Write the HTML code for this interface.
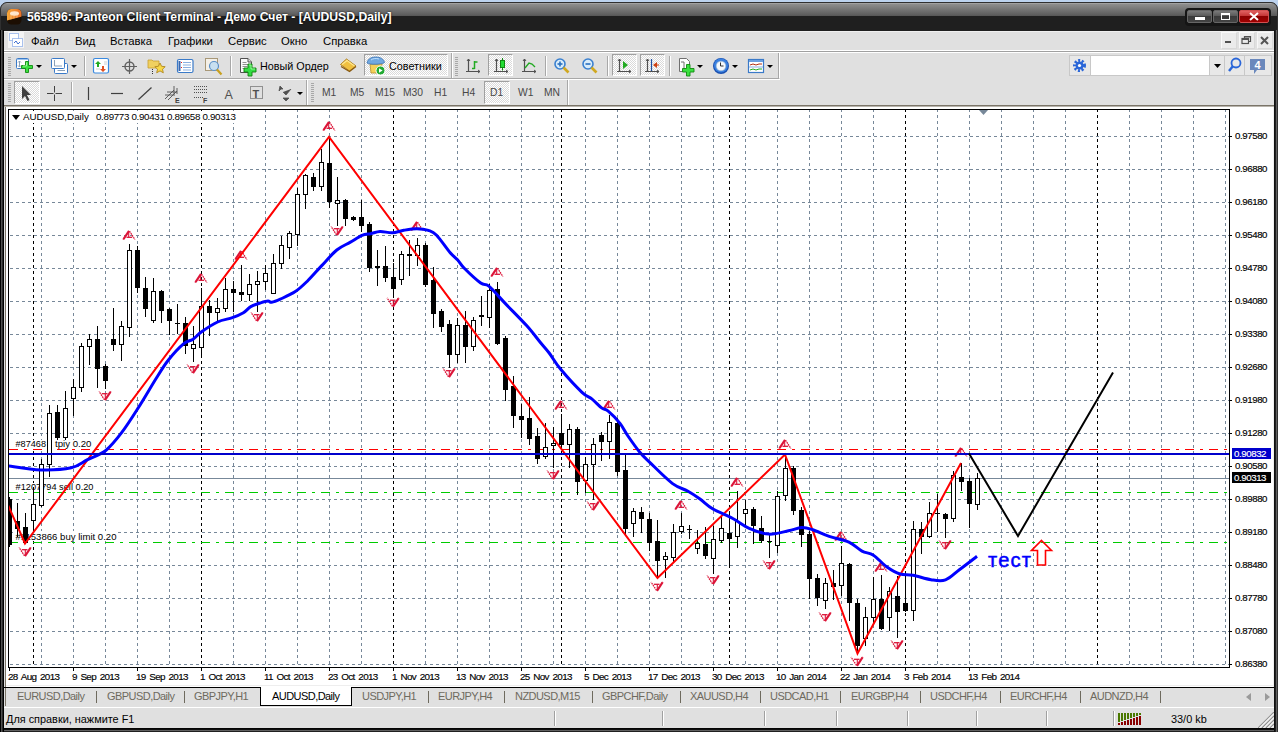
<!DOCTYPE html>
<html><head><meta charset="utf-8"><style>
*{margin:0;padding:0;box-sizing:border-box}
html,body{width:1278px;height:732px;overflow:hidden;background:#BCD2EE;font-family:"Liberation Sans",sans-serif}
.abs{position:absolute}
.pl,.dl{-webkit-text-stroke:0.15px currentColor}
#win{position:absolute;left:0;top:2px;width:1278px;height:730px;background:#1F1F1F;border-radius:7px 7px 0 0;border:1px solid #303030}
#tgrad{position:absolute;left:1px;top:3px;width:1276px;height:13px;border-radius:6px 6px 0 0;background:linear-gradient(#B4B4B4 0px,#8E8E8E 1px,#5C5C5C 12px,#555 13px)}
#title{position:absolute;left:27px;top:10px;color:#fff;font-weight:bold;font-size:12.2px;white-space:nowrap;text-shadow:0 0 2px #000}
#menubar{position:absolute;left:4px;top:31px;width:1270px;height:19px;background:#E0E0E0;border-top:1px solid #F0F0F0}
.mi{position:absolute;top:3px;font-size:11.3px;color:#000;white-space:nowrap}
#tbarea{position:absolute;left:4px;top:53px;width:1270px;height:52px;background:#E0E0E0}
.pl{position:absolute;left:1235px;font-size:9.7px;letter-spacing:-0.42px;color:#000;white-space:nowrap;line-height:14px}
.pb{color:#fff;width:39px;left:1232px;padding-left:2px;height:11px;line-height:11px}
.dl{position:absolute;top:670px;font-size:9.9px;letter-spacing:-0.65px;word-spacing:1.5px;color:#000;white-space:nowrap;line-height:14px}
.ol{position:absolute;left:15px;font-size:9.6px;color:#000;white-space:nowrap;line-height:11px}
.tab{position:absolute;top:689px;font-size:11px;letter-spacing:-0.55px;color:#6E6A5E;white-space:nowrap;line-height:14px}
.tsep{position:absolute;top:691px;width:1px;height:12px;background:#6E6A5E}
.ssep{position:absolute;top:711px;width:2px;height:15px;border-left:1px solid #A0A0A0;border-right:1px solid #fff}
</style></head><body>
<div id="win"></div>
<div id="tgrad"></div>
<!-- app icon -->
<svg class="abs" style="left:6px;top:8px" width="17" height="17"><defs><clipPath id="ic"><path d="M0 12.8L17 8.2V0H0Z"/></clipPath><linearGradient id="og" x1="0" y1="0" x2="1" y2="0"><stop offset="0" stop-color="#F8A838"/><stop offset="1" stop-color="#E8702A"/></linearGradient></defs><rect x="1" y="1" width="14.5" height="15.5" rx="4.5" fill="#1C0E02"/><g clip-path="url(#ic)"><rect x="1" y="1" width="14.5" height="15.5" rx="4.5" fill="url(#og)"/><ellipse cx="8.5" cy="5.5" rx="4.5" ry="2.2" fill="#FFF0E0" opacity="0.9"/><path d="M5 6v6M8 6v5.5M11 6v5" stroke="#FFD8B0" stroke-width="0.8" opacity="0.6"/></g></svg>
<div id="title">565896: Panteon Client Terminal - Демо Счет - [AUDUSD,Daily]</div>
<!-- window buttons -->
<div class="abs" style="left:1185px;top:8px;width:86px;height:18px;border-radius:4px;background:#151515"></div>
<div class="abs" style="left:1187px;top:10px;width:25px;height:13px;border-radius:2px;background:linear-gradient(#7A7A7A,#555 50%,#3A3A3A 50%,#444);border:1px solid #666"></div>
<div class="abs" style="left:1195px;top:17px;width:10px;height:3px;background:#fff"></div>
<div class="abs" style="left:1213px;top:10px;width:25px;height:13px;border-radius:2px;background:linear-gradient(#7A7A7A,#555 50%,#3A3A3A 50%,#444);border:1px solid #666"></div>
<div class="abs" style="left:1221px;top:13px;width:9px;height:7px;border:1px solid #fff;border-top-width:2px"></div>
<div class="abs" style="left:1239px;top:10px;width:30px;height:13px;border-radius:2px;background:linear-gradient(#E06060,#C03030 50%,#8A0000 50%,#A00000);border:1px solid #D05050"></div>
<svg class="abs" style="left:1249px;top:12px" width="10" height="9"><path d="M1 1L9 8M9 1L1 8" stroke="#fff" stroke-width="2"/></svg>

<div id="menubar"></div>
<div class="abs" style="left:4px;top:50px;width:1270px;height:1px;background:#fff"></div>
<div class="abs" style="left:4px;top:51px;width:1270px;height:1px;background:#A0A0A0"></div>
<div class="abs" style="left:4px;top:52px;width:1270px;height:1px;background:#fff"></div>
<!-- MDI icon -->
<div class="abs" style="left:8px;top:32px;width:16px;height:16px;background:#F4F4F4"></div>
<svg class="abs" style="left:9px;top:33px" width="14" height="14"><rect x="0.5" y="0.5" width="9" height="7" fill="#fff" stroke="#5A8AE0" stroke-dasharray="1 1"/><rect x="3.5" y="5.5" width="10" height="8" fill="#fff" stroke="#5A8AE0" stroke-dasharray="1 1"/><path d="M5 10l2-2 2 3 2-2" stroke="#4070D0" fill="none"/></svg>
<div class="mi" style="left:31px;top:35px">Файл</div>
<div class="mi" style="left:75px;top:35px">Вид</div>
<div class="mi" style="left:110px;top:35px">Вставка</div>
<div class="mi" style="left:168px;top:35px">Графики</div>
<div class="mi" style="left:228px;top:35px">Сервис</div>
<div class="mi" style="left:281px;top:35px">Окно</div>
<div class="mi" style="left:323px;top:35px">Справка</div>
<!-- MDI buttons -->
<div class="abs" style="left:1221px;top:32px;width:16px;height:17px;background:#EBEBEB;border:1px solid #F8F8F8;border-right-color:#D8D8D8;border-bottom-color:#D8D8D8"></div>
<div class="abs" style="left:1225px;top:41px;width:6px;height:2px;background:#505050"></div>
<div class="abs" style="left:1239px;top:32px;width:16px;height:17px;background:#EBEBEB;border:1px solid #F8F8F8;border-right-color:#D8D8D8;border-bottom-color:#D8D8D8"></div>
<svg class="abs" style="left:1241px;top:35px" width="11" height="10"><path d="M3.5 3V1.5H9.5V6.5H8" stroke="#505050" fill="none" stroke-width="1.2"/><rect x="1" y="3.5" width="6.5" height="5" stroke="#505050" fill="none" stroke-width="1.2"/><path d="M1 4.5h6.5M3.5 2h6" stroke="#505050"/></svg>
<div class="abs" style="left:1257px;top:32px;width:16px;height:17px;background:#EBEBEB;border:1px solid #F8F8F8;border-right-color:#D8D8D8;border-bottom-color:#D8D8D8"></div>
<svg class="abs" style="left:1260px;top:36px" width="9" height="9"><path d="M1 1L8 8M8 1L1 8" stroke="#555" stroke-width="2"/></svg>

<div id="tbarea"></div>
<div class="abs" style="left:4px;top:53px;width:1270px;height:25px;background:#E0E0E0"></div>
<div class="abs" style="left:4px;top:78px;width:775px;height:1px;background:#A8A8A8"></div>
<div class="abs" style="left:4px;top:79px;width:776px;height:1px;background:#fff"></div>
<div class="abs" style="left:364px;top:54px;width:84px;height:22px;background:repeating-conic-gradient(#FFFFFF 0 25%,#DADADA 0 50%) 0 0/2px 2px;border-left:1px solid #A0A0A0;border-top:1px solid #A0A0A0;border-right:1px solid #fff;border-bottom:1px solid #fff"></div>
<div class="abs" style="left:488px;top:54px;width:25px;height:22px;background:repeating-conic-gradient(#FFFFFF 0 25%,#DADADA 0 50%) 0 0/2px 2px;border-left:1px solid #A0A0A0;border-top:1px solid #A0A0A0;border-right:1px solid #fff;border-bottom:1px solid #fff"></div>
<div class="abs" style="left:612px;top:54px;width:25px;height:22px;background:repeating-conic-gradient(#FFFFFF 0 25%,#DADADA 0 50%) 0 0/2px 2px;border-left:1px solid #A0A0A0;border-top:1px solid #A0A0A0;border-right:1px solid #fff;border-bottom:1px solid #fff"></div>
<div class="abs" style="left:640px;top:54px;width:25px;height:22px;background:repeating-conic-gradient(#FFFFFF 0 25%,#DADADA 0 50%) 0 0/2px 2px;border-left:1px solid #A0A0A0;border-top:1px solid #A0A0A0;border-right:1px solid #fff;border-bottom:1px solid #fff"></div>
<div class="abs" style="left:14px;top:81px;width:26px;height:23px;background:repeating-conic-gradient(#FFFFFF 0 25%,#DADADA 0 50%) 0 0/2px 2px;border-left:1px solid #A0A0A0;border-top:1px solid #A0A0A0;border-right:1px solid #fff;border-bottom:1px solid #fff"></div>
<div class="abs" style="left:484px;top:81px;width:26px;height:23px;background:repeating-conic-gradient(#FFFFFF 0 25%,#DADADA 0 50%) 0 0/2px 2px;border-left:1px solid #A0A0A0;border-top:1px solid #A0A0A0;border-right:1px solid #fff;border-bottom:1px solid #fff"></div>
<div class="abs" style="left:1069px;top:55px;width:203px;height:21px;background:#E8E8E8;border:1px solid #C8C8C8"></div>
<div class="abs" style="left:1090px;top:56px;width:120px;height:19px;background:#fff;border-left:1px solid #C8C8C8;border-right:1px solid #C8C8C8"></div>
<div class="abs" style="left:1224px;top:56px;width:1px;height:19px;background:#C8C8C8"></div>
<div class="abs" style="left:1244px;top:56px;width:1px;height:19px;background:#C8C8C8"></div>
<svg class="abs" style="left:0;top:0" width="1278" height="110">
<path d="M778.5 53V78M451.5 53V78M306.5 80V105M567.5 80V105" stroke="#A8A8A8"/>
<path d="M779.5 53V78M452.5 53V78M307.5 80V105M568.5 80V105" stroke="#fff"/>
<path d="M8 57.5h3M8 59.5h3M8 61.5h3M8 63.5h3M8 65.5h3M8 67.5h3M8 69.5h3M8 71.5h3M8 73.5h3M8 75.5h3" stroke="#A8A8A8" stroke-width="1"/>
<path d="M455 57.5h3M455 59.5h3M455 61.5h3M455 63.5h3M455 65.5h3M455 67.5h3M455 69.5h3M455 71.5h3M455 73.5h3M455 75.5h3" stroke="#A8A8A8" stroke-width="1"/>
<path d="M8 83.5h3M8 85.5h3M8 87.5h3M8 89.5h3M8 91.5h3M8 93.5h3M8 95.5h3M8 97.5h3M8 99.5h3M8 101.5h3" stroke="#A8A8A8" stroke-width="1"/>
<path d="M311 83.5h3M311 85.5h3M311 87.5h3M311 89.5h3M311 91.5h3M311 93.5h3M311 95.5h3M311 97.5h3M311 99.5h3M311 101.5h3" stroke="#A8A8A8" stroke-width="1"/>
<path d="M84.5 56V76" stroke="#A8A8A8"/><path d="M85.5 56V76" stroke="#fff"/>
<path d="M230.5 56V76" stroke="#A8A8A8"/><path d="M231.5 56V76" stroke="#fff"/>
<path d="M545.5 56V76" stroke="#A8A8A8"/><path d="M546.5 56V76" stroke="#fff"/>
<path d="M607.5 56V76" stroke="#A8A8A8"/><path d="M608.5 56V76" stroke="#fff"/>
<path d="M669.5 56V76" stroke="#A8A8A8"/><path d="M670.5 56V76" stroke="#fff"/>
<path d="M71.5 82V103" stroke="#A8A8A8"/><path d="M72.5 82V103" stroke="#fff"/>
<rect x="16.5" y="58.5" width="12" height="10" rx="1" fill="#fff" stroke="#3A7AC8"/><path d="M17 59.5h11" stroke="#9CC4F0"/><path d="M19.5 61V67M18 62.5l1.5-1.5 1.5 1.5M18 65.5l1.5 1.5 1.5-1.5" stroke="#8AA0B8" fill="none"/><path d="M25.5 61.5h3v4h4v3h-4v4h-3v-4h-4v-3h4z" fill="#3AE040" stroke="#108A10" stroke-width="0.9"/><path d="M26.5 62.5v3.5h-3.5" stroke="#B0FFB0" stroke-width="0.8" fill="none"/>
<path d="M36 65h6l-3 3z" fill="#000"/>
<rect x="54.5" y="63.5" width="13" height="10" rx="1" fill="#fff" stroke="#3A7AC8"/><rect x="51.5" y="58.5" width="13" height="10" rx="1" fill="#fff" stroke="#3A7AC8"/><path d="M54.5 60V66H62M57.5 70.5H65" stroke="#8AA0B8" fill="none"/>
<path d="M71 65h6l-3 3z" fill="#000"/>
<rect x="93.5" y="58.5" width="15" height="14.5" rx="1.5" fill="#fff" stroke="#3A8AE0" stroke-width="1.2"/><path d="M98 61l-3 3h2v3h2v-3h2z" fill="#22AA22"/><path d="M103 72l3-3h-2v-3h-2v3h-2z" fill="#E05020"/><path d="M96 69h4M104 62h3M104 64h3" stroke="#D0D0D0"/>
<circle cx="129.5" cy="66.5" r="4.5" fill="none" stroke="#606060" stroke-width="1.4"/><path d="M129.5 59V74M122 66.5H137" stroke="#606060" stroke-width="1.2"/>
<path d="M148 60h4l1 1h6v7h-11z" fill="#F0D060" stroke="#C8A030" stroke-width="0.8"/><path d="M160 63l1.6 3.3 3.6.4-2.7 2.5.8 3.6-3.3-1.9-3.3 1.9.8-3.6-2.7-2.5 3.6-.4z" fill="#F8D848" stroke="#B08820" stroke-width="0.9"/><path d="M152.5 69v5" stroke="#333" stroke-dasharray="1 1"/>
<rect x="177.5" y="59.5" width="15.5" height="13" rx="1.5" fill="#fff" stroke="#3A7AC8" stroke-width="1.2"/><path d="M179.5 61v10" stroke="#3A6AB0" stroke-width="2"/><path d="M183 62.5h8M183 65h8M183 67.5h8M183 70h8" stroke="#8AB0E0"/><path d="M181 62.5h1M181 67.5h1" stroke="#E02020"/>
<rect x="205.5" y="58.5" width="12" height="12" fill="#F4F0E8" stroke="#A89878"/><circle cx="214" cy="66" r="4.5" fill="#C8E0F0" stroke="#5A90C8" stroke-width="1.2"/><path d="M217 69.5l4.5 5" stroke="#C8A020" stroke-width="2.2"/>
<path d="M240.5 58.5h7.5l3.5 3.5v10.5h-11z" fill="#FAFAFA" stroke="#505050"/><path d="M248 58.5v3.5h3.5" fill="#E0E0E0" stroke="#505050"/><path d="M242.5 62.5h4M242.5 64.5h6M242.5 66.5h5M242.5 68.5h3" stroke="#909090"/><path d="M248 64h4v4h4v4h-4v4h-4v-4h-4v-4h4z" fill="#33DD44" stroke="#10800E" stroke-width="0.9"/><path d="M249 65h2v4h4" stroke="#A8FFA8" stroke-width="0.8" fill="none"/>
<path d="M340.5 64.5L346.5 59l9.5 7-6.5 5z" fill="#F0C040" stroke="#A87818" stroke-width="0.9"/><path d="M342 64.5L347 60.5l7.5 5.5" fill="none" stroke="#FFE890" stroke-width="1.2"/><path d="M341 66.5l8.5 5 6.5-5" fill="none" stroke="#8A5A10" stroke-width="1.2"/>
<path d="M370 64h12l-1 9h-10z" fill="#F4D058" stroke="#B89030" stroke-width="0.8"/><path d="M367 63c1-5 5-6 9-6s8 2 8.5 5.5c-2 2-15 2.5-17.5 0.5z" fill="#70A8E0" stroke="#3A70B0" stroke-width="0.8"/><path d="M371 60c2-1.5 5-2 8-1" stroke="#C0E0FF" stroke-width="1" fill="none"/><circle cx="380.5" cy="70.5" r="4.5" fill="#22AA33" stroke="#fff" stroke-width="1"/><path d="M379 68.2v4.6l3.6-2.3z" fill="#fff"/>
<path d="M468.5 59V72M466 71.5H480" stroke="#505050" stroke-width="1.2"/><path d="M467 61l1.5-2 1.5 2M478 70l2 1.5-2 1.5" stroke="#505050" fill="none"/><path d="M474.5 61V69M472 68.5h2.5M474.5 62h3" stroke="#22AA22" stroke-width="1.5"/>
<path d="M496.5 59V72M494 71.5H508" stroke="#505050" stroke-width="1.2"/><path d="M495 61l1.5-2 1.5 2M506 70l2 1.5-2 1.5" stroke="#505050" fill="none"/><rect x="500.5" y="60.5" width="4" height="7" fill="#22DD33" stroke="#118811"/><path d="M502.5 58v2.5M502.5 67.5v3" stroke="#118811"/>
<path d="M524.5 59V72M522 71.5H536" stroke="#505050" stroke-width="1.2"/><path d="M523 61l1.5-2 1.5 2M534 70l2 1.5-2 1.5" stroke="#505050" fill="none"/><path d="M525 68l4-5 3 1 3 3" stroke="#22AA22" stroke-width="1.4" fill="none"/>
<circle cx="560" cy="64" r="5" fill="#D8ECFA" stroke="#3A80D0" stroke-width="1.6"/><path d="M563.5 67.5l5 5" stroke="#D0A820" stroke-width="2.6"/><path d="M557.5 64h5" stroke="#2A70C0" stroke-width="1.6"/><path d="M560 61.5v5" stroke="#2A70C0" stroke-width="1.6"/>
<circle cx="588" cy="64" r="5" fill="#D8ECFA" stroke="#3A80D0" stroke-width="1.6"/><path d="M591.5 67.5l5 5" stroke="#D0A820" stroke-width="2.6"/><path d="M585.5 64h5" stroke="#2A70C0" stroke-width="1.6"/>
<path d="M619.5 59V72M617 71.5H631" stroke="#505050" stroke-width="1.2"/><path d="M618 61l1.5-2 1.5 2M629 70l2 1.5-2 1.5" stroke="#505050" fill="none"/><path d="M623 61v8l5-4z" fill="#22AA22"/>
<path d="M647.5 59V72M645 71.5H659" stroke="#505050" stroke-width="1.2"/><path d="M646 61l1.5-2 1.5 2M657 70l2 1.5-2 1.5" stroke="#505050" fill="none"/><path d="M651.5 59V71" stroke="#2050A0" stroke-width="1.2"/><path d="M653 65l4-3v6z" fill="#D04010"/><path d="M655 65h4" stroke="#D04010"/>
<path d="M679.5 58.5h7l3 3v10h-10z" fill="#fff" stroke="#707070"/><path d="M681 62h3v8" stroke="#707070" fill="none"/><path d="M686.5 64.5h3.5v4h4v3.5h-4v4h-3.5v-4h-4v-3.5h4z" fill="#3AE040" stroke="#108A10" stroke-width="0.9"/>
<path d="M697 65h6l-3 3z" fill="#000"/>
<circle cx="721" cy="66" r="8" fill="#1A50B0"/><circle cx="721" cy="65.5" r="7" fill="#3A80E0"/><circle cx="721" cy="66" r="4.8" fill="#F4F8FC" stroke="#A0B8D0" stroke-width="0.6"/><path d="M720.5 62.5v3.5h3" stroke="#333" stroke-width="1" fill="none"/>
<path d="M732 65h6l-3 3z" fill="#000"/>
<rect x="748.5" y="59.5" width="15" height="13" fill="#fff" stroke="#3A7AC8" stroke-width="1.2"/><path d="M749 61h14" stroke="#6AA0E0" stroke-width="2"/><path d="M750 65l3-1 3 1 3-1 3 0" stroke="#B03010" fill="none"/><path d="M750 70l3-1 3 1 3-1 3 0" stroke="#22AA22" fill="none"/><path d="M749 67h14" stroke="#8AB0E0"/>
<path d="M767 65h6l-3 3z" fill="#000"/>
<path d="M22 86V99l3-3 2.5 5 2-1-2.5-5h4z" fill="#404040"/>
<path d="M54.5 86V92.5M54.5 94.5V101M47 93.5H53.5M55.5 93.5H62" stroke="#404040" stroke-width="1"/>
<path d="M88.5 87V100" stroke="#404040" stroke-width="1.2"/>
<path d="M111 93.5H123" stroke="#404040" stroke-width="1.2"/>
<path d="M138.5 99.5L151.5 87.5" stroke="#404040" stroke-width="1.2"/>
<path d="M165 99L174 90M168 100L177 91M165 95h10M167 92h10M174 86v8M177 88v6" stroke="#505050" stroke-width="0.9"/><text x="175" y="103" font-size="7" font-family="Liberation Sans" font-weight="bold" fill="#404040">E</text>
<path d="M194 86.5h13M194 89.5h13M194 92.5h13M194 97.5h9" stroke="#505050" stroke-dasharray="1 1"/><text x="203" y="103" font-size="7" font-family="Liberation Sans" font-weight="bold" fill="#404040">F</text>
<text x="224.5" y="98.5" font-size="12.5" font-family="Liberation Sans" fill="#505050">A</text>
<rect x="250.5" y="86.5" width="12" height="12" fill="none" stroke="#404040" stroke-dasharray="1 1"/><text x="252.5" y="97.5" font-size="11" font-family="Liberation Sans" font-weight="bold" fill="#505050">T</text>
<path d="M280 86l3 3h-2l-2 2zM283 92l3 3 5-6M286 101l3-3h-6z" fill="#505050" stroke="#505050" stroke-width="0.8"/>
<path d="M297 92h6l-3 3z" fill="#000"/>
</svg>
<div class="abs" style="left:260px;top:59px;font-size:10.8px;line-height:14px;white-space:nowrap">Новый Ордер</div>
<div class="abs" style="left:389px;top:59px;font-size:10.8px;line-height:14px;white-space:nowrap">Советники</div>
<div class="abs" style="left:322px;top:86px;font-size:10.3px;line-height:14px;color:#484848;white-space:nowrap">M1</div>
<div class="abs" style="left:350px;top:86px;font-size:10.3px;line-height:14px;color:#484848;white-space:nowrap">M5</div>
<div class="abs" style="left:375px;top:86px;font-size:10.3px;line-height:14px;color:#484848;white-space:nowrap">M15</div>
<div class="abs" style="left:403px;top:86px;font-size:10.3px;line-height:14px;color:#484848;white-space:nowrap">M30</div>
<div class="abs" style="left:434px;top:86px;font-size:10.3px;line-height:14px;color:#484848;white-space:nowrap">H1</div>
<div class="abs" style="left:462px;top:86px;font-size:10.3px;line-height:14px;color:#484848;white-space:nowrap">H4</div>
<div class="abs" style="left:490px;top:86px;font-size:10.3px;line-height:14px;color:#484848;white-space:nowrap">D1</div>
<div class="abs" style="left:518px;top:86px;font-size:10.3px;line-height:14px;color:#484848;white-space:nowrap">W1</div>
<div class="abs" style="left:544px;top:86px;font-size:10.3px;line-height:14px;color:#484848;white-space:nowrap">MN</div>
<svg class="abs" style="left:1069px;top:55px" width="203" height="21"><g transform="translate(10.5 10.5)"><circle r="5" fill="none" stroke="#2A66D8" stroke-width="3" stroke-dasharray="2 1.6"/><circle r="4" fill="#2A66D8"/><circle r="1.6" fill="#fff"/></g><path d="M145 9h7l-3.5 4z" fill="#000"/><circle cx="167" cy="8" r="4.5" fill="none" stroke="#2A66D8" stroke-width="1.8"/><path d="M164 11l-4 5" stroke="#2A66D8" stroke-width="2.4"/><path d="M181 4h15v11h-8l-3 4v-4h-4z" fill="#6A88BC"/><text x="185.5" y="13.5" font-size="11" font-weight="bold" font-family="Liberation Sans" fill="#fff">4</text></svg>

<!-- chart white area -->
<div class="abs" style="left:4px;top:105px;width:1270px;height:1px;background:#7A7468"></div>
<div class="abs" style="left:4px;top:106px;width:1270px;height:1px;background:#B8B4AC"></div>
<div class="abs" style="left:4px;top:107px;width:1270px;height:580px;background:#fff"></div>

<svg width="1278" height="732" style="position:absolute;left:0;top:0">
<defs><clipPath id="cp"><rect x="9" y="110" width="1220" height="557"/></clipPath></defs>
<g clip-path="url(#cp)" shape-rendering="crispEdges">
<path d="M10 136.5h3 M16 136.5h3 M22 136.5h3 M28 136.5h3 M34 136.5h3 M40 136.5h3 M46 136.5h3 M52 136.5h3 M58 136.5h3 M64 136.5h3 M70 136.5h3 M76 136.5h3 M82 136.5h3 M88 136.5h3 M94 136.5h3 M100 136.5h3 M106 136.5h3 M112 136.5h3 M118 136.5h3 M124 136.5h3 M130 136.5h3 M136 136.5h3 M142 136.5h3 M148 136.5h3 M154 136.5h3 M160 136.5h3 M166 136.5h3 M172 136.5h3 M178 136.5h3 M184 136.5h3 M190 136.5h3 M196 136.5h3 M202 136.5h3 M208 136.5h3 M214 136.5h3 M220 136.5h3 M226 136.5h3 M232 136.5h3 M238 136.5h3 M244 136.5h3 M250 136.5h3 M256 136.5h3 M262 136.5h3 M268 136.5h3 M274 136.5h3 M280 136.5h3 M286 136.5h3 M292 136.5h3 M298 136.5h3 M304 136.5h3 M310 136.5h3 M316 136.5h3 M322 136.5h3 M328 136.5h3 M334 136.5h3 M340 136.5h3 M346 136.5h3 M352 136.5h3 M358 136.5h3 M364 136.5h3 M370 136.5h3 M376 136.5h3 M382 136.5h3 M388 136.5h3 M394 136.5h3 M400 136.5h3 M406 136.5h3 M412 136.5h3 M418 136.5h3 M424 136.5h3 M430 136.5h3 M436 136.5h3 M442 136.5h3 M448 136.5h3 M454 136.5h3 M460 136.5h3 M466 136.5h3 M472 136.5h3 M478 136.5h3 M484 136.5h3 M490 136.5h3 M496 136.5h3 M502 136.5h3 M508 136.5h3 M514 136.5h3 M520 136.5h3 M526 136.5h3 M532 136.5h3 M538 136.5h3 M544 136.5h3 M550 136.5h3 M556 136.5h3 M562 136.5h3 M568 136.5h3 M574 136.5h3 M580 136.5h3 M586 136.5h3 M592 136.5h3 M598 136.5h3 M604 136.5h3 M610 136.5h3 M616 136.5h3 M622 136.5h3 M628 136.5h3 M634 136.5h3 M640 136.5h3 M646 136.5h3 M652 136.5h3 M658 136.5h3 M664 136.5h3 M670 136.5h3 M676 136.5h3 M682 136.5h3 M688 136.5h3 M694 136.5h3 M700 136.5h3 M706 136.5h3 M712 136.5h3 M718 136.5h3 M724 136.5h3 M730 136.5h3 M736 136.5h3 M742 136.5h3 M748 136.5h3 M754 136.5h3 M760 136.5h3 M766 136.5h3 M772 136.5h3 M778 136.5h3 M784 136.5h3 M790 136.5h3 M796 136.5h3 M802 136.5h3 M808 136.5h3 M814 136.5h3 M820 136.5h3 M826 136.5h3 M832 136.5h3 M838 136.5h3 M844 136.5h3 M850 136.5h3 M856 136.5h3 M862 136.5h3 M868 136.5h3 M874 136.5h3 M880 136.5h3 M886 136.5h3 M892 136.5h3 M898 136.5h3 M904 136.5h3 M910 136.5h3 M916 136.5h3 M922 136.5h3 M928 136.5h3 M934 136.5h3 M940 136.5h3 M946 136.5h3 M952 136.5h3 M958 136.5h3 M964 136.5h3 M970 136.5h3 M976 136.5h3 M982 136.5h3 M988 136.5h3 M994 136.5h3 M1000 136.5h3 M1006 136.5h3 M1012 136.5h3 M1018 136.5h3 M1024 136.5h3 M1030 136.5h3 M1036 136.5h3 M1042 136.5h3 M1048 136.5h3 M1054 136.5h3 M1060 136.5h3 M1066 136.5h3 M1072 136.5h3 M1078 136.5h3 M1084 136.5h3 M1090 136.5h3 M1096 136.5h3 M1102 136.5h3 M1108 136.5h3 M1114 136.5h3 M1120 136.5h3 M1126 136.5h3 M1132 136.5h3 M1138 136.5h3 M1144 136.5h3 M1150 136.5h3 M1156 136.5h3 M1162 136.5h3 M1168 136.5h3 M1174 136.5h3 M1180 136.5h3 M1186 136.5h3 M1192 136.5h3 M1198 136.5h3 M1204 136.5h3 M1210 136.5h3 M1216 136.5h3 M1222 136.5h3 M1228 136.5h3 M10 169.5h3 M16 169.5h3 M22 169.5h3 M28 169.5h3 M34 169.5h3 M40 169.5h3 M46 169.5h3 M52 169.5h3 M58 169.5h3 M64 169.5h3 M70 169.5h3 M76 169.5h3 M82 169.5h3 M88 169.5h3 M94 169.5h3 M100 169.5h3 M106 169.5h3 M112 169.5h3 M118 169.5h3 M124 169.5h3 M130 169.5h3 M136 169.5h3 M142 169.5h3 M148 169.5h3 M154 169.5h3 M160 169.5h3 M166 169.5h3 M172 169.5h3 M178 169.5h3 M184 169.5h3 M190 169.5h3 M196 169.5h3 M202 169.5h3 M208 169.5h3 M214 169.5h3 M220 169.5h3 M226 169.5h3 M232 169.5h3 M238 169.5h3 M244 169.5h3 M250 169.5h3 M256 169.5h3 M262 169.5h3 M268 169.5h3 M274 169.5h3 M280 169.5h3 M286 169.5h3 M292 169.5h3 M298 169.5h3 M304 169.5h3 M310 169.5h3 M316 169.5h3 M322 169.5h3 M328 169.5h3 M334 169.5h3 M340 169.5h3 M346 169.5h3 M352 169.5h3 M358 169.5h3 M364 169.5h3 M370 169.5h3 M376 169.5h3 M382 169.5h3 M388 169.5h3 M394 169.5h3 M400 169.5h3 M406 169.5h3 M412 169.5h3 M418 169.5h3 M424 169.5h3 M430 169.5h3 M436 169.5h3 M442 169.5h3 M448 169.5h3 M454 169.5h3 M460 169.5h3 M466 169.5h3 M472 169.5h3 M478 169.5h3 M484 169.5h3 M490 169.5h3 M496 169.5h3 M502 169.5h3 M508 169.5h3 M514 169.5h3 M520 169.5h3 M526 169.5h3 M532 169.5h3 M538 169.5h3 M544 169.5h3 M550 169.5h3 M556 169.5h3 M562 169.5h3 M568 169.5h3 M574 169.5h3 M580 169.5h3 M586 169.5h3 M592 169.5h3 M598 169.5h3 M604 169.5h3 M610 169.5h3 M616 169.5h3 M622 169.5h3 M628 169.5h3 M634 169.5h3 M640 169.5h3 M646 169.5h3 M652 169.5h3 M658 169.5h3 M664 169.5h3 M670 169.5h3 M676 169.5h3 M682 169.5h3 M688 169.5h3 M694 169.5h3 M700 169.5h3 M706 169.5h3 M712 169.5h3 M718 169.5h3 M724 169.5h3 M730 169.5h3 M736 169.5h3 M742 169.5h3 M748 169.5h3 M754 169.5h3 M760 169.5h3 M766 169.5h3 M772 169.5h3 M778 169.5h3 M784 169.5h3 M790 169.5h3 M796 169.5h3 M802 169.5h3 M808 169.5h3 M814 169.5h3 M820 169.5h3 M826 169.5h3 M832 169.5h3 M838 169.5h3 M844 169.5h3 M850 169.5h3 M856 169.5h3 M862 169.5h3 M868 169.5h3 M874 169.5h3 M880 169.5h3 M886 169.5h3 M892 169.5h3 M898 169.5h3 M904 169.5h3 M910 169.5h3 M916 169.5h3 M922 169.5h3 M928 169.5h3 M934 169.5h3 M940 169.5h3 M946 169.5h3 M952 169.5h3 M958 169.5h3 M964 169.5h3 M970 169.5h3 M976 169.5h3 M982 169.5h3 M988 169.5h3 M994 169.5h3 M1000 169.5h3 M1006 169.5h3 M1012 169.5h3 M1018 169.5h3 M1024 169.5h3 M1030 169.5h3 M1036 169.5h3 M1042 169.5h3 M1048 169.5h3 M1054 169.5h3 M1060 169.5h3 M1066 169.5h3 M1072 169.5h3 M1078 169.5h3 M1084 169.5h3 M1090 169.5h3 M1096 169.5h3 M1102 169.5h3 M1108 169.5h3 M1114 169.5h3 M1120 169.5h3 M1126 169.5h3 M1132 169.5h3 M1138 169.5h3 M1144 169.5h3 M1150 169.5h3 M1156 169.5h3 M1162 169.5h3 M1168 169.5h3 M1174 169.5h3 M1180 169.5h3 M1186 169.5h3 M1192 169.5h3 M1198 169.5h3 M1204 169.5h3 M1210 169.5h3 M1216 169.5h3 M1222 169.5h3 M1228 169.5h3 M10 202.5h3 M16 202.5h3 M22 202.5h3 M28 202.5h3 M34 202.5h3 M40 202.5h3 M46 202.5h3 M52 202.5h3 M58 202.5h3 M64 202.5h3 M70 202.5h3 M76 202.5h3 M82 202.5h3 M88 202.5h3 M94 202.5h3 M100 202.5h3 M106 202.5h3 M112 202.5h3 M118 202.5h3 M124 202.5h3 M130 202.5h3 M136 202.5h3 M142 202.5h3 M148 202.5h3 M154 202.5h3 M160 202.5h3 M166 202.5h3 M172 202.5h3 M178 202.5h3 M184 202.5h3 M190 202.5h3 M196 202.5h3 M202 202.5h3 M208 202.5h3 M214 202.5h3 M220 202.5h3 M226 202.5h3 M232 202.5h3 M238 202.5h3 M244 202.5h3 M250 202.5h3 M256 202.5h3 M262 202.5h3 M268 202.5h3 M274 202.5h3 M280 202.5h3 M286 202.5h3 M292 202.5h3 M298 202.5h3 M304 202.5h3 M310 202.5h3 M316 202.5h3 M322 202.5h3 M328 202.5h3 M334 202.5h3 M340 202.5h3 M346 202.5h3 M352 202.5h3 M358 202.5h3 M364 202.5h3 M370 202.5h3 M376 202.5h3 M382 202.5h3 M388 202.5h3 M394 202.5h3 M400 202.5h3 M406 202.5h3 M412 202.5h3 M418 202.5h3 M424 202.5h3 M430 202.5h3 M436 202.5h3 M442 202.5h3 M448 202.5h3 M454 202.5h3 M460 202.5h3 M466 202.5h3 M472 202.5h3 M478 202.5h3 M484 202.5h3 M490 202.5h3 M496 202.5h3 M502 202.5h3 M508 202.5h3 M514 202.5h3 M520 202.5h3 M526 202.5h3 M532 202.5h3 M538 202.5h3 M544 202.5h3 M550 202.5h3 M556 202.5h3 M562 202.5h3 M568 202.5h3 M574 202.5h3 M580 202.5h3 M586 202.5h3 M592 202.5h3 M598 202.5h3 M604 202.5h3 M610 202.5h3 M616 202.5h3 M622 202.5h3 M628 202.5h3 M634 202.5h3 M640 202.5h3 M646 202.5h3 M652 202.5h3 M658 202.5h3 M664 202.5h3 M670 202.5h3 M676 202.5h3 M682 202.5h3 M688 202.5h3 M694 202.5h3 M700 202.5h3 M706 202.5h3 M712 202.5h3 M718 202.5h3 M724 202.5h3 M730 202.5h3 M736 202.5h3 M742 202.5h3 M748 202.5h3 M754 202.5h3 M760 202.5h3 M766 202.5h3 M772 202.5h3 M778 202.5h3 M784 202.5h3 M790 202.5h3 M796 202.5h3 M802 202.5h3 M808 202.5h3 M814 202.5h3 M820 202.5h3 M826 202.5h3 M832 202.5h3 M838 202.5h3 M844 202.5h3 M850 202.5h3 M856 202.5h3 M862 202.5h3 M868 202.5h3 M874 202.5h3 M880 202.5h3 M886 202.5h3 M892 202.5h3 M898 202.5h3 M904 202.5h3 M910 202.5h3 M916 202.5h3 M922 202.5h3 M928 202.5h3 M934 202.5h3 M940 202.5h3 M946 202.5h3 M952 202.5h3 M958 202.5h3 M964 202.5h3 M970 202.5h3 M976 202.5h3 M982 202.5h3 M988 202.5h3 M994 202.5h3 M1000 202.5h3 M1006 202.5h3 M1012 202.5h3 M1018 202.5h3 M1024 202.5h3 M1030 202.5h3 M1036 202.5h3 M1042 202.5h3 M1048 202.5h3 M1054 202.5h3 M1060 202.5h3 M1066 202.5h3 M1072 202.5h3 M1078 202.5h3 M1084 202.5h3 M1090 202.5h3 M1096 202.5h3 M1102 202.5h3 M1108 202.5h3 M1114 202.5h3 M1120 202.5h3 M1126 202.5h3 M1132 202.5h3 M1138 202.5h3 M1144 202.5h3 M1150 202.5h3 M1156 202.5h3 M1162 202.5h3 M1168 202.5h3 M1174 202.5h3 M1180 202.5h3 M1186 202.5h3 M1192 202.5h3 M1198 202.5h3 M1204 202.5h3 M1210 202.5h3 M1216 202.5h3 M1222 202.5h3 M1228 202.5h3 M10 235.5h3 M16 235.5h3 M22 235.5h3 M28 235.5h3 M34 235.5h3 M40 235.5h3 M46 235.5h3 M52 235.5h3 M58 235.5h3 M64 235.5h3 M70 235.5h3 M76 235.5h3 M82 235.5h3 M88 235.5h3 M94 235.5h3 M100 235.5h3 M106 235.5h3 M112 235.5h3 M118 235.5h3 M124 235.5h3 M130 235.5h3 M136 235.5h3 M142 235.5h3 M148 235.5h3 M154 235.5h3 M160 235.5h3 M166 235.5h3 M172 235.5h3 M178 235.5h3 M184 235.5h3 M190 235.5h3 M196 235.5h3 M202 235.5h3 M208 235.5h3 M214 235.5h3 M220 235.5h3 M226 235.5h3 M232 235.5h3 M238 235.5h3 M244 235.5h3 M250 235.5h3 M256 235.5h3 M262 235.5h3 M268 235.5h3 M274 235.5h3 M280 235.5h3 M286 235.5h3 M292 235.5h3 M298 235.5h3 M304 235.5h3 M310 235.5h3 M316 235.5h3 M322 235.5h3 M328 235.5h3 M334 235.5h3 M340 235.5h3 M346 235.5h3 M352 235.5h3 M358 235.5h3 M364 235.5h3 M370 235.5h3 M376 235.5h3 M382 235.5h3 M388 235.5h3 M394 235.5h3 M400 235.5h3 M406 235.5h3 M412 235.5h3 M418 235.5h3 M424 235.5h3 M430 235.5h3 M436 235.5h3 M442 235.5h3 M448 235.5h3 M454 235.5h3 M460 235.5h3 M466 235.5h3 M472 235.5h3 M478 235.5h3 M484 235.5h3 M490 235.5h3 M496 235.5h3 M502 235.5h3 M508 235.5h3 M514 235.5h3 M520 235.5h3 M526 235.5h3 M532 235.5h3 M538 235.5h3 M544 235.5h3 M550 235.5h3 M556 235.5h3 M562 235.5h3 M568 235.5h3 M574 235.5h3 M580 235.5h3 M586 235.5h3 M592 235.5h3 M598 235.5h3 M604 235.5h3 M610 235.5h3 M616 235.5h3 M622 235.5h3 M628 235.5h3 M634 235.5h3 M640 235.5h3 M646 235.5h3 M652 235.5h3 M658 235.5h3 M664 235.5h3 M670 235.5h3 M676 235.5h3 M682 235.5h3 M688 235.5h3 M694 235.5h3 M700 235.5h3 M706 235.5h3 M712 235.5h3 M718 235.5h3 M724 235.5h3 M730 235.5h3 M736 235.5h3 M742 235.5h3 M748 235.5h3 M754 235.5h3 M760 235.5h3 M766 235.5h3 M772 235.5h3 M778 235.5h3 M784 235.5h3 M790 235.5h3 M796 235.5h3 M802 235.5h3 M808 235.5h3 M814 235.5h3 M820 235.5h3 M826 235.5h3 M832 235.5h3 M838 235.5h3 M844 235.5h3 M850 235.5h3 M856 235.5h3 M862 235.5h3 M868 235.5h3 M874 235.5h3 M880 235.5h3 M886 235.5h3 M892 235.5h3 M898 235.5h3 M904 235.5h3 M910 235.5h3 M916 235.5h3 M922 235.5h3 M928 235.5h3 M934 235.5h3 M940 235.5h3 M946 235.5h3 M952 235.5h3 M958 235.5h3 M964 235.5h3 M970 235.5h3 M976 235.5h3 M982 235.5h3 M988 235.5h3 M994 235.5h3 M1000 235.5h3 M1006 235.5h3 M1012 235.5h3 M1018 235.5h3 M1024 235.5h3 M1030 235.5h3 M1036 235.5h3 M1042 235.5h3 M1048 235.5h3 M1054 235.5h3 M1060 235.5h3 M1066 235.5h3 M1072 235.5h3 M1078 235.5h3 M1084 235.5h3 M1090 235.5h3 M1096 235.5h3 M1102 235.5h3 M1108 235.5h3 M1114 235.5h3 M1120 235.5h3 M1126 235.5h3 M1132 235.5h3 M1138 235.5h3 M1144 235.5h3 M1150 235.5h3 M1156 235.5h3 M1162 235.5h3 M1168 235.5h3 M1174 235.5h3 M1180 235.5h3 M1186 235.5h3 M1192 235.5h3 M1198 235.5h3 M1204 235.5h3 M1210 235.5h3 M1216 235.5h3 M1222 235.5h3 M1228 235.5h3 M10 268.5h3 M16 268.5h3 M22 268.5h3 M28 268.5h3 M34 268.5h3 M40 268.5h3 M46 268.5h3 M52 268.5h3 M58 268.5h3 M64 268.5h3 M70 268.5h3 M76 268.5h3 M82 268.5h3 M88 268.5h3 M94 268.5h3 M100 268.5h3 M106 268.5h3 M112 268.5h3 M118 268.5h3 M124 268.5h3 M130 268.5h3 M136 268.5h3 M142 268.5h3 M148 268.5h3 M154 268.5h3 M160 268.5h3 M166 268.5h3 M172 268.5h3 M178 268.5h3 M184 268.5h3 M190 268.5h3 M196 268.5h3 M202 268.5h3 M208 268.5h3 M214 268.5h3 M220 268.5h3 M226 268.5h3 M232 268.5h3 M238 268.5h3 M244 268.5h3 M250 268.5h3 M256 268.5h3 M262 268.5h3 M268 268.5h3 M274 268.5h3 M280 268.5h3 M286 268.5h3 M292 268.5h3 M298 268.5h3 M304 268.5h3 M310 268.5h3 M316 268.5h3 M322 268.5h3 M328 268.5h3 M334 268.5h3 M340 268.5h3 M346 268.5h3 M352 268.5h3 M358 268.5h3 M364 268.5h3 M370 268.5h3 M376 268.5h3 M382 268.5h3 M388 268.5h3 M394 268.5h3 M400 268.5h3 M406 268.5h3 M412 268.5h3 M418 268.5h3 M424 268.5h3 M430 268.5h3 M436 268.5h3 M442 268.5h3 M448 268.5h3 M454 268.5h3 M460 268.5h3 M466 268.5h3 M472 268.5h3 M478 268.5h3 M484 268.5h3 M490 268.5h3 M496 268.5h3 M502 268.5h3 M508 268.5h3 M514 268.5h3 M520 268.5h3 M526 268.5h3 M532 268.5h3 M538 268.5h3 M544 268.5h3 M550 268.5h3 M556 268.5h3 M562 268.5h3 M568 268.5h3 M574 268.5h3 M580 268.5h3 M586 268.5h3 M592 268.5h3 M598 268.5h3 M604 268.5h3 M610 268.5h3 M616 268.5h3 M622 268.5h3 M628 268.5h3 M634 268.5h3 M640 268.5h3 M646 268.5h3 M652 268.5h3 M658 268.5h3 M664 268.5h3 M670 268.5h3 M676 268.5h3 M682 268.5h3 M688 268.5h3 M694 268.5h3 M700 268.5h3 M706 268.5h3 M712 268.5h3 M718 268.5h3 M724 268.5h3 M730 268.5h3 M736 268.5h3 M742 268.5h3 M748 268.5h3 M754 268.5h3 M760 268.5h3 M766 268.5h3 M772 268.5h3 M778 268.5h3 M784 268.5h3 M790 268.5h3 M796 268.5h3 M802 268.5h3 M808 268.5h3 M814 268.5h3 M820 268.5h3 M826 268.5h3 M832 268.5h3 M838 268.5h3 M844 268.5h3 M850 268.5h3 M856 268.5h3 M862 268.5h3 M868 268.5h3 M874 268.5h3 M880 268.5h3 M886 268.5h3 M892 268.5h3 M898 268.5h3 M904 268.5h3 M910 268.5h3 M916 268.5h3 M922 268.5h3 M928 268.5h3 M934 268.5h3 M940 268.5h3 M946 268.5h3 M952 268.5h3 M958 268.5h3 M964 268.5h3 M970 268.5h3 M976 268.5h3 M982 268.5h3 M988 268.5h3 M994 268.5h3 M1000 268.5h3 M1006 268.5h3 M1012 268.5h3 M1018 268.5h3 M1024 268.5h3 M1030 268.5h3 M1036 268.5h3 M1042 268.5h3 M1048 268.5h3 M1054 268.5h3 M1060 268.5h3 M1066 268.5h3 M1072 268.5h3 M1078 268.5h3 M1084 268.5h3 M1090 268.5h3 M1096 268.5h3 M1102 268.5h3 M1108 268.5h3 M1114 268.5h3 M1120 268.5h3 M1126 268.5h3 M1132 268.5h3 M1138 268.5h3 M1144 268.5h3 M1150 268.5h3 M1156 268.5h3 M1162 268.5h3 M1168 268.5h3 M1174 268.5h3 M1180 268.5h3 M1186 268.5h3 M1192 268.5h3 M1198 268.5h3 M1204 268.5h3 M1210 268.5h3 M1216 268.5h3 M1222 268.5h3 M1228 268.5h3 M10 301.5h3 M16 301.5h3 M22 301.5h3 M28 301.5h3 M34 301.5h3 M40 301.5h3 M46 301.5h3 M52 301.5h3 M58 301.5h3 M64 301.5h3 M70 301.5h3 M76 301.5h3 M82 301.5h3 M88 301.5h3 M94 301.5h3 M100 301.5h3 M106 301.5h3 M112 301.5h3 M118 301.5h3 M124 301.5h3 M130 301.5h3 M136 301.5h3 M142 301.5h3 M148 301.5h3 M154 301.5h3 M160 301.5h3 M166 301.5h3 M172 301.5h3 M178 301.5h3 M184 301.5h3 M190 301.5h3 M196 301.5h3 M202 301.5h3 M208 301.5h3 M214 301.5h3 M220 301.5h3 M226 301.5h3 M232 301.5h3 M238 301.5h3 M244 301.5h3 M250 301.5h3 M256 301.5h3 M262 301.5h3 M268 301.5h3 M274 301.5h3 M280 301.5h3 M286 301.5h3 M292 301.5h3 M298 301.5h3 M304 301.5h3 M310 301.5h3 M316 301.5h3 M322 301.5h3 M328 301.5h3 M334 301.5h3 M340 301.5h3 M346 301.5h3 M352 301.5h3 M358 301.5h3 M364 301.5h3 M370 301.5h3 M376 301.5h3 M382 301.5h3 M388 301.5h3 M394 301.5h3 M400 301.5h3 M406 301.5h3 M412 301.5h3 M418 301.5h3 M424 301.5h3 M430 301.5h3 M436 301.5h3 M442 301.5h3 M448 301.5h3 M454 301.5h3 M460 301.5h3 M466 301.5h3 M472 301.5h3 M478 301.5h3 M484 301.5h3 M490 301.5h3 M496 301.5h3 M502 301.5h3 M508 301.5h3 M514 301.5h3 M520 301.5h3 M526 301.5h3 M532 301.5h3 M538 301.5h3 M544 301.5h3 M550 301.5h3 M556 301.5h3 M562 301.5h3 M568 301.5h3 M574 301.5h3 M580 301.5h3 M586 301.5h3 M592 301.5h3 M598 301.5h3 M604 301.5h3 M610 301.5h3 M616 301.5h3 M622 301.5h3 M628 301.5h3 M634 301.5h3 M640 301.5h3 M646 301.5h3 M652 301.5h3 M658 301.5h3 M664 301.5h3 M670 301.5h3 M676 301.5h3 M682 301.5h3 M688 301.5h3 M694 301.5h3 M700 301.5h3 M706 301.5h3 M712 301.5h3 M718 301.5h3 M724 301.5h3 M730 301.5h3 M736 301.5h3 M742 301.5h3 M748 301.5h3 M754 301.5h3 M760 301.5h3 M766 301.5h3 M772 301.5h3 M778 301.5h3 M784 301.5h3 M790 301.5h3 M796 301.5h3 M802 301.5h3 M808 301.5h3 M814 301.5h3 M820 301.5h3 M826 301.5h3 M832 301.5h3 M838 301.5h3 M844 301.5h3 M850 301.5h3 M856 301.5h3 M862 301.5h3 M868 301.5h3 M874 301.5h3 M880 301.5h3 M886 301.5h3 M892 301.5h3 M898 301.5h3 M904 301.5h3 M910 301.5h3 M916 301.5h3 M922 301.5h3 M928 301.5h3 M934 301.5h3 M940 301.5h3 M946 301.5h3 M952 301.5h3 M958 301.5h3 M964 301.5h3 M970 301.5h3 M976 301.5h3 M982 301.5h3 M988 301.5h3 M994 301.5h3 M1000 301.5h3 M1006 301.5h3 M1012 301.5h3 M1018 301.5h3 M1024 301.5h3 M1030 301.5h3 M1036 301.5h3 M1042 301.5h3 M1048 301.5h3 M1054 301.5h3 M1060 301.5h3 M1066 301.5h3 M1072 301.5h3 M1078 301.5h3 M1084 301.5h3 M1090 301.5h3 M1096 301.5h3 M1102 301.5h3 M1108 301.5h3 M1114 301.5h3 M1120 301.5h3 M1126 301.5h3 M1132 301.5h3 M1138 301.5h3 M1144 301.5h3 M1150 301.5h3 M1156 301.5h3 M1162 301.5h3 M1168 301.5h3 M1174 301.5h3 M1180 301.5h3 M1186 301.5h3 M1192 301.5h3 M1198 301.5h3 M1204 301.5h3 M1210 301.5h3 M1216 301.5h3 M1222 301.5h3 M1228 301.5h3 M10 334.5h3 M16 334.5h3 M22 334.5h3 M28 334.5h3 M34 334.5h3 M40 334.5h3 M46 334.5h3 M52 334.5h3 M58 334.5h3 M64 334.5h3 M70 334.5h3 M76 334.5h3 M82 334.5h3 M88 334.5h3 M94 334.5h3 M100 334.5h3 M106 334.5h3 M112 334.5h3 M118 334.5h3 M124 334.5h3 M130 334.5h3 M136 334.5h3 M142 334.5h3 M148 334.5h3 M154 334.5h3 M160 334.5h3 M166 334.5h3 M172 334.5h3 M178 334.5h3 M184 334.5h3 M190 334.5h3 M196 334.5h3 M202 334.5h3 M208 334.5h3 M214 334.5h3 M220 334.5h3 M226 334.5h3 M232 334.5h3 M238 334.5h3 M244 334.5h3 M250 334.5h3 M256 334.5h3 M262 334.5h3 M268 334.5h3 M274 334.5h3 M280 334.5h3 M286 334.5h3 M292 334.5h3 M298 334.5h3 M304 334.5h3 M310 334.5h3 M316 334.5h3 M322 334.5h3 M328 334.5h3 M334 334.5h3 M340 334.5h3 M346 334.5h3 M352 334.5h3 M358 334.5h3 M364 334.5h3 M370 334.5h3 M376 334.5h3 M382 334.5h3 M388 334.5h3 M394 334.5h3 M400 334.5h3 M406 334.5h3 M412 334.5h3 M418 334.5h3 M424 334.5h3 M430 334.5h3 M436 334.5h3 M442 334.5h3 M448 334.5h3 M454 334.5h3 M460 334.5h3 M466 334.5h3 M472 334.5h3 M478 334.5h3 M484 334.5h3 M490 334.5h3 M496 334.5h3 M502 334.5h3 M508 334.5h3 M514 334.5h3 M520 334.5h3 M526 334.5h3 M532 334.5h3 M538 334.5h3 M544 334.5h3 M550 334.5h3 M556 334.5h3 M562 334.5h3 M568 334.5h3 M574 334.5h3 M580 334.5h3 M586 334.5h3 M592 334.5h3 M598 334.5h3 M604 334.5h3 M610 334.5h3 M616 334.5h3 M622 334.5h3 M628 334.5h3 M634 334.5h3 M640 334.5h3 M646 334.5h3 M652 334.5h3 M658 334.5h3 M664 334.5h3 M670 334.5h3 M676 334.5h3 M682 334.5h3 M688 334.5h3 M694 334.5h3 M700 334.5h3 M706 334.5h3 M712 334.5h3 M718 334.5h3 M724 334.5h3 M730 334.5h3 M736 334.5h3 M742 334.5h3 M748 334.5h3 M754 334.5h3 M760 334.5h3 M766 334.5h3 M772 334.5h3 M778 334.5h3 M784 334.5h3 M790 334.5h3 M796 334.5h3 M802 334.5h3 M808 334.5h3 M814 334.5h3 M820 334.5h3 M826 334.5h3 M832 334.5h3 M838 334.5h3 M844 334.5h3 M850 334.5h3 M856 334.5h3 M862 334.5h3 M868 334.5h3 M874 334.5h3 M880 334.5h3 M886 334.5h3 M892 334.5h3 M898 334.5h3 M904 334.5h3 M910 334.5h3 M916 334.5h3 M922 334.5h3 M928 334.5h3 M934 334.5h3 M940 334.5h3 M946 334.5h3 M952 334.5h3 M958 334.5h3 M964 334.5h3 M970 334.5h3 M976 334.5h3 M982 334.5h3 M988 334.5h3 M994 334.5h3 M1000 334.5h3 M1006 334.5h3 M1012 334.5h3 M1018 334.5h3 M1024 334.5h3 M1030 334.5h3 M1036 334.5h3 M1042 334.5h3 M1048 334.5h3 M1054 334.5h3 M1060 334.5h3 M1066 334.5h3 M1072 334.5h3 M1078 334.5h3 M1084 334.5h3 M1090 334.5h3 M1096 334.5h3 M1102 334.5h3 M1108 334.5h3 M1114 334.5h3 M1120 334.5h3 M1126 334.5h3 M1132 334.5h3 M1138 334.5h3 M1144 334.5h3 M1150 334.5h3 M1156 334.5h3 M1162 334.5h3 M1168 334.5h3 M1174 334.5h3 M1180 334.5h3 M1186 334.5h3 M1192 334.5h3 M1198 334.5h3 M1204 334.5h3 M1210 334.5h3 M1216 334.5h3 M1222 334.5h3 M1228 334.5h3 M10 367.5h3 M16 367.5h3 M22 367.5h3 M28 367.5h3 M34 367.5h3 M40 367.5h3 M46 367.5h3 M52 367.5h3 M58 367.5h3 M64 367.5h3 M70 367.5h3 M76 367.5h3 M82 367.5h3 M88 367.5h3 M94 367.5h3 M100 367.5h3 M106 367.5h3 M112 367.5h3 M118 367.5h3 M124 367.5h3 M130 367.5h3 M136 367.5h3 M142 367.5h3 M148 367.5h3 M154 367.5h3 M160 367.5h3 M166 367.5h3 M172 367.5h3 M178 367.5h3 M184 367.5h3 M190 367.5h3 M196 367.5h3 M202 367.5h3 M208 367.5h3 M214 367.5h3 M220 367.5h3 M226 367.5h3 M232 367.5h3 M238 367.5h3 M244 367.5h3 M250 367.5h3 M256 367.5h3 M262 367.5h3 M268 367.5h3 M274 367.5h3 M280 367.5h3 M286 367.5h3 M292 367.5h3 M298 367.5h3 M304 367.5h3 M310 367.5h3 M316 367.5h3 M322 367.5h3 M328 367.5h3 M334 367.5h3 M340 367.5h3 M346 367.5h3 M352 367.5h3 M358 367.5h3 M364 367.5h3 M370 367.5h3 M376 367.5h3 M382 367.5h3 M388 367.5h3 M394 367.5h3 M400 367.5h3 M406 367.5h3 M412 367.5h3 M418 367.5h3 M424 367.5h3 M430 367.5h3 M436 367.5h3 M442 367.5h3 M448 367.5h3 M454 367.5h3 M460 367.5h3 M466 367.5h3 M472 367.5h3 M478 367.5h3 M484 367.5h3 M490 367.5h3 M496 367.5h3 M502 367.5h3 M508 367.5h3 M514 367.5h3 M520 367.5h3 M526 367.5h3 M532 367.5h3 M538 367.5h3 M544 367.5h3 M550 367.5h3 M556 367.5h3 M562 367.5h3 M568 367.5h3 M574 367.5h3 M580 367.5h3 M586 367.5h3 M592 367.5h3 M598 367.5h3 M604 367.5h3 M610 367.5h3 M616 367.5h3 M622 367.5h3 M628 367.5h3 M634 367.5h3 M640 367.5h3 M646 367.5h3 M652 367.5h3 M658 367.5h3 M664 367.5h3 M670 367.5h3 M676 367.5h3 M682 367.5h3 M688 367.5h3 M694 367.5h3 M700 367.5h3 M706 367.5h3 M712 367.5h3 M718 367.5h3 M724 367.5h3 M730 367.5h3 M736 367.5h3 M742 367.5h3 M748 367.5h3 M754 367.5h3 M760 367.5h3 M766 367.5h3 M772 367.5h3 M778 367.5h3 M784 367.5h3 M790 367.5h3 M796 367.5h3 M802 367.5h3 M808 367.5h3 M814 367.5h3 M820 367.5h3 M826 367.5h3 M832 367.5h3 M838 367.5h3 M844 367.5h3 M850 367.5h3 M856 367.5h3 M862 367.5h3 M868 367.5h3 M874 367.5h3 M880 367.5h3 M886 367.5h3 M892 367.5h3 M898 367.5h3 M904 367.5h3 M910 367.5h3 M916 367.5h3 M922 367.5h3 M928 367.5h3 M934 367.5h3 M940 367.5h3 M946 367.5h3 M952 367.5h3 M958 367.5h3 M964 367.5h3 M970 367.5h3 M976 367.5h3 M982 367.5h3 M988 367.5h3 M994 367.5h3 M1000 367.5h3 M1006 367.5h3 M1012 367.5h3 M1018 367.5h3 M1024 367.5h3 M1030 367.5h3 M1036 367.5h3 M1042 367.5h3 M1048 367.5h3 M1054 367.5h3 M1060 367.5h3 M1066 367.5h3 M1072 367.5h3 M1078 367.5h3 M1084 367.5h3 M1090 367.5h3 M1096 367.5h3 M1102 367.5h3 M1108 367.5h3 M1114 367.5h3 M1120 367.5h3 M1126 367.5h3 M1132 367.5h3 M1138 367.5h3 M1144 367.5h3 M1150 367.5h3 M1156 367.5h3 M1162 367.5h3 M1168 367.5h3 M1174 367.5h3 M1180 367.5h3 M1186 367.5h3 M1192 367.5h3 M1198 367.5h3 M1204 367.5h3 M1210 367.5h3 M1216 367.5h3 M1222 367.5h3 M1228 367.5h3 M10 400.5h3 M16 400.5h3 M22 400.5h3 M28 400.5h3 M34 400.5h3 M40 400.5h3 M46 400.5h3 M52 400.5h3 M58 400.5h3 M64 400.5h3 M70 400.5h3 M76 400.5h3 M82 400.5h3 M88 400.5h3 M94 400.5h3 M100 400.5h3 M106 400.5h3 M112 400.5h3 M118 400.5h3 M124 400.5h3 M130 400.5h3 M136 400.5h3 M142 400.5h3 M148 400.5h3 M154 400.5h3 M160 400.5h3 M166 400.5h3 M172 400.5h3 M178 400.5h3 M184 400.5h3 M190 400.5h3 M196 400.5h3 M202 400.5h3 M208 400.5h3 M214 400.5h3 M220 400.5h3 M226 400.5h3 M232 400.5h3 M238 400.5h3 M244 400.5h3 M250 400.5h3 M256 400.5h3 M262 400.5h3 M268 400.5h3 M274 400.5h3 M280 400.5h3 M286 400.5h3 M292 400.5h3 M298 400.5h3 M304 400.5h3 M310 400.5h3 M316 400.5h3 M322 400.5h3 M328 400.5h3 M334 400.5h3 M340 400.5h3 M346 400.5h3 M352 400.5h3 M358 400.5h3 M364 400.5h3 M370 400.5h3 M376 400.5h3 M382 400.5h3 M388 400.5h3 M394 400.5h3 M400 400.5h3 M406 400.5h3 M412 400.5h3 M418 400.5h3 M424 400.5h3 M430 400.5h3 M436 400.5h3 M442 400.5h3 M448 400.5h3 M454 400.5h3 M460 400.5h3 M466 400.5h3 M472 400.5h3 M478 400.5h3 M484 400.5h3 M490 400.5h3 M496 400.5h3 M502 400.5h3 M508 400.5h3 M514 400.5h3 M520 400.5h3 M526 400.5h3 M532 400.5h3 M538 400.5h3 M544 400.5h3 M550 400.5h3 M556 400.5h3 M562 400.5h3 M568 400.5h3 M574 400.5h3 M580 400.5h3 M586 400.5h3 M592 400.5h3 M598 400.5h3 M604 400.5h3 M610 400.5h3 M616 400.5h3 M622 400.5h3 M628 400.5h3 M634 400.5h3 M640 400.5h3 M646 400.5h3 M652 400.5h3 M658 400.5h3 M664 400.5h3 M670 400.5h3 M676 400.5h3 M682 400.5h3 M688 400.5h3 M694 400.5h3 M700 400.5h3 M706 400.5h3 M712 400.5h3 M718 400.5h3 M724 400.5h3 M730 400.5h3 M736 400.5h3 M742 400.5h3 M748 400.5h3 M754 400.5h3 M760 400.5h3 M766 400.5h3 M772 400.5h3 M778 400.5h3 M784 400.5h3 M790 400.5h3 M796 400.5h3 M802 400.5h3 M808 400.5h3 M814 400.5h3 M820 400.5h3 M826 400.5h3 M832 400.5h3 M838 400.5h3 M844 400.5h3 M850 400.5h3 M856 400.5h3 M862 400.5h3 M868 400.5h3 M874 400.5h3 M880 400.5h3 M886 400.5h3 M892 400.5h3 M898 400.5h3 M904 400.5h3 M910 400.5h3 M916 400.5h3 M922 400.5h3 M928 400.5h3 M934 400.5h3 M940 400.5h3 M946 400.5h3 M952 400.5h3 M958 400.5h3 M964 400.5h3 M970 400.5h3 M976 400.5h3 M982 400.5h3 M988 400.5h3 M994 400.5h3 M1000 400.5h3 M1006 400.5h3 M1012 400.5h3 M1018 400.5h3 M1024 400.5h3 M1030 400.5h3 M1036 400.5h3 M1042 400.5h3 M1048 400.5h3 M1054 400.5h3 M1060 400.5h3 M1066 400.5h3 M1072 400.5h3 M1078 400.5h3 M1084 400.5h3 M1090 400.5h3 M1096 400.5h3 M1102 400.5h3 M1108 400.5h3 M1114 400.5h3 M1120 400.5h3 M1126 400.5h3 M1132 400.5h3 M1138 400.5h3 M1144 400.5h3 M1150 400.5h3 M1156 400.5h3 M1162 400.5h3 M1168 400.5h3 M1174 400.5h3 M1180 400.5h3 M1186 400.5h3 M1192 400.5h3 M1198 400.5h3 M1204 400.5h3 M1210 400.5h3 M1216 400.5h3 M1222 400.5h3 M1228 400.5h3 M10 433.5h3 M16 433.5h3 M22 433.5h3 M28 433.5h3 M34 433.5h3 M40 433.5h3 M46 433.5h3 M52 433.5h3 M58 433.5h3 M64 433.5h3 M70 433.5h3 M76 433.5h3 M82 433.5h3 M88 433.5h3 M94 433.5h3 M100 433.5h3 M106 433.5h3 M112 433.5h3 M118 433.5h3 M124 433.5h3 M130 433.5h3 M136 433.5h3 M142 433.5h3 M148 433.5h3 M154 433.5h3 M160 433.5h3 M166 433.5h3 M172 433.5h3 M178 433.5h3 M184 433.5h3 M190 433.5h3 M196 433.5h3 M202 433.5h3 M208 433.5h3 M214 433.5h3 M220 433.5h3 M226 433.5h3 M232 433.5h3 M238 433.5h3 M244 433.5h3 M250 433.5h3 M256 433.5h3 M262 433.5h3 M268 433.5h3 M274 433.5h3 M280 433.5h3 M286 433.5h3 M292 433.5h3 M298 433.5h3 M304 433.5h3 M310 433.5h3 M316 433.5h3 M322 433.5h3 M328 433.5h3 M334 433.5h3 M340 433.5h3 M346 433.5h3 M352 433.5h3 M358 433.5h3 M364 433.5h3 M370 433.5h3 M376 433.5h3 M382 433.5h3 M388 433.5h3 M394 433.5h3 M400 433.5h3 M406 433.5h3 M412 433.5h3 M418 433.5h3 M424 433.5h3 M430 433.5h3 M436 433.5h3 M442 433.5h3 M448 433.5h3 M454 433.5h3 M460 433.5h3 M466 433.5h3 M472 433.5h3 M478 433.5h3 M484 433.5h3 M490 433.5h3 M496 433.5h3 M502 433.5h3 M508 433.5h3 M514 433.5h3 M520 433.5h3 M526 433.5h3 M532 433.5h3 M538 433.5h3 M544 433.5h3 M550 433.5h3 M556 433.5h3 M562 433.5h3 M568 433.5h3 M574 433.5h3 M580 433.5h3 M586 433.5h3 M592 433.5h3 M598 433.5h3 M604 433.5h3 M610 433.5h3 M616 433.5h3 M622 433.5h3 M628 433.5h3 M634 433.5h3 M640 433.5h3 M646 433.5h3 M652 433.5h3 M658 433.5h3 M664 433.5h3 M670 433.5h3 M676 433.5h3 M682 433.5h3 M688 433.5h3 M694 433.5h3 M700 433.5h3 M706 433.5h3 M712 433.5h3 M718 433.5h3 M724 433.5h3 M730 433.5h3 M736 433.5h3 M742 433.5h3 M748 433.5h3 M754 433.5h3 M760 433.5h3 M766 433.5h3 M772 433.5h3 M778 433.5h3 M784 433.5h3 M790 433.5h3 M796 433.5h3 M802 433.5h3 M808 433.5h3 M814 433.5h3 M820 433.5h3 M826 433.5h3 M832 433.5h3 M838 433.5h3 M844 433.5h3 M850 433.5h3 M856 433.5h3 M862 433.5h3 M868 433.5h3 M874 433.5h3 M880 433.5h3 M886 433.5h3 M892 433.5h3 M898 433.5h3 M904 433.5h3 M910 433.5h3 M916 433.5h3 M922 433.5h3 M928 433.5h3 M934 433.5h3 M940 433.5h3 M946 433.5h3 M952 433.5h3 M958 433.5h3 M964 433.5h3 M970 433.5h3 M976 433.5h3 M982 433.5h3 M988 433.5h3 M994 433.5h3 M1000 433.5h3 M1006 433.5h3 M1012 433.5h3 M1018 433.5h3 M1024 433.5h3 M1030 433.5h3 M1036 433.5h3 M1042 433.5h3 M1048 433.5h3 M1054 433.5h3 M1060 433.5h3 M1066 433.5h3 M1072 433.5h3 M1078 433.5h3 M1084 433.5h3 M1090 433.5h3 M1096 433.5h3 M1102 433.5h3 M1108 433.5h3 M1114 433.5h3 M1120 433.5h3 M1126 433.5h3 M1132 433.5h3 M1138 433.5h3 M1144 433.5h3 M1150 433.5h3 M1156 433.5h3 M1162 433.5h3 M1168 433.5h3 M1174 433.5h3 M1180 433.5h3 M1186 433.5h3 M1192 433.5h3 M1198 433.5h3 M1204 433.5h3 M1210 433.5h3 M1216 433.5h3 M1222 433.5h3 M1228 433.5h3 M10 466.5h3 M16 466.5h3 M22 466.5h3 M28 466.5h3 M34 466.5h3 M40 466.5h3 M46 466.5h3 M52 466.5h3 M58 466.5h3 M64 466.5h3 M70 466.5h3 M76 466.5h3 M82 466.5h3 M88 466.5h3 M94 466.5h3 M100 466.5h3 M106 466.5h3 M112 466.5h3 M118 466.5h3 M124 466.5h3 M130 466.5h3 M136 466.5h3 M142 466.5h3 M148 466.5h3 M154 466.5h3 M160 466.5h3 M166 466.5h3 M172 466.5h3 M178 466.5h3 M184 466.5h3 M190 466.5h3 M196 466.5h3 M202 466.5h3 M208 466.5h3 M214 466.5h3 M220 466.5h3 M226 466.5h3 M232 466.5h3 M238 466.5h3 M244 466.5h3 M250 466.5h3 M256 466.5h3 M262 466.5h3 M268 466.5h3 M274 466.5h3 M280 466.5h3 M286 466.5h3 M292 466.5h3 M298 466.5h3 M304 466.5h3 M310 466.5h3 M316 466.5h3 M322 466.5h3 M328 466.5h3 M334 466.5h3 M340 466.5h3 M346 466.5h3 M352 466.5h3 M358 466.5h3 M364 466.5h3 M370 466.5h3 M376 466.5h3 M382 466.5h3 M388 466.5h3 M394 466.5h3 M400 466.5h3 M406 466.5h3 M412 466.5h3 M418 466.5h3 M424 466.5h3 M430 466.5h3 M436 466.5h3 M442 466.5h3 M448 466.5h3 M454 466.5h3 M460 466.5h3 M466 466.5h3 M472 466.5h3 M478 466.5h3 M484 466.5h3 M490 466.5h3 M496 466.5h3 M502 466.5h3 M508 466.5h3 M514 466.5h3 M520 466.5h3 M526 466.5h3 M532 466.5h3 M538 466.5h3 M544 466.5h3 M550 466.5h3 M556 466.5h3 M562 466.5h3 M568 466.5h3 M574 466.5h3 M580 466.5h3 M586 466.5h3 M592 466.5h3 M598 466.5h3 M604 466.5h3 M610 466.5h3 M616 466.5h3 M622 466.5h3 M628 466.5h3 M634 466.5h3 M640 466.5h3 M646 466.5h3 M652 466.5h3 M658 466.5h3 M664 466.5h3 M670 466.5h3 M676 466.5h3 M682 466.5h3 M688 466.5h3 M694 466.5h3 M700 466.5h3 M706 466.5h3 M712 466.5h3 M718 466.5h3 M724 466.5h3 M730 466.5h3 M736 466.5h3 M742 466.5h3 M748 466.5h3 M754 466.5h3 M760 466.5h3 M766 466.5h3 M772 466.5h3 M778 466.5h3 M784 466.5h3 M790 466.5h3 M796 466.5h3 M802 466.5h3 M808 466.5h3 M814 466.5h3 M820 466.5h3 M826 466.5h3 M832 466.5h3 M838 466.5h3 M844 466.5h3 M850 466.5h3 M856 466.5h3 M862 466.5h3 M868 466.5h3 M874 466.5h3 M880 466.5h3 M886 466.5h3 M892 466.5h3 M898 466.5h3 M904 466.5h3 M910 466.5h3 M916 466.5h3 M922 466.5h3 M928 466.5h3 M934 466.5h3 M940 466.5h3 M946 466.5h3 M952 466.5h3 M958 466.5h3 M964 466.5h3 M970 466.5h3 M976 466.5h3 M982 466.5h3 M988 466.5h3 M994 466.5h3 M1000 466.5h3 M1006 466.5h3 M1012 466.5h3 M1018 466.5h3 M1024 466.5h3 M1030 466.5h3 M1036 466.5h3 M1042 466.5h3 M1048 466.5h3 M1054 466.5h3 M1060 466.5h3 M1066 466.5h3 M1072 466.5h3 M1078 466.5h3 M1084 466.5h3 M1090 466.5h3 M1096 466.5h3 M1102 466.5h3 M1108 466.5h3 M1114 466.5h3 M1120 466.5h3 M1126 466.5h3 M1132 466.5h3 M1138 466.5h3 M1144 466.5h3 M1150 466.5h3 M1156 466.5h3 M1162 466.5h3 M1168 466.5h3 M1174 466.5h3 M1180 466.5h3 M1186 466.5h3 M1192 466.5h3 M1198 466.5h3 M1204 466.5h3 M1210 466.5h3 M1216 466.5h3 M1222 466.5h3 M1228 466.5h3 M10 499.5h3 M16 499.5h3 M22 499.5h3 M28 499.5h3 M34 499.5h3 M40 499.5h3 M46 499.5h3 M52 499.5h3 M58 499.5h3 M64 499.5h3 M70 499.5h3 M76 499.5h3 M82 499.5h3 M88 499.5h3 M94 499.5h3 M100 499.5h3 M106 499.5h3 M112 499.5h3 M118 499.5h3 M124 499.5h3 M130 499.5h3 M136 499.5h3 M142 499.5h3 M148 499.5h3 M154 499.5h3 M160 499.5h3 M166 499.5h3 M172 499.5h3 M178 499.5h3 M184 499.5h3 M190 499.5h3 M196 499.5h3 M202 499.5h3 M208 499.5h3 M214 499.5h3 M220 499.5h3 M226 499.5h3 M232 499.5h3 M238 499.5h3 M244 499.5h3 M250 499.5h3 M256 499.5h3 M262 499.5h3 M268 499.5h3 M274 499.5h3 M280 499.5h3 M286 499.5h3 M292 499.5h3 M298 499.5h3 M304 499.5h3 M310 499.5h3 M316 499.5h3 M322 499.5h3 M328 499.5h3 M334 499.5h3 M340 499.5h3 M346 499.5h3 M352 499.5h3 M358 499.5h3 M364 499.5h3 M370 499.5h3 M376 499.5h3 M382 499.5h3 M388 499.5h3 M394 499.5h3 M400 499.5h3 M406 499.5h3 M412 499.5h3 M418 499.5h3 M424 499.5h3 M430 499.5h3 M436 499.5h3 M442 499.5h3 M448 499.5h3 M454 499.5h3 M460 499.5h3 M466 499.5h3 M472 499.5h3 M478 499.5h3 M484 499.5h3 M490 499.5h3 M496 499.5h3 M502 499.5h3 M508 499.5h3 M514 499.5h3 M520 499.5h3 M526 499.5h3 M532 499.5h3 M538 499.5h3 M544 499.5h3 M550 499.5h3 M556 499.5h3 M562 499.5h3 M568 499.5h3 M574 499.5h3 M580 499.5h3 M586 499.5h3 M592 499.5h3 M598 499.5h3 M604 499.5h3 M610 499.5h3 M616 499.5h3 M622 499.5h3 M628 499.5h3 M634 499.5h3 M640 499.5h3 M646 499.5h3 M652 499.5h3 M658 499.5h3 M664 499.5h3 M670 499.5h3 M676 499.5h3 M682 499.5h3 M688 499.5h3 M694 499.5h3 M700 499.5h3 M706 499.5h3 M712 499.5h3 M718 499.5h3 M724 499.5h3 M730 499.5h3 M736 499.5h3 M742 499.5h3 M748 499.5h3 M754 499.5h3 M760 499.5h3 M766 499.5h3 M772 499.5h3 M778 499.5h3 M784 499.5h3 M790 499.5h3 M796 499.5h3 M802 499.5h3 M808 499.5h3 M814 499.5h3 M820 499.5h3 M826 499.5h3 M832 499.5h3 M838 499.5h3 M844 499.5h3 M850 499.5h3 M856 499.5h3 M862 499.5h3 M868 499.5h3 M874 499.5h3 M880 499.5h3 M886 499.5h3 M892 499.5h3 M898 499.5h3 M904 499.5h3 M910 499.5h3 M916 499.5h3 M922 499.5h3 M928 499.5h3 M934 499.5h3 M940 499.5h3 M946 499.5h3 M952 499.5h3 M958 499.5h3 M964 499.5h3 M970 499.5h3 M976 499.5h3 M982 499.5h3 M988 499.5h3 M994 499.5h3 M1000 499.5h3 M1006 499.5h3 M1012 499.5h3 M1018 499.5h3 M1024 499.5h3 M1030 499.5h3 M1036 499.5h3 M1042 499.5h3 M1048 499.5h3 M1054 499.5h3 M1060 499.5h3 M1066 499.5h3 M1072 499.5h3 M1078 499.5h3 M1084 499.5h3 M1090 499.5h3 M1096 499.5h3 M1102 499.5h3 M1108 499.5h3 M1114 499.5h3 M1120 499.5h3 M1126 499.5h3 M1132 499.5h3 M1138 499.5h3 M1144 499.5h3 M1150 499.5h3 M1156 499.5h3 M1162 499.5h3 M1168 499.5h3 M1174 499.5h3 M1180 499.5h3 M1186 499.5h3 M1192 499.5h3 M1198 499.5h3 M1204 499.5h3 M1210 499.5h3 M1216 499.5h3 M1222 499.5h3 M1228 499.5h3 M10 532.5h3 M16 532.5h3 M22 532.5h3 M28 532.5h3 M34 532.5h3 M40 532.5h3 M46 532.5h3 M52 532.5h3 M58 532.5h3 M64 532.5h3 M70 532.5h3 M76 532.5h3 M82 532.5h3 M88 532.5h3 M94 532.5h3 M100 532.5h3 M106 532.5h3 M112 532.5h3 M118 532.5h3 M124 532.5h3 M130 532.5h3 M136 532.5h3 M142 532.5h3 M148 532.5h3 M154 532.5h3 M160 532.5h3 M166 532.5h3 M172 532.5h3 M178 532.5h3 M184 532.5h3 M190 532.5h3 M196 532.5h3 M202 532.5h3 M208 532.5h3 M214 532.5h3 M220 532.5h3 M226 532.5h3 M232 532.5h3 M238 532.5h3 M244 532.5h3 M250 532.5h3 M256 532.5h3 M262 532.5h3 M268 532.5h3 M274 532.5h3 M280 532.5h3 M286 532.5h3 M292 532.5h3 M298 532.5h3 M304 532.5h3 M310 532.5h3 M316 532.5h3 M322 532.5h3 M328 532.5h3 M334 532.5h3 M340 532.5h3 M346 532.5h3 M352 532.5h3 M358 532.5h3 M364 532.5h3 M370 532.5h3 M376 532.5h3 M382 532.5h3 M388 532.5h3 M394 532.5h3 M400 532.5h3 M406 532.5h3 M412 532.5h3 M418 532.5h3 M424 532.5h3 M430 532.5h3 M436 532.5h3 M442 532.5h3 M448 532.5h3 M454 532.5h3 M460 532.5h3 M466 532.5h3 M472 532.5h3 M478 532.5h3 M484 532.5h3 M490 532.5h3 M496 532.5h3 M502 532.5h3 M508 532.5h3 M514 532.5h3 M520 532.5h3 M526 532.5h3 M532 532.5h3 M538 532.5h3 M544 532.5h3 M550 532.5h3 M556 532.5h3 M562 532.5h3 M568 532.5h3 M574 532.5h3 M580 532.5h3 M586 532.5h3 M592 532.5h3 M598 532.5h3 M604 532.5h3 M610 532.5h3 M616 532.5h3 M622 532.5h3 M628 532.5h3 M634 532.5h3 M640 532.5h3 M646 532.5h3 M652 532.5h3 M658 532.5h3 M664 532.5h3 M670 532.5h3 M676 532.5h3 M682 532.5h3 M688 532.5h3 M694 532.5h3 M700 532.5h3 M706 532.5h3 M712 532.5h3 M718 532.5h3 M724 532.5h3 M730 532.5h3 M736 532.5h3 M742 532.5h3 M748 532.5h3 M754 532.5h3 M760 532.5h3 M766 532.5h3 M772 532.5h3 M778 532.5h3 M784 532.5h3 M790 532.5h3 M796 532.5h3 M802 532.5h3 M808 532.5h3 M814 532.5h3 M820 532.5h3 M826 532.5h3 M832 532.5h3 M838 532.5h3 M844 532.5h3 M850 532.5h3 M856 532.5h3 M862 532.5h3 M868 532.5h3 M874 532.5h3 M880 532.5h3 M886 532.5h3 M892 532.5h3 M898 532.5h3 M904 532.5h3 M910 532.5h3 M916 532.5h3 M922 532.5h3 M928 532.5h3 M934 532.5h3 M940 532.5h3 M946 532.5h3 M952 532.5h3 M958 532.5h3 M964 532.5h3 M970 532.5h3 M976 532.5h3 M982 532.5h3 M988 532.5h3 M994 532.5h3 M1000 532.5h3 M1006 532.5h3 M1012 532.5h3 M1018 532.5h3 M1024 532.5h3 M1030 532.5h3 M1036 532.5h3 M1042 532.5h3 M1048 532.5h3 M1054 532.5h3 M1060 532.5h3 M1066 532.5h3 M1072 532.5h3 M1078 532.5h3 M1084 532.5h3 M1090 532.5h3 M1096 532.5h3 M1102 532.5h3 M1108 532.5h3 M1114 532.5h3 M1120 532.5h3 M1126 532.5h3 M1132 532.5h3 M1138 532.5h3 M1144 532.5h3 M1150 532.5h3 M1156 532.5h3 M1162 532.5h3 M1168 532.5h3 M1174 532.5h3 M1180 532.5h3 M1186 532.5h3 M1192 532.5h3 M1198 532.5h3 M1204 532.5h3 M1210 532.5h3 M1216 532.5h3 M1222 532.5h3 M1228 532.5h3 M10 565.5h3 M16 565.5h3 M22 565.5h3 M28 565.5h3 M34 565.5h3 M40 565.5h3 M46 565.5h3 M52 565.5h3 M58 565.5h3 M64 565.5h3 M70 565.5h3 M76 565.5h3 M82 565.5h3 M88 565.5h3 M94 565.5h3 M100 565.5h3 M106 565.5h3 M112 565.5h3 M118 565.5h3 M124 565.5h3 M130 565.5h3 M136 565.5h3 M142 565.5h3 M148 565.5h3 M154 565.5h3 M160 565.5h3 M166 565.5h3 M172 565.5h3 M178 565.5h3 M184 565.5h3 M190 565.5h3 M196 565.5h3 M202 565.5h3 M208 565.5h3 M214 565.5h3 M220 565.5h3 M226 565.5h3 M232 565.5h3 M238 565.5h3 M244 565.5h3 M250 565.5h3 M256 565.5h3 M262 565.5h3 M268 565.5h3 M274 565.5h3 M280 565.5h3 M286 565.5h3 M292 565.5h3 M298 565.5h3 M304 565.5h3 M310 565.5h3 M316 565.5h3 M322 565.5h3 M328 565.5h3 M334 565.5h3 M340 565.5h3 M346 565.5h3 M352 565.5h3 M358 565.5h3 M364 565.5h3 M370 565.5h3 M376 565.5h3 M382 565.5h3 M388 565.5h3 M394 565.5h3 M400 565.5h3 M406 565.5h3 M412 565.5h3 M418 565.5h3 M424 565.5h3 M430 565.5h3 M436 565.5h3 M442 565.5h3 M448 565.5h3 M454 565.5h3 M460 565.5h3 M466 565.5h3 M472 565.5h3 M478 565.5h3 M484 565.5h3 M490 565.5h3 M496 565.5h3 M502 565.5h3 M508 565.5h3 M514 565.5h3 M520 565.5h3 M526 565.5h3 M532 565.5h3 M538 565.5h3 M544 565.5h3 M550 565.5h3 M556 565.5h3 M562 565.5h3 M568 565.5h3 M574 565.5h3 M580 565.5h3 M586 565.5h3 M592 565.5h3 M598 565.5h3 M604 565.5h3 M610 565.5h3 M616 565.5h3 M622 565.5h3 M628 565.5h3 M634 565.5h3 M640 565.5h3 M646 565.5h3 M652 565.5h3 M658 565.5h3 M664 565.5h3 M670 565.5h3 M676 565.5h3 M682 565.5h3 M688 565.5h3 M694 565.5h3 M700 565.5h3 M706 565.5h3 M712 565.5h3 M718 565.5h3 M724 565.5h3 M730 565.5h3 M736 565.5h3 M742 565.5h3 M748 565.5h3 M754 565.5h3 M760 565.5h3 M766 565.5h3 M772 565.5h3 M778 565.5h3 M784 565.5h3 M790 565.5h3 M796 565.5h3 M802 565.5h3 M808 565.5h3 M814 565.5h3 M820 565.5h3 M826 565.5h3 M832 565.5h3 M838 565.5h3 M844 565.5h3 M850 565.5h3 M856 565.5h3 M862 565.5h3 M868 565.5h3 M874 565.5h3 M880 565.5h3 M886 565.5h3 M892 565.5h3 M898 565.5h3 M904 565.5h3 M910 565.5h3 M916 565.5h3 M922 565.5h3 M928 565.5h3 M934 565.5h3 M940 565.5h3 M946 565.5h3 M952 565.5h3 M958 565.5h3 M964 565.5h3 M970 565.5h3 M976 565.5h3 M982 565.5h3 M988 565.5h3 M994 565.5h3 M1000 565.5h3 M1006 565.5h3 M1012 565.5h3 M1018 565.5h3 M1024 565.5h3 M1030 565.5h3 M1036 565.5h3 M1042 565.5h3 M1048 565.5h3 M1054 565.5h3 M1060 565.5h3 M1066 565.5h3 M1072 565.5h3 M1078 565.5h3 M1084 565.5h3 M1090 565.5h3 M1096 565.5h3 M1102 565.5h3 M1108 565.5h3 M1114 565.5h3 M1120 565.5h3 M1126 565.5h3 M1132 565.5h3 M1138 565.5h3 M1144 565.5h3 M1150 565.5h3 M1156 565.5h3 M1162 565.5h3 M1168 565.5h3 M1174 565.5h3 M1180 565.5h3 M1186 565.5h3 M1192 565.5h3 M1198 565.5h3 M1204 565.5h3 M1210 565.5h3 M1216 565.5h3 M1222 565.5h3 M1228 565.5h3 M10 598.5h3 M16 598.5h3 M22 598.5h3 M28 598.5h3 M34 598.5h3 M40 598.5h3 M46 598.5h3 M52 598.5h3 M58 598.5h3 M64 598.5h3 M70 598.5h3 M76 598.5h3 M82 598.5h3 M88 598.5h3 M94 598.5h3 M100 598.5h3 M106 598.5h3 M112 598.5h3 M118 598.5h3 M124 598.5h3 M130 598.5h3 M136 598.5h3 M142 598.5h3 M148 598.5h3 M154 598.5h3 M160 598.5h3 M166 598.5h3 M172 598.5h3 M178 598.5h3 M184 598.5h3 M190 598.5h3 M196 598.5h3 M202 598.5h3 M208 598.5h3 M214 598.5h3 M220 598.5h3 M226 598.5h3 M232 598.5h3 M238 598.5h3 M244 598.5h3 M250 598.5h3 M256 598.5h3 M262 598.5h3 M268 598.5h3 M274 598.5h3 M280 598.5h3 M286 598.5h3 M292 598.5h3 M298 598.5h3 M304 598.5h3 M310 598.5h3 M316 598.5h3 M322 598.5h3 M328 598.5h3 M334 598.5h3 M340 598.5h3 M346 598.5h3 M352 598.5h3 M358 598.5h3 M364 598.5h3 M370 598.5h3 M376 598.5h3 M382 598.5h3 M388 598.5h3 M394 598.5h3 M400 598.5h3 M406 598.5h3 M412 598.5h3 M418 598.5h3 M424 598.5h3 M430 598.5h3 M436 598.5h3 M442 598.5h3 M448 598.5h3 M454 598.5h3 M460 598.5h3 M466 598.5h3 M472 598.5h3 M478 598.5h3 M484 598.5h3 M490 598.5h3 M496 598.5h3 M502 598.5h3 M508 598.5h3 M514 598.5h3 M520 598.5h3 M526 598.5h3 M532 598.5h3 M538 598.5h3 M544 598.5h3 M550 598.5h3 M556 598.5h3 M562 598.5h3 M568 598.5h3 M574 598.5h3 M580 598.5h3 M586 598.5h3 M592 598.5h3 M598 598.5h3 M604 598.5h3 M610 598.5h3 M616 598.5h3 M622 598.5h3 M628 598.5h3 M634 598.5h3 M640 598.5h3 M646 598.5h3 M652 598.5h3 M658 598.5h3 M664 598.5h3 M670 598.5h3 M676 598.5h3 M682 598.5h3 M688 598.5h3 M694 598.5h3 M700 598.5h3 M706 598.5h3 M712 598.5h3 M718 598.5h3 M724 598.5h3 M730 598.5h3 M736 598.5h3 M742 598.5h3 M748 598.5h3 M754 598.5h3 M760 598.5h3 M766 598.5h3 M772 598.5h3 M778 598.5h3 M784 598.5h3 M790 598.5h3 M796 598.5h3 M802 598.5h3 M808 598.5h3 M814 598.5h3 M820 598.5h3 M826 598.5h3 M832 598.5h3 M838 598.5h3 M844 598.5h3 M850 598.5h3 M856 598.5h3 M862 598.5h3 M868 598.5h3 M874 598.5h3 M880 598.5h3 M886 598.5h3 M892 598.5h3 M898 598.5h3 M904 598.5h3 M910 598.5h3 M916 598.5h3 M922 598.5h3 M928 598.5h3 M934 598.5h3 M940 598.5h3 M946 598.5h3 M952 598.5h3 M958 598.5h3 M964 598.5h3 M970 598.5h3 M976 598.5h3 M982 598.5h3 M988 598.5h3 M994 598.5h3 M1000 598.5h3 M1006 598.5h3 M1012 598.5h3 M1018 598.5h3 M1024 598.5h3 M1030 598.5h3 M1036 598.5h3 M1042 598.5h3 M1048 598.5h3 M1054 598.5h3 M1060 598.5h3 M1066 598.5h3 M1072 598.5h3 M1078 598.5h3 M1084 598.5h3 M1090 598.5h3 M1096 598.5h3 M1102 598.5h3 M1108 598.5h3 M1114 598.5h3 M1120 598.5h3 M1126 598.5h3 M1132 598.5h3 M1138 598.5h3 M1144 598.5h3 M1150 598.5h3 M1156 598.5h3 M1162 598.5h3 M1168 598.5h3 M1174 598.5h3 M1180 598.5h3 M1186 598.5h3 M1192 598.5h3 M1198 598.5h3 M1204 598.5h3 M1210 598.5h3 M1216 598.5h3 M1222 598.5h3 M1228 598.5h3 M10 631.5h3 M16 631.5h3 M22 631.5h3 M28 631.5h3 M34 631.5h3 M40 631.5h3 M46 631.5h3 M52 631.5h3 M58 631.5h3 M64 631.5h3 M70 631.5h3 M76 631.5h3 M82 631.5h3 M88 631.5h3 M94 631.5h3 M100 631.5h3 M106 631.5h3 M112 631.5h3 M118 631.5h3 M124 631.5h3 M130 631.5h3 M136 631.5h3 M142 631.5h3 M148 631.5h3 M154 631.5h3 M160 631.5h3 M166 631.5h3 M172 631.5h3 M178 631.5h3 M184 631.5h3 M190 631.5h3 M196 631.5h3 M202 631.5h3 M208 631.5h3 M214 631.5h3 M220 631.5h3 M226 631.5h3 M232 631.5h3 M238 631.5h3 M244 631.5h3 M250 631.5h3 M256 631.5h3 M262 631.5h3 M268 631.5h3 M274 631.5h3 M280 631.5h3 M286 631.5h3 M292 631.5h3 M298 631.5h3 M304 631.5h3 M310 631.5h3 M316 631.5h3 M322 631.5h3 M328 631.5h3 M334 631.5h3 M340 631.5h3 M346 631.5h3 M352 631.5h3 M358 631.5h3 M364 631.5h3 M370 631.5h3 M376 631.5h3 M382 631.5h3 M388 631.5h3 M394 631.5h3 M400 631.5h3 M406 631.5h3 M412 631.5h3 M418 631.5h3 M424 631.5h3 M430 631.5h3 M436 631.5h3 M442 631.5h3 M448 631.5h3 M454 631.5h3 M460 631.5h3 M466 631.5h3 M472 631.5h3 M478 631.5h3 M484 631.5h3 M490 631.5h3 M496 631.5h3 M502 631.5h3 M508 631.5h3 M514 631.5h3 M520 631.5h3 M526 631.5h3 M532 631.5h3 M538 631.5h3 M544 631.5h3 M550 631.5h3 M556 631.5h3 M562 631.5h3 M568 631.5h3 M574 631.5h3 M580 631.5h3 M586 631.5h3 M592 631.5h3 M598 631.5h3 M604 631.5h3 M610 631.5h3 M616 631.5h3 M622 631.5h3 M628 631.5h3 M634 631.5h3 M640 631.5h3 M646 631.5h3 M652 631.5h3 M658 631.5h3 M664 631.5h3 M670 631.5h3 M676 631.5h3 M682 631.5h3 M688 631.5h3 M694 631.5h3 M700 631.5h3 M706 631.5h3 M712 631.5h3 M718 631.5h3 M724 631.5h3 M730 631.5h3 M736 631.5h3 M742 631.5h3 M748 631.5h3 M754 631.5h3 M760 631.5h3 M766 631.5h3 M772 631.5h3 M778 631.5h3 M784 631.5h3 M790 631.5h3 M796 631.5h3 M802 631.5h3 M808 631.5h3 M814 631.5h3 M820 631.5h3 M826 631.5h3 M832 631.5h3 M838 631.5h3 M844 631.5h3 M850 631.5h3 M856 631.5h3 M862 631.5h3 M868 631.5h3 M874 631.5h3 M880 631.5h3 M886 631.5h3 M892 631.5h3 M898 631.5h3 M904 631.5h3 M910 631.5h3 M916 631.5h3 M922 631.5h3 M928 631.5h3 M934 631.5h3 M940 631.5h3 M946 631.5h3 M952 631.5h3 M958 631.5h3 M964 631.5h3 M970 631.5h3 M976 631.5h3 M982 631.5h3 M988 631.5h3 M994 631.5h3 M1000 631.5h3 M1006 631.5h3 M1012 631.5h3 M1018 631.5h3 M1024 631.5h3 M1030 631.5h3 M1036 631.5h3 M1042 631.5h3 M1048 631.5h3 M1054 631.5h3 M1060 631.5h3 M1066 631.5h3 M1072 631.5h3 M1078 631.5h3 M1084 631.5h3 M1090 631.5h3 M1096 631.5h3 M1102 631.5h3 M1108 631.5h3 M1114 631.5h3 M1120 631.5h3 M1126 631.5h3 M1132 631.5h3 M1138 631.5h3 M1144 631.5h3 M1150 631.5h3 M1156 631.5h3 M1162 631.5h3 M1168 631.5h3 M1174 631.5h3 M1180 631.5h3 M1186 631.5h3 M1192 631.5h3 M1198 631.5h3 M1204 631.5h3 M1210 631.5h3 M1216 631.5h3 M1222 631.5h3 M1228 631.5h3 M10 664.5h3 M16 664.5h3 M22 664.5h3 M28 664.5h3 M34 664.5h3 M40 664.5h3 M46 664.5h3 M52 664.5h3 M58 664.5h3 M64 664.5h3 M70 664.5h3 M76 664.5h3 M82 664.5h3 M88 664.5h3 M94 664.5h3 M100 664.5h3 M106 664.5h3 M112 664.5h3 M118 664.5h3 M124 664.5h3 M130 664.5h3 M136 664.5h3 M142 664.5h3 M148 664.5h3 M154 664.5h3 M160 664.5h3 M166 664.5h3 M172 664.5h3 M178 664.5h3 M184 664.5h3 M190 664.5h3 M196 664.5h3 M202 664.5h3 M208 664.5h3 M214 664.5h3 M220 664.5h3 M226 664.5h3 M232 664.5h3 M238 664.5h3 M244 664.5h3 M250 664.5h3 M256 664.5h3 M262 664.5h3 M268 664.5h3 M274 664.5h3 M280 664.5h3 M286 664.5h3 M292 664.5h3 M298 664.5h3 M304 664.5h3 M310 664.5h3 M316 664.5h3 M322 664.5h3 M328 664.5h3 M334 664.5h3 M340 664.5h3 M346 664.5h3 M352 664.5h3 M358 664.5h3 M364 664.5h3 M370 664.5h3 M376 664.5h3 M382 664.5h3 M388 664.5h3 M394 664.5h3 M400 664.5h3 M406 664.5h3 M412 664.5h3 M418 664.5h3 M424 664.5h3 M430 664.5h3 M436 664.5h3 M442 664.5h3 M448 664.5h3 M454 664.5h3 M460 664.5h3 M466 664.5h3 M472 664.5h3 M478 664.5h3 M484 664.5h3 M490 664.5h3 M496 664.5h3 M502 664.5h3 M508 664.5h3 M514 664.5h3 M520 664.5h3 M526 664.5h3 M532 664.5h3 M538 664.5h3 M544 664.5h3 M550 664.5h3 M556 664.5h3 M562 664.5h3 M568 664.5h3 M574 664.5h3 M580 664.5h3 M586 664.5h3 M592 664.5h3 M598 664.5h3 M604 664.5h3 M610 664.5h3 M616 664.5h3 M622 664.5h3 M628 664.5h3 M634 664.5h3 M640 664.5h3 M646 664.5h3 M652 664.5h3 M658 664.5h3 M664 664.5h3 M670 664.5h3 M676 664.5h3 M682 664.5h3 M688 664.5h3 M694 664.5h3 M700 664.5h3 M706 664.5h3 M712 664.5h3 M718 664.5h3 M724 664.5h3 M730 664.5h3 M736 664.5h3 M742 664.5h3 M748 664.5h3 M754 664.5h3 M760 664.5h3 M766 664.5h3 M772 664.5h3 M778 664.5h3 M784 664.5h3 M790 664.5h3 M796 664.5h3 M802 664.5h3 M808 664.5h3 M814 664.5h3 M820 664.5h3 M826 664.5h3 M832 664.5h3 M838 664.5h3 M844 664.5h3 M850 664.5h3 M856 664.5h3 M862 664.5h3 M868 664.5h3 M874 664.5h3 M880 664.5h3 M886 664.5h3 M892 664.5h3 M898 664.5h3 M904 664.5h3 M910 664.5h3 M916 664.5h3 M922 664.5h3 M928 664.5h3 M934 664.5h3 M940 664.5h3 M946 664.5h3 M952 664.5h3 M958 664.5h3 M964 664.5h3 M970 664.5h3 M976 664.5h3 M982 664.5h3 M988 664.5h3 M994 664.5h3 M1000 664.5h3 M1006 664.5h3 M1012 664.5h3 M1018 664.5h3 M1024 664.5h3 M1030 664.5h3 M1036 664.5h3 M1042 664.5h3 M1048 664.5h3 M1054 664.5h3 M1060 664.5h3 M1066 664.5h3 M1072 664.5h3 M1078 664.5h3 M1084 664.5h3 M1090 664.5h3 M1096 664.5h3 M1102 664.5h3 M1108 664.5h3 M1114 664.5h3 M1120 664.5h3 M1126 664.5h3 M1132 664.5h3 M1138 664.5h3 M1144 664.5h3 M1150 664.5h3 M1156 664.5h3 M1162 664.5h3 M1168 664.5h3 M1174 664.5h3 M1180 664.5h3 M1186 664.5h3 M1192 664.5h3 M1198 664.5h3 M1204 664.5h3 M1210 664.5h3 M1216 664.5h3 M1222 664.5h3 M1228 664.5h3" stroke="#778899" stroke-width="1" fill="none"/>
<path d="M41.5 109v3 M41.5 115v3 M41.5 121v3 M41.5 127v3 M41.5 133v3 M41.5 139v3 M41.5 145v3 M41.5 151v3 M41.5 157v3 M41.5 163v3 M41.5 169v3 M41.5 175v3 M41.5 181v3 M41.5 187v3 M41.5 193v3 M41.5 199v3 M41.5 205v3 M41.5 211v3 M41.5 217v3 M41.5 223v3 M41.5 229v3 M41.5 235v3 M41.5 241v3 M41.5 247v3 M41.5 253v3 M41.5 259v3 M41.5 265v3 M41.5 271v3 M41.5 277v3 M41.5 283v3 M41.5 289v3 M41.5 295v3 M41.5 301v3 M41.5 307v3 M41.5 313v3 M41.5 319v3 M41.5 325v3 M41.5 331v3 M41.5 337v3 M41.5 343v3 M41.5 349v3 M41.5 355v3 M41.5 361v3 M41.5 367v3 M41.5 373v3 M41.5 379v3 M41.5 385v3 M41.5 391v3 M41.5 397v3 M41.5 403v3 M41.5 409v3 M41.5 415v3 M41.5 421v3 M41.5 427v3 M41.5 433v3 M41.5 439v3 M41.5 445v3 M41.5 451v3 M41.5 457v3 M41.5 463v3 M41.5 469v3 M41.5 475v3 M41.5 481v3 M41.5 487v3 M41.5 493v3 M41.5 499v3 M41.5 505v3 M41.5 511v3 M41.5 517v3 M41.5 523v3 M41.5 529v3 M41.5 535v3 M41.5 541v3 M41.5 547v3 M41.5 553v3 M41.5 559v3 M41.5 565v3 M41.5 571v3 M41.5 577v3 M41.5 583v3 M41.5 589v3 M41.5 595v3 M41.5 601v3 M41.5 607v3 M41.5 613v3 M41.5 619v3 M41.5 625v3 M41.5 631v3 M41.5 637v3 M41.5 643v3 M41.5 649v3 M41.5 655v3 M41.5 661v3 M73.5 109v3 M73.5 115v3 M73.5 121v3 M73.5 127v3 M73.5 133v3 M73.5 139v3 M73.5 145v3 M73.5 151v3 M73.5 157v3 M73.5 163v3 M73.5 169v3 M73.5 175v3 M73.5 181v3 M73.5 187v3 M73.5 193v3 M73.5 199v3 M73.5 205v3 M73.5 211v3 M73.5 217v3 M73.5 223v3 M73.5 229v3 M73.5 235v3 M73.5 241v3 M73.5 247v3 M73.5 253v3 M73.5 259v3 M73.5 265v3 M73.5 271v3 M73.5 277v3 M73.5 283v3 M73.5 289v3 M73.5 295v3 M73.5 301v3 M73.5 307v3 M73.5 313v3 M73.5 319v3 M73.5 325v3 M73.5 331v3 M73.5 337v3 M73.5 343v3 M73.5 349v3 M73.5 355v3 M73.5 361v3 M73.5 367v3 M73.5 373v3 M73.5 379v3 M73.5 385v3 M73.5 391v3 M73.5 397v3 M73.5 403v3 M73.5 409v3 M73.5 415v3 M73.5 421v3 M73.5 427v3 M73.5 433v3 M73.5 439v3 M73.5 445v3 M73.5 451v3 M73.5 457v3 M73.5 463v3 M73.5 469v3 M73.5 475v3 M73.5 481v3 M73.5 487v3 M73.5 493v3 M73.5 499v3 M73.5 505v3 M73.5 511v3 M73.5 517v3 M73.5 523v3 M73.5 529v3 M73.5 535v3 M73.5 541v3 M73.5 547v3 M73.5 553v3 M73.5 559v3 M73.5 565v3 M73.5 571v3 M73.5 577v3 M73.5 583v3 M73.5 589v3 M73.5 595v3 M73.5 601v3 M73.5 607v3 M73.5 613v3 M73.5 619v3 M73.5 625v3 M73.5 631v3 M73.5 637v3 M73.5 643v3 M73.5 649v3 M73.5 655v3 M73.5 661v3 M105.5 109v3 M105.5 115v3 M105.5 121v3 M105.5 127v3 M105.5 133v3 M105.5 139v3 M105.5 145v3 M105.5 151v3 M105.5 157v3 M105.5 163v3 M105.5 169v3 M105.5 175v3 M105.5 181v3 M105.5 187v3 M105.5 193v3 M105.5 199v3 M105.5 205v3 M105.5 211v3 M105.5 217v3 M105.5 223v3 M105.5 229v3 M105.5 235v3 M105.5 241v3 M105.5 247v3 M105.5 253v3 M105.5 259v3 M105.5 265v3 M105.5 271v3 M105.5 277v3 M105.5 283v3 M105.5 289v3 M105.5 295v3 M105.5 301v3 M105.5 307v3 M105.5 313v3 M105.5 319v3 M105.5 325v3 M105.5 331v3 M105.5 337v3 M105.5 343v3 M105.5 349v3 M105.5 355v3 M105.5 361v3 M105.5 367v3 M105.5 373v3 M105.5 379v3 M105.5 385v3 M105.5 391v3 M105.5 397v3 M105.5 403v3 M105.5 409v3 M105.5 415v3 M105.5 421v3 M105.5 427v3 M105.5 433v3 M105.5 439v3 M105.5 445v3 M105.5 451v3 M105.5 457v3 M105.5 463v3 M105.5 469v3 M105.5 475v3 M105.5 481v3 M105.5 487v3 M105.5 493v3 M105.5 499v3 M105.5 505v3 M105.5 511v3 M105.5 517v3 M105.5 523v3 M105.5 529v3 M105.5 535v3 M105.5 541v3 M105.5 547v3 M105.5 553v3 M105.5 559v3 M105.5 565v3 M105.5 571v3 M105.5 577v3 M105.5 583v3 M105.5 589v3 M105.5 595v3 M105.5 601v3 M105.5 607v3 M105.5 613v3 M105.5 619v3 M105.5 625v3 M105.5 631v3 M105.5 637v3 M105.5 643v3 M105.5 649v3 M105.5 655v3 M105.5 661v3 M137.5 109v3 M137.5 115v3 M137.5 121v3 M137.5 127v3 M137.5 133v3 M137.5 139v3 M137.5 145v3 M137.5 151v3 M137.5 157v3 M137.5 163v3 M137.5 169v3 M137.5 175v3 M137.5 181v3 M137.5 187v3 M137.5 193v3 M137.5 199v3 M137.5 205v3 M137.5 211v3 M137.5 217v3 M137.5 223v3 M137.5 229v3 M137.5 235v3 M137.5 241v3 M137.5 247v3 M137.5 253v3 M137.5 259v3 M137.5 265v3 M137.5 271v3 M137.5 277v3 M137.5 283v3 M137.5 289v3 M137.5 295v3 M137.5 301v3 M137.5 307v3 M137.5 313v3 M137.5 319v3 M137.5 325v3 M137.5 331v3 M137.5 337v3 M137.5 343v3 M137.5 349v3 M137.5 355v3 M137.5 361v3 M137.5 367v3 M137.5 373v3 M137.5 379v3 M137.5 385v3 M137.5 391v3 M137.5 397v3 M137.5 403v3 M137.5 409v3 M137.5 415v3 M137.5 421v3 M137.5 427v3 M137.5 433v3 M137.5 439v3 M137.5 445v3 M137.5 451v3 M137.5 457v3 M137.5 463v3 M137.5 469v3 M137.5 475v3 M137.5 481v3 M137.5 487v3 M137.5 493v3 M137.5 499v3 M137.5 505v3 M137.5 511v3 M137.5 517v3 M137.5 523v3 M137.5 529v3 M137.5 535v3 M137.5 541v3 M137.5 547v3 M137.5 553v3 M137.5 559v3 M137.5 565v3 M137.5 571v3 M137.5 577v3 M137.5 583v3 M137.5 589v3 M137.5 595v3 M137.5 601v3 M137.5 607v3 M137.5 613v3 M137.5 619v3 M137.5 625v3 M137.5 631v3 M137.5 637v3 M137.5 643v3 M137.5 649v3 M137.5 655v3 M137.5 661v3 M169.5 109v3 M169.5 115v3 M169.5 121v3 M169.5 127v3 M169.5 133v3 M169.5 139v3 M169.5 145v3 M169.5 151v3 M169.5 157v3 M169.5 163v3 M169.5 169v3 M169.5 175v3 M169.5 181v3 M169.5 187v3 M169.5 193v3 M169.5 199v3 M169.5 205v3 M169.5 211v3 M169.5 217v3 M169.5 223v3 M169.5 229v3 M169.5 235v3 M169.5 241v3 M169.5 247v3 M169.5 253v3 M169.5 259v3 M169.5 265v3 M169.5 271v3 M169.5 277v3 M169.5 283v3 M169.5 289v3 M169.5 295v3 M169.5 301v3 M169.5 307v3 M169.5 313v3 M169.5 319v3 M169.5 325v3 M169.5 331v3 M169.5 337v3 M169.5 343v3 M169.5 349v3 M169.5 355v3 M169.5 361v3 M169.5 367v3 M169.5 373v3 M169.5 379v3 M169.5 385v3 M169.5 391v3 M169.5 397v3 M169.5 403v3 M169.5 409v3 M169.5 415v3 M169.5 421v3 M169.5 427v3 M169.5 433v3 M169.5 439v3 M169.5 445v3 M169.5 451v3 M169.5 457v3 M169.5 463v3 M169.5 469v3 M169.5 475v3 M169.5 481v3 M169.5 487v3 M169.5 493v3 M169.5 499v3 M169.5 505v3 M169.5 511v3 M169.5 517v3 M169.5 523v3 M169.5 529v3 M169.5 535v3 M169.5 541v3 M169.5 547v3 M169.5 553v3 M169.5 559v3 M169.5 565v3 M169.5 571v3 M169.5 577v3 M169.5 583v3 M169.5 589v3 M169.5 595v3 M169.5 601v3 M169.5 607v3 M169.5 613v3 M169.5 619v3 M169.5 625v3 M169.5 631v3 M169.5 637v3 M169.5 643v3 M169.5 649v3 M169.5 655v3 M169.5 661v3 M233.5 109v3 M233.5 115v3 M233.5 121v3 M233.5 127v3 M233.5 133v3 M233.5 139v3 M233.5 145v3 M233.5 151v3 M233.5 157v3 M233.5 163v3 M233.5 169v3 M233.5 175v3 M233.5 181v3 M233.5 187v3 M233.5 193v3 M233.5 199v3 M233.5 205v3 M233.5 211v3 M233.5 217v3 M233.5 223v3 M233.5 229v3 M233.5 235v3 M233.5 241v3 M233.5 247v3 M233.5 253v3 M233.5 259v3 M233.5 265v3 M233.5 271v3 M233.5 277v3 M233.5 283v3 M233.5 289v3 M233.5 295v3 M233.5 301v3 M233.5 307v3 M233.5 313v3 M233.5 319v3 M233.5 325v3 M233.5 331v3 M233.5 337v3 M233.5 343v3 M233.5 349v3 M233.5 355v3 M233.5 361v3 M233.5 367v3 M233.5 373v3 M233.5 379v3 M233.5 385v3 M233.5 391v3 M233.5 397v3 M233.5 403v3 M233.5 409v3 M233.5 415v3 M233.5 421v3 M233.5 427v3 M233.5 433v3 M233.5 439v3 M233.5 445v3 M233.5 451v3 M233.5 457v3 M233.5 463v3 M233.5 469v3 M233.5 475v3 M233.5 481v3 M233.5 487v3 M233.5 493v3 M233.5 499v3 M233.5 505v3 M233.5 511v3 M233.5 517v3 M233.5 523v3 M233.5 529v3 M233.5 535v3 M233.5 541v3 M233.5 547v3 M233.5 553v3 M233.5 559v3 M233.5 565v3 M233.5 571v3 M233.5 577v3 M233.5 583v3 M233.5 589v3 M233.5 595v3 M233.5 601v3 M233.5 607v3 M233.5 613v3 M233.5 619v3 M233.5 625v3 M233.5 631v3 M233.5 637v3 M233.5 643v3 M233.5 649v3 M233.5 655v3 M233.5 661v3 M265.5 109v3 M265.5 115v3 M265.5 121v3 M265.5 127v3 M265.5 133v3 M265.5 139v3 M265.5 145v3 M265.5 151v3 M265.5 157v3 M265.5 163v3 M265.5 169v3 M265.5 175v3 M265.5 181v3 M265.5 187v3 M265.5 193v3 M265.5 199v3 M265.5 205v3 M265.5 211v3 M265.5 217v3 M265.5 223v3 M265.5 229v3 M265.5 235v3 M265.5 241v3 M265.5 247v3 M265.5 253v3 M265.5 259v3 M265.5 265v3 M265.5 271v3 M265.5 277v3 M265.5 283v3 M265.5 289v3 M265.5 295v3 M265.5 301v3 M265.5 307v3 M265.5 313v3 M265.5 319v3 M265.5 325v3 M265.5 331v3 M265.5 337v3 M265.5 343v3 M265.5 349v3 M265.5 355v3 M265.5 361v3 M265.5 367v3 M265.5 373v3 M265.5 379v3 M265.5 385v3 M265.5 391v3 M265.5 397v3 M265.5 403v3 M265.5 409v3 M265.5 415v3 M265.5 421v3 M265.5 427v3 M265.5 433v3 M265.5 439v3 M265.5 445v3 M265.5 451v3 M265.5 457v3 M265.5 463v3 M265.5 469v3 M265.5 475v3 M265.5 481v3 M265.5 487v3 M265.5 493v3 M265.5 499v3 M265.5 505v3 M265.5 511v3 M265.5 517v3 M265.5 523v3 M265.5 529v3 M265.5 535v3 M265.5 541v3 M265.5 547v3 M265.5 553v3 M265.5 559v3 M265.5 565v3 M265.5 571v3 M265.5 577v3 M265.5 583v3 M265.5 589v3 M265.5 595v3 M265.5 601v3 M265.5 607v3 M265.5 613v3 M265.5 619v3 M265.5 625v3 M265.5 631v3 M265.5 637v3 M265.5 643v3 M265.5 649v3 M265.5 655v3 M265.5 661v3 M297.5 109v3 M297.5 115v3 M297.5 121v3 M297.5 127v3 M297.5 133v3 M297.5 139v3 M297.5 145v3 M297.5 151v3 M297.5 157v3 M297.5 163v3 M297.5 169v3 M297.5 175v3 M297.5 181v3 M297.5 187v3 M297.5 193v3 M297.5 199v3 M297.5 205v3 M297.5 211v3 M297.5 217v3 M297.5 223v3 M297.5 229v3 M297.5 235v3 M297.5 241v3 M297.5 247v3 M297.5 253v3 M297.5 259v3 M297.5 265v3 M297.5 271v3 M297.5 277v3 M297.5 283v3 M297.5 289v3 M297.5 295v3 M297.5 301v3 M297.5 307v3 M297.5 313v3 M297.5 319v3 M297.5 325v3 M297.5 331v3 M297.5 337v3 M297.5 343v3 M297.5 349v3 M297.5 355v3 M297.5 361v3 M297.5 367v3 M297.5 373v3 M297.5 379v3 M297.5 385v3 M297.5 391v3 M297.5 397v3 M297.5 403v3 M297.5 409v3 M297.5 415v3 M297.5 421v3 M297.5 427v3 M297.5 433v3 M297.5 439v3 M297.5 445v3 M297.5 451v3 M297.5 457v3 M297.5 463v3 M297.5 469v3 M297.5 475v3 M297.5 481v3 M297.5 487v3 M297.5 493v3 M297.5 499v3 M297.5 505v3 M297.5 511v3 M297.5 517v3 M297.5 523v3 M297.5 529v3 M297.5 535v3 M297.5 541v3 M297.5 547v3 M297.5 553v3 M297.5 559v3 M297.5 565v3 M297.5 571v3 M297.5 577v3 M297.5 583v3 M297.5 589v3 M297.5 595v3 M297.5 601v3 M297.5 607v3 M297.5 613v3 M297.5 619v3 M297.5 625v3 M297.5 631v3 M297.5 637v3 M297.5 643v3 M297.5 649v3 M297.5 655v3 M297.5 661v3 M329.5 109v3 M329.5 115v3 M329.5 121v3 M329.5 127v3 M329.5 133v3 M329.5 139v3 M329.5 145v3 M329.5 151v3 M329.5 157v3 M329.5 163v3 M329.5 169v3 M329.5 175v3 M329.5 181v3 M329.5 187v3 M329.5 193v3 M329.5 199v3 M329.5 205v3 M329.5 211v3 M329.5 217v3 M329.5 223v3 M329.5 229v3 M329.5 235v3 M329.5 241v3 M329.5 247v3 M329.5 253v3 M329.5 259v3 M329.5 265v3 M329.5 271v3 M329.5 277v3 M329.5 283v3 M329.5 289v3 M329.5 295v3 M329.5 301v3 M329.5 307v3 M329.5 313v3 M329.5 319v3 M329.5 325v3 M329.5 331v3 M329.5 337v3 M329.5 343v3 M329.5 349v3 M329.5 355v3 M329.5 361v3 M329.5 367v3 M329.5 373v3 M329.5 379v3 M329.5 385v3 M329.5 391v3 M329.5 397v3 M329.5 403v3 M329.5 409v3 M329.5 415v3 M329.5 421v3 M329.5 427v3 M329.5 433v3 M329.5 439v3 M329.5 445v3 M329.5 451v3 M329.5 457v3 M329.5 463v3 M329.5 469v3 M329.5 475v3 M329.5 481v3 M329.5 487v3 M329.5 493v3 M329.5 499v3 M329.5 505v3 M329.5 511v3 M329.5 517v3 M329.5 523v3 M329.5 529v3 M329.5 535v3 M329.5 541v3 M329.5 547v3 M329.5 553v3 M329.5 559v3 M329.5 565v3 M329.5 571v3 M329.5 577v3 M329.5 583v3 M329.5 589v3 M329.5 595v3 M329.5 601v3 M329.5 607v3 M329.5 613v3 M329.5 619v3 M329.5 625v3 M329.5 631v3 M329.5 637v3 M329.5 643v3 M329.5 649v3 M329.5 655v3 M329.5 661v3 M361.5 109v3 M361.5 115v3 M361.5 121v3 M361.5 127v3 M361.5 133v3 M361.5 139v3 M361.5 145v3 M361.5 151v3 M361.5 157v3 M361.5 163v3 M361.5 169v3 M361.5 175v3 M361.5 181v3 M361.5 187v3 M361.5 193v3 M361.5 199v3 M361.5 205v3 M361.5 211v3 M361.5 217v3 M361.5 223v3 M361.5 229v3 M361.5 235v3 M361.5 241v3 M361.5 247v3 M361.5 253v3 M361.5 259v3 M361.5 265v3 M361.5 271v3 M361.5 277v3 M361.5 283v3 M361.5 289v3 M361.5 295v3 M361.5 301v3 M361.5 307v3 M361.5 313v3 M361.5 319v3 M361.5 325v3 M361.5 331v3 M361.5 337v3 M361.5 343v3 M361.5 349v3 M361.5 355v3 M361.5 361v3 M361.5 367v3 M361.5 373v3 M361.5 379v3 M361.5 385v3 M361.5 391v3 M361.5 397v3 M361.5 403v3 M361.5 409v3 M361.5 415v3 M361.5 421v3 M361.5 427v3 M361.5 433v3 M361.5 439v3 M361.5 445v3 M361.5 451v3 M361.5 457v3 M361.5 463v3 M361.5 469v3 M361.5 475v3 M361.5 481v3 M361.5 487v3 M361.5 493v3 M361.5 499v3 M361.5 505v3 M361.5 511v3 M361.5 517v3 M361.5 523v3 M361.5 529v3 M361.5 535v3 M361.5 541v3 M361.5 547v3 M361.5 553v3 M361.5 559v3 M361.5 565v3 M361.5 571v3 M361.5 577v3 M361.5 583v3 M361.5 589v3 M361.5 595v3 M361.5 601v3 M361.5 607v3 M361.5 613v3 M361.5 619v3 M361.5 625v3 M361.5 631v3 M361.5 637v3 M361.5 643v3 M361.5 649v3 M361.5 655v3 M361.5 661v3 M425.5 109v3 M425.5 115v3 M425.5 121v3 M425.5 127v3 M425.5 133v3 M425.5 139v3 M425.5 145v3 M425.5 151v3 M425.5 157v3 M425.5 163v3 M425.5 169v3 M425.5 175v3 M425.5 181v3 M425.5 187v3 M425.5 193v3 M425.5 199v3 M425.5 205v3 M425.5 211v3 M425.5 217v3 M425.5 223v3 M425.5 229v3 M425.5 235v3 M425.5 241v3 M425.5 247v3 M425.5 253v3 M425.5 259v3 M425.5 265v3 M425.5 271v3 M425.5 277v3 M425.5 283v3 M425.5 289v3 M425.5 295v3 M425.5 301v3 M425.5 307v3 M425.5 313v3 M425.5 319v3 M425.5 325v3 M425.5 331v3 M425.5 337v3 M425.5 343v3 M425.5 349v3 M425.5 355v3 M425.5 361v3 M425.5 367v3 M425.5 373v3 M425.5 379v3 M425.5 385v3 M425.5 391v3 M425.5 397v3 M425.5 403v3 M425.5 409v3 M425.5 415v3 M425.5 421v3 M425.5 427v3 M425.5 433v3 M425.5 439v3 M425.5 445v3 M425.5 451v3 M425.5 457v3 M425.5 463v3 M425.5 469v3 M425.5 475v3 M425.5 481v3 M425.5 487v3 M425.5 493v3 M425.5 499v3 M425.5 505v3 M425.5 511v3 M425.5 517v3 M425.5 523v3 M425.5 529v3 M425.5 535v3 M425.5 541v3 M425.5 547v3 M425.5 553v3 M425.5 559v3 M425.5 565v3 M425.5 571v3 M425.5 577v3 M425.5 583v3 M425.5 589v3 M425.5 595v3 M425.5 601v3 M425.5 607v3 M425.5 613v3 M425.5 619v3 M425.5 625v3 M425.5 631v3 M425.5 637v3 M425.5 643v3 M425.5 649v3 M425.5 655v3 M425.5 661v3 M457.5 109v3 M457.5 115v3 M457.5 121v3 M457.5 127v3 M457.5 133v3 M457.5 139v3 M457.5 145v3 M457.5 151v3 M457.5 157v3 M457.5 163v3 M457.5 169v3 M457.5 175v3 M457.5 181v3 M457.5 187v3 M457.5 193v3 M457.5 199v3 M457.5 205v3 M457.5 211v3 M457.5 217v3 M457.5 223v3 M457.5 229v3 M457.5 235v3 M457.5 241v3 M457.5 247v3 M457.5 253v3 M457.5 259v3 M457.5 265v3 M457.5 271v3 M457.5 277v3 M457.5 283v3 M457.5 289v3 M457.5 295v3 M457.5 301v3 M457.5 307v3 M457.5 313v3 M457.5 319v3 M457.5 325v3 M457.5 331v3 M457.5 337v3 M457.5 343v3 M457.5 349v3 M457.5 355v3 M457.5 361v3 M457.5 367v3 M457.5 373v3 M457.5 379v3 M457.5 385v3 M457.5 391v3 M457.5 397v3 M457.5 403v3 M457.5 409v3 M457.5 415v3 M457.5 421v3 M457.5 427v3 M457.5 433v3 M457.5 439v3 M457.5 445v3 M457.5 451v3 M457.5 457v3 M457.5 463v3 M457.5 469v3 M457.5 475v3 M457.5 481v3 M457.5 487v3 M457.5 493v3 M457.5 499v3 M457.5 505v3 M457.5 511v3 M457.5 517v3 M457.5 523v3 M457.5 529v3 M457.5 535v3 M457.5 541v3 M457.5 547v3 M457.5 553v3 M457.5 559v3 M457.5 565v3 M457.5 571v3 M457.5 577v3 M457.5 583v3 M457.5 589v3 M457.5 595v3 M457.5 601v3 M457.5 607v3 M457.5 613v3 M457.5 619v3 M457.5 625v3 M457.5 631v3 M457.5 637v3 M457.5 643v3 M457.5 649v3 M457.5 655v3 M457.5 661v3 M489.5 109v3 M489.5 115v3 M489.5 121v3 M489.5 127v3 M489.5 133v3 M489.5 139v3 M489.5 145v3 M489.5 151v3 M489.5 157v3 M489.5 163v3 M489.5 169v3 M489.5 175v3 M489.5 181v3 M489.5 187v3 M489.5 193v3 M489.5 199v3 M489.5 205v3 M489.5 211v3 M489.5 217v3 M489.5 223v3 M489.5 229v3 M489.5 235v3 M489.5 241v3 M489.5 247v3 M489.5 253v3 M489.5 259v3 M489.5 265v3 M489.5 271v3 M489.5 277v3 M489.5 283v3 M489.5 289v3 M489.5 295v3 M489.5 301v3 M489.5 307v3 M489.5 313v3 M489.5 319v3 M489.5 325v3 M489.5 331v3 M489.5 337v3 M489.5 343v3 M489.5 349v3 M489.5 355v3 M489.5 361v3 M489.5 367v3 M489.5 373v3 M489.5 379v3 M489.5 385v3 M489.5 391v3 M489.5 397v3 M489.5 403v3 M489.5 409v3 M489.5 415v3 M489.5 421v3 M489.5 427v3 M489.5 433v3 M489.5 439v3 M489.5 445v3 M489.5 451v3 M489.5 457v3 M489.5 463v3 M489.5 469v3 M489.5 475v3 M489.5 481v3 M489.5 487v3 M489.5 493v3 M489.5 499v3 M489.5 505v3 M489.5 511v3 M489.5 517v3 M489.5 523v3 M489.5 529v3 M489.5 535v3 M489.5 541v3 M489.5 547v3 M489.5 553v3 M489.5 559v3 M489.5 565v3 M489.5 571v3 M489.5 577v3 M489.5 583v3 M489.5 589v3 M489.5 595v3 M489.5 601v3 M489.5 607v3 M489.5 613v3 M489.5 619v3 M489.5 625v3 M489.5 631v3 M489.5 637v3 M489.5 643v3 M489.5 649v3 M489.5 655v3 M489.5 661v3 M521.5 109v3 M521.5 115v3 M521.5 121v3 M521.5 127v3 M521.5 133v3 M521.5 139v3 M521.5 145v3 M521.5 151v3 M521.5 157v3 M521.5 163v3 M521.5 169v3 M521.5 175v3 M521.5 181v3 M521.5 187v3 M521.5 193v3 M521.5 199v3 M521.5 205v3 M521.5 211v3 M521.5 217v3 M521.5 223v3 M521.5 229v3 M521.5 235v3 M521.5 241v3 M521.5 247v3 M521.5 253v3 M521.5 259v3 M521.5 265v3 M521.5 271v3 M521.5 277v3 M521.5 283v3 M521.5 289v3 M521.5 295v3 M521.5 301v3 M521.5 307v3 M521.5 313v3 M521.5 319v3 M521.5 325v3 M521.5 331v3 M521.5 337v3 M521.5 343v3 M521.5 349v3 M521.5 355v3 M521.5 361v3 M521.5 367v3 M521.5 373v3 M521.5 379v3 M521.5 385v3 M521.5 391v3 M521.5 397v3 M521.5 403v3 M521.5 409v3 M521.5 415v3 M521.5 421v3 M521.5 427v3 M521.5 433v3 M521.5 439v3 M521.5 445v3 M521.5 451v3 M521.5 457v3 M521.5 463v3 M521.5 469v3 M521.5 475v3 M521.5 481v3 M521.5 487v3 M521.5 493v3 M521.5 499v3 M521.5 505v3 M521.5 511v3 M521.5 517v3 M521.5 523v3 M521.5 529v3 M521.5 535v3 M521.5 541v3 M521.5 547v3 M521.5 553v3 M521.5 559v3 M521.5 565v3 M521.5 571v3 M521.5 577v3 M521.5 583v3 M521.5 589v3 M521.5 595v3 M521.5 601v3 M521.5 607v3 M521.5 613v3 M521.5 619v3 M521.5 625v3 M521.5 631v3 M521.5 637v3 M521.5 643v3 M521.5 649v3 M521.5 655v3 M521.5 661v3 M553.5 109v3 M553.5 115v3 M553.5 121v3 M553.5 127v3 M553.5 133v3 M553.5 139v3 M553.5 145v3 M553.5 151v3 M553.5 157v3 M553.5 163v3 M553.5 169v3 M553.5 175v3 M553.5 181v3 M553.5 187v3 M553.5 193v3 M553.5 199v3 M553.5 205v3 M553.5 211v3 M553.5 217v3 M553.5 223v3 M553.5 229v3 M553.5 235v3 M553.5 241v3 M553.5 247v3 M553.5 253v3 M553.5 259v3 M553.5 265v3 M553.5 271v3 M553.5 277v3 M553.5 283v3 M553.5 289v3 M553.5 295v3 M553.5 301v3 M553.5 307v3 M553.5 313v3 M553.5 319v3 M553.5 325v3 M553.5 331v3 M553.5 337v3 M553.5 343v3 M553.5 349v3 M553.5 355v3 M553.5 361v3 M553.5 367v3 M553.5 373v3 M553.5 379v3 M553.5 385v3 M553.5 391v3 M553.5 397v3 M553.5 403v3 M553.5 409v3 M553.5 415v3 M553.5 421v3 M553.5 427v3 M553.5 433v3 M553.5 439v3 M553.5 445v3 M553.5 451v3 M553.5 457v3 M553.5 463v3 M553.5 469v3 M553.5 475v3 M553.5 481v3 M553.5 487v3 M553.5 493v3 M553.5 499v3 M553.5 505v3 M553.5 511v3 M553.5 517v3 M553.5 523v3 M553.5 529v3 M553.5 535v3 M553.5 541v3 M553.5 547v3 M553.5 553v3 M553.5 559v3 M553.5 565v3 M553.5 571v3 M553.5 577v3 M553.5 583v3 M553.5 589v3 M553.5 595v3 M553.5 601v3 M553.5 607v3 M553.5 613v3 M553.5 619v3 M553.5 625v3 M553.5 631v3 M553.5 637v3 M553.5 643v3 M553.5 649v3 M553.5 655v3 M553.5 661v3 M585.5 109v3 M585.5 115v3 M585.5 121v3 M585.5 127v3 M585.5 133v3 M585.5 139v3 M585.5 145v3 M585.5 151v3 M585.5 157v3 M585.5 163v3 M585.5 169v3 M585.5 175v3 M585.5 181v3 M585.5 187v3 M585.5 193v3 M585.5 199v3 M585.5 205v3 M585.5 211v3 M585.5 217v3 M585.5 223v3 M585.5 229v3 M585.5 235v3 M585.5 241v3 M585.5 247v3 M585.5 253v3 M585.5 259v3 M585.5 265v3 M585.5 271v3 M585.5 277v3 M585.5 283v3 M585.5 289v3 M585.5 295v3 M585.5 301v3 M585.5 307v3 M585.5 313v3 M585.5 319v3 M585.5 325v3 M585.5 331v3 M585.5 337v3 M585.5 343v3 M585.5 349v3 M585.5 355v3 M585.5 361v3 M585.5 367v3 M585.5 373v3 M585.5 379v3 M585.5 385v3 M585.5 391v3 M585.5 397v3 M585.5 403v3 M585.5 409v3 M585.5 415v3 M585.5 421v3 M585.5 427v3 M585.5 433v3 M585.5 439v3 M585.5 445v3 M585.5 451v3 M585.5 457v3 M585.5 463v3 M585.5 469v3 M585.5 475v3 M585.5 481v3 M585.5 487v3 M585.5 493v3 M585.5 499v3 M585.5 505v3 M585.5 511v3 M585.5 517v3 M585.5 523v3 M585.5 529v3 M585.5 535v3 M585.5 541v3 M585.5 547v3 M585.5 553v3 M585.5 559v3 M585.5 565v3 M585.5 571v3 M585.5 577v3 M585.5 583v3 M585.5 589v3 M585.5 595v3 M585.5 601v3 M585.5 607v3 M585.5 613v3 M585.5 619v3 M585.5 625v3 M585.5 631v3 M585.5 637v3 M585.5 643v3 M585.5 649v3 M585.5 655v3 M585.5 661v3 M617.5 109v3 M617.5 115v3 M617.5 121v3 M617.5 127v3 M617.5 133v3 M617.5 139v3 M617.5 145v3 M617.5 151v3 M617.5 157v3 M617.5 163v3 M617.5 169v3 M617.5 175v3 M617.5 181v3 M617.5 187v3 M617.5 193v3 M617.5 199v3 M617.5 205v3 M617.5 211v3 M617.5 217v3 M617.5 223v3 M617.5 229v3 M617.5 235v3 M617.5 241v3 M617.5 247v3 M617.5 253v3 M617.5 259v3 M617.5 265v3 M617.5 271v3 M617.5 277v3 M617.5 283v3 M617.5 289v3 M617.5 295v3 M617.5 301v3 M617.5 307v3 M617.5 313v3 M617.5 319v3 M617.5 325v3 M617.5 331v3 M617.5 337v3 M617.5 343v3 M617.5 349v3 M617.5 355v3 M617.5 361v3 M617.5 367v3 M617.5 373v3 M617.5 379v3 M617.5 385v3 M617.5 391v3 M617.5 397v3 M617.5 403v3 M617.5 409v3 M617.5 415v3 M617.5 421v3 M617.5 427v3 M617.5 433v3 M617.5 439v3 M617.5 445v3 M617.5 451v3 M617.5 457v3 M617.5 463v3 M617.5 469v3 M617.5 475v3 M617.5 481v3 M617.5 487v3 M617.5 493v3 M617.5 499v3 M617.5 505v3 M617.5 511v3 M617.5 517v3 M617.5 523v3 M617.5 529v3 M617.5 535v3 M617.5 541v3 M617.5 547v3 M617.5 553v3 M617.5 559v3 M617.5 565v3 M617.5 571v3 M617.5 577v3 M617.5 583v3 M617.5 589v3 M617.5 595v3 M617.5 601v3 M617.5 607v3 M617.5 613v3 M617.5 619v3 M617.5 625v3 M617.5 631v3 M617.5 637v3 M617.5 643v3 M617.5 649v3 M617.5 655v3 M617.5 661v3 M649.5 109v3 M649.5 115v3 M649.5 121v3 M649.5 127v3 M649.5 133v3 M649.5 139v3 M649.5 145v3 M649.5 151v3 M649.5 157v3 M649.5 163v3 M649.5 169v3 M649.5 175v3 M649.5 181v3 M649.5 187v3 M649.5 193v3 M649.5 199v3 M649.5 205v3 M649.5 211v3 M649.5 217v3 M649.5 223v3 M649.5 229v3 M649.5 235v3 M649.5 241v3 M649.5 247v3 M649.5 253v3 M649.5 259v3 M649.5 265v3 M649.5 271v3 M649.5 277v3 M649.5 283v3 M649.5 289v3 M649.5 295v3 M649.5 301v3 M649.5 307v3 M649.5 313v3 M649.5 319v3 M649.5 325v3 M649.5 331v3 M649.5 337v3 M649.5 343v3 M649.5 349v3 M649.5 355v3 M649.5 361v3 M649.5 367v3 M649.5 373v3 M649.5 379v3 M649.5 385v3 M649.5 391v3 M649.5 397v3 M649.5 403v3 M649.5 409v3 M649.5 415v3 M649.5 421v3 M649.5 427v3 M649.5 433v3 M649.5 439v3 M649.5 445v3 M649.5 451v3 M649.5 457v3 M649.5 463v3 M649.5 469v3 M649.5 475v3 M649.5 481v3 M649.5 487v3 M649.5 493v3 M649.5 499v3 M649.5 505v3 M649.5 511v3 M649.5 517v3 M649.5 523v3 M649.5 529v3 M649.5 535v3 M649.5 541v3 M649.5 547v3 M649.5 553v3 M649.5 559v3 M649.5 565v3 M649.5 571v3 M649.5 577v3 M649.5 583v3 M649.5 589v3 M649.5 595v3 M649.5 601v3 M649.5 607v3 M649.5 613v3 M649.5 619v3 M649.5 625v3 M649.5 631v3 M649.5 637v3 M649.5 643v3 M649.5 649v3 M649.5 655v3 M649.5 661v3 M681.5 109v3 M681.5 115v3 M681.5 121v3 M681.5 127v3 M681.5 133v3 M681.5 139v3 M681.5 145v3 M681.5 151v3 M681.5 157v3 M681.5 163v3 M681.5 169v3 M681.5 175v3 M681.5 181v3 M681.5 187v3 M681.5 193v3 M681.5 199v3 M681.5 205v3 M681.5 211v3 M681.5 217v3 M681.5 223v3 M681.5 229v3 M681.5 235v3 M681.5 241v3 M681.5 247v3 M681.5 253v3 M681.5 259v3 M681.5 265v3 M681.5 271v3 M681.5 277v3 M681.5 283v3 M681.5 289v3 M681.5 295v3 M681.5 301v3 M681.5 307v3 M681.5 313v3 M681.5 319v3 M681.5 325v3 M681.5 331v3 M681.5 337v3 M681.5 343v3 M681.5 349v3 M681.5 355v3 M681.5 361v3 M681.5 367v3 M681.5 373v3 M681.5 379v3 M681.5 385v3 M681.5 391v3 M681.5 397v3 M681.5 403v3 M681.5 409v3 M681.5 415v3 M681.5 421v3 M681.5 427v3 M681.5 433v3 M681.5 439v3 M681.5 445v3 M681.5 451v3 M681.5 457v3 M681.5 463v3 M681.5 469v3 M681.5 475v3 M681.5 481v3 M681.5 487v3 M681.5 493v3 M681.5 499v3 M681.5 505v3 M681.5 511v3 M681.5 517v3 M681.5 523v3 M681.5 529v3 M681.5 535v3 M681.5 541v3 M681.5 547v3 M681.5 553v3 M681.5 559v3 M681.5 565v3 M681.5 571v3 M681.5 577v3 M681.5 583v3 M681.5 589v3 M681.5 595v3 M681.5 601v3 M681.5 607v3 M681.5 613v3 M681.5 619v3 M681.5 625v3 M681.5 631v3 M681.5 637v3 M681.5 643v3 M681.5 649v3 M681.5 655v3 M681.5 661v3 M713.5 109v3 M713.5 115v3 M713.5 121v3 M713.5 127v3 M713.5 133v3 M713.5 139v3 M713.5 145v3 M713.5 151v3 M713.5 157v3 M713.5 163v3 M713.5 169v3 M713.5 175v3 M713.5 181v3 M713.5 187v3 M713.5 193v3 M713.5 199v3 M713.5 205v3 M713.5 211v3 M713.5 217v3 M713.5 223v3 M713.5 229v3 M713.5 235v3 M713.5 241v3 M713.5 247v3 M713.5 253v3 M713.5 259v3 M713.5 265v3 M713.5 271v3 M713.5 277v3 M713.5 283v3 M713.5 289v3 M713.5 295v3 M713.5 301v3 M713.5 307v3 M713.5 313v3 M713.5 319v3 M713.5 325v3 M713.5 331v3 M713.5 337v3 M713.5 343v3 M713.5 349v3 M713.5 355v3 M713.5 361v3 M713.5 367v3 M713.5 373v3 M713.5 379v3 M713.5 385v3 M713.5 391v3 M713.5 397v3 M713.5 403v3 M713.5 409v3 M713.5 415v3 M713.5 421v3 M713.5 427v3 M713.5 433v3 M713.5 439v3 M713.5 445v3 M713.5 451v3 M713.5 457v3 M713.5 463v3 M713.5 469v3 M713.5 475v3 M713.5 481v3 M713.5 487v3 M713.5 493v3 M713.5 499v3 M713.5 505v3 M713.5 511v3 M713.5 517v3 M713.5 523v3 M713.5 529v3 M713.5 535v3 M713.5 541v3 M713.5 547v3 M713.5 553v3 M713.5 559v3 M713.5 565v3 M713.5 571v3 M713.5 577v3 M713.5 583v3 M713.5 589v3 M713.5 595v3 M713.5 601v3 M713.5 607v3 M713.5 613v3 M713.5 619v3 M713.5 625v3 M713.5 631v3 M713.5 637v3 M713.5 643v3 M713.5 649v3 M713.5 655v3 M713.5 661v3 M745.5 109v3 M745.5 115v3 M745.5 121v3 M745.5 127v3 M745.5 133v3 M745.5 139v3 M745.5 145v3 M745.5 151v3 M745.5 157v3 M745.5 163v3 M745.5 169v3 M745.5 175v3 M745.5 181v3 M745.5 187v3 M745.5 193v3 M745.5 199v3 M745.5 205v3 M745.5 211v3 M745.5 217v3 M745.5 223v3 M745.5 229v3 M745.5 235v3 M745.5 241v3 M745.5 247v3 M745.5 253v3 M745.5 259v3 M745.5 265v3 M745.5 271v3 M745.5 277v3 M745.5 283v3 M745.5 289v3 M745.5 295v3 M745.5 301v3 M745.5 307v3 M745.5 313v3 M745.5 319v3 M745.5 325v3 M745.5 331v3 M745.5 337v3 M745.5 343v3 M745.5 349v3 M745.5 355v3 M745.5 361v3 M745.5 367v3 M745.5 373v3 M745.5 379v3 M745.5 385v3 M745.5 391v3 M745.5 397v3 M745.5 403v3 M745.5 409v3 M745.5 415v3 M745.5 421v3 M745.5 427v3 M745.5 433v3 M745.5 439v3 M745.5 445v3 M745.5 451v3 M745.5 457v3 M745.5 463v3 M745.5 469v3 M745.5 475v3 M745.5 481v3 M745.5 487v3 M745.5 493v3 M745.5 499v3 M745.5 505v3 M745.5 511v3 M745.5 517v3 M745.5 523v3 M745.5 529v3 M745.5 535v3 M745.5 541v3 M745.5 547v3 M745.5 553v3 M745.5 559v3 M745.5 565v3 M745.5 571v3 M745.5 577v3 M745.5 583v3 M745.5 589v3 M745.5 595v3 M745.5 601v3 M745.5 607v3 M745.5 613v3 M745.5 619v3 M745.5 625v3 M745.5 631v3 M745.5 637v3 M745.5 643v3 M745.5 649v3 M745.5 655v3 M745.5 661v3 M777.5 109v3 M777.5 115v3 M777.5 121v3 M777.5 127v3 M777.5 133v3 M777.5 139v3 M777.5 145v3 M777.5 151v3 M777.5 157v3 M777.5 163v3 M777.5 169v3 M777.5 175v3 M777.5 181v3 M777.5 187v3 M777.5 193v3 M777.5 199v3 M777.5 205v3 M777.5 211v3 M777.5 217v3 M777.5 223v3 M777.5 229v3 M777.5 235v3 M777.5 241v3 M777.5 247v3 M777.5 253v3 M777.5 259v3 M777.5 265v3 M777.5 271v3 M777.5 277v3 M777.5 283v3 M777.5 289v3 M777.5 295v3 M777.5 301v3 M777.5 307v3 M777.5 313v3 M777.5 319v3 M777.5 325v3 M777.5 331v3 M777.5 337v3 M777.5 343v3 M777.5 349v3 M777.5 355v3 M777.5 361v3 M777.5 367v3 M777.5 373v3 M777.5 379v3 M777.5 385v3 M777.5 391v3 M777.5 397v3 M777.5 403v3 M777.5 409v3 M777.5 415v3 M777.5 421v3 M777.5 427v3 M777.5 433v3 M777.5 439v3 M777.5 445v3 M777.5 451v3 M777.5 457v3 M777.5 463v3 M777.5 469v3 M777.5 475v3 M777.5 481v3 M777.5 487v3 M777.5 493v3 M777.5 499v3 M777.5 505v3 M777.5 511v3 M777.5 517v3 M777.5 523v3 M777.5 529v3 M777.5 535v3 M777.5 541v3 M777.5 547v3 M777.5 553v3 M777.5 559v3 M777.5 565v3 M777.5 571v3 M777.5 577v3 M777.5 583v3 M777.5 589v3 M777.5 595v3 M777.5 601v3 M777.5 607v3 M777.5 613v3 M777.5 619v3 M777.5 625v3 M777.5 631v3 M777.5 637v3 M777.5 643v3 M777.5 649v3 M777.5 655v3 M777.5 661v3 M809.5 109v3 M809.5 115v3 M809.5 121v3 M809.5 127v3 M809.5 133v3 M809.5 139v3 M809.5 145v3 M809.5 151v3 M809.5 157v3 M809.5 163v3 M809.5 169v3 M809.5 175v3 M809.5 181v3 M809.5 187v3 M809.5 193v3 M809.5 199v3 M809.5 205v3 M809.5 211v3 M809.5 217v3 M809.5 223v3 M809.5 229v3 M809.5 235v3 M809.5 241v3 M809.5 247v3 M809.5 253v3 M809.5 259v3 M809.5 265v3 M809.5 271v3 M809.5 277v3 M809.5 283v3 M809.5 289v3 M809.5 295v3 M809.5 301v3 M809.5 307v3 M809.5 313v3 M809.5 319v3 M809.5 325v3 M809.5 331v3 M809.5 337v3 M809.5 343v3 M809.5 349v3 M809.5 355v3 M809.5 361v3 M809.5 367v3 M809.5 373v3 M809.5 379v3 M809.5 385v3 M809.5 391v3 M809.5 397v3 M809.5 403v3 M809.5 409v3 M809.5 415v3 M809.5 421v3 M809.5 427v3 M809.5 433v3 M809.5 439v3 M809.5 445v3 M809.5 451v3 M809.5 457v3 M809.5 463v3 M809.5 469v3 M809.5 475v3 M809.5 481v3 M809.5 487v3 M809.5 493v3 M809.5 499v3 M809.5 505v3 M809.5 511v3 M809.5 517v3 M809.5 523v3 M809.5 529v3 M809.5 535v3 M809.5 541v3 M809.5 547v3 M809.5 553v3 M809.5 559v3 M809.5 565v3 M809.5 571v3 M809.5 577v3 M809.5 583v3 M809.5 589v3 M809.5 595v3 M809.5 601v3 M809.5 607v3 M809.5 613v3 M809.5 619v3 M809.5 625v3 M809.5 631v3 M809.5 637v3 M809.5 643v3 M809.5 649v3 M809.5 655v3 M809.5 661v3 M841.5 109v3 M841.5 115v3 M841.5 121v3 M841.5 127v3 M841.5 133v3 M841.5 139v3 M841.5 145v3 M841.5 151v3 M841.5 157v3 M841.5 163v3 M841.5 169v3 M841.5 175v3 M841.5 181v3 M841.5 187v3 M841.5 193v3 M841.5 199v3 M841.5 205v3 M841.5 211v3 M841.5 217v3 M841.5 223v3 M841.5 229v3 M841.5 235v3 M841.5 241v3 M841.5 247v3 M841.5 253v3 M841.5 259v3 M841.5 265v3 M841.5 271v3 M841.5 277v3 M841.5 283v3 M841.5 289v3 M841.5 295v3 M841.5 301v3 M841.5 307v3 M841.5 313v3 M841.5 319v3 M841.5 325v3 M841.5 331v3 M841.5 337v3 M841.5 343v3 M841.5 349v3 M841.5 355v3 M841.5 361v3 M841.5 367v3 M841.5 373v3 M841.5 379v3 M841.5 385v3 M841.5 391v3 M841.5 397v3 M841.5 403v3 M841.5 409v3 M841.5 415v3 M841.5 421v3 M841.5 427v3 M841.5 433v3 M841.5 439v3 M841.5 445v3 M841.5 451v3 M841.5 457v3 M841.5 463v3 M841.5 469v3 M841.5 475v3 M841.5 481v3 M841.5 487v3 M841.5 493v3 M841.5 499v3 M841.5 505v3 M841.5 511v3 M841.5 517v3 M841.5 523v3 M841.5 529v3 M841.5 535v3 M841.5 541v3 M841.5 547v3 M841.5 553v3 M841.5 559v3 M841.5 565v3 M841.5 571v3 M841.5 577v3 M841.5 583v3 M841.5 589v3 M841.5 595v3 M841.5 601v3 M841.5 607v3 M841.5 613v3 M841.5 619v3 M841.5 625v3 M841.5 631v3 M841.5 637v3 M841.5 643v3 M841.5 649v3 M841.5 655v3 M841.5 661v3 M873.5 109v3 M873.5 115v3 M873.5 121v3 M873.5 127v3 M873.5 133v3 M873.5 139v3 M873.5 145v3 M873.5 151v3 M873.5 157v3 M873.5 163v3 M873.5 169v3 M873.5 175v3 M873.5 181v3 M873.5 187v3 M873.5 193v3 M873.5 199v3 M873.5 205v3 M873.5 211v3 M873.5 217v3 M873.5 223v3 M873.5 229v3 M873.5 235v3 M873.5 241v3 M873.5 247v3 M873.5 253v3 M873.5 259v3 M873.5 265v3 M873.5 271v3 M873.5 277v3 M873.5 283v3 M873.5 289v3 M873.5 295v3 M873.5 301v3 M873.5 307v3 M873.5 313v3 M873.5 319v3 M873.5 325v3 M873.5 331v3 M873.5 337v3 M873.5 343v3 M873.5 349v3 M873.5 355v3 M873.5 361v3 M873.5 367v3 M873.5 373v3 M873.5 379v3 M873.5 385v3 M873.5 391v3 M873.5 397v3 M873.5 403v3 M873.5 409v3 M873.5 415v3 M873.5 421v3 M873.5 427v3 M873.5 433v3 M873.5 439v3 M873.5 445v3 M873.5 451v3 M873.5 457v3 M873.5 463v3 M873.5 469v3 M873.5 475v3 M873.5 481v3 M873.5 487v3 M873.5 493v3 M873.5 499v3 M873.5 505v3 M873.5 511v3 M873.5 517v3 M873.5 523v3 M873.5 529v3 M873.5 535v3 M873.5 541v3 M873.5 547v3 M873.5 553v3 M873.5 559v3 M873.5 565v3 M873.5 571v3 M873.5 577v3 M873.5 583v3 M873.5 589v3 M873.5 595v3 M873.5 601v3 M873.5 607v3 M873.5 613v3 M873.5 619v3 M873.5 625v3 M873.5 631v3 M873.5 637v3 M873.5 643v3 M873.5 649v3 M873.5 655v3 M873.5 661v3 M937.5 109v3 M937.5 115v3 M937.5 121v3 M937.5 127v3 M937.5 133v3 M937.5 139v3 M937.5 145v3 M937.5 151v3 M937.5 157v3 M937.5 163v3 M937.5 169v3 M937.5 175v3 M937.5 181v3 M937.5 187v3 M937.5 193v3 M937.5 199v3 M937.5 205v3 M937.5 211v3 M937.5 217v3 M937.5 223v3 M937.5 229v3 M937.5 235v3 M937.5 241v3 M937.5 247v3 M937.5 253v3 M937.5 259v3 M937.5 265v3 M937.5 271v3 M937.5 277v3 M937.5 283v3 M937.5 289v3 M937.5 295v3 M937.5 301v3 M937.5 307v3 M937.5 313v3 M937.5 319v3 M937.5 325v3 M937.5 331v3 M937.5 337v3 M937.5 343v3 M937.5 349v3 M937.5 355v3 M937.5 361v3 M937.5 367v3 M937.5 373v3 M937.5 379v3 M937.5 385v3 M937.5 391v3 M937.5 397v3 M937.5 403v3 M937.5 409v3 M937.5 415v3 M937.5 421v3 M937.5 427v3 M937.5 433v3 M937.5 439v3 M937.5 445v3 M937.5 451v3 M937.5 457v3 M937.5 463v3 M937.5 469v3 M937.5 475v3 M937.5 481v3 M937.5 487v3 M937.5 493v3 M937.5 499v3 M937.5 505v3 M937.5 511v3 M937.5 517v3 M937.5 523v3 M937.5 529v3 M937.5 535v3 M937.5 541v3 M937.5 547v3 M937.5 553v3 M937.5 559v3 M937.5 565v3 M937.5 571v3 M937.5 577v3 M937.5 583v3 M937.5 589v3 M937.5 595v3 M937.5 601v3 M937.5 607v3 M937.5 613v3 M937.5 619v3 M937.5 625v3 M937.5 631v3 M937.5 637v3 M937.5 643v3 M937.5 649v3 M937.5 655v3 M937.5 661v3 M969.5 109v3 M969.5 115v3 M969.5 121v3 M969.5 127v3 M969.5 133v3 M969.5 139v3 M969.5 145v3 M969.5 151v3 M969.5 157v3 M969.5 163v3 M969.5 169v3 M969.5 175v3 M969.5 181v3 M969.5 187v3 M969.5 193v3 M969.5 199v3 M969.5 205v3 M969.5 211v3 M969.5 217v3 M969.5 223v3 M969.5 229v3 M969.5 235v3 M969.5 241v3 M969.5 247v3 M969.5 253v3 M969.5 259v3 M969.5 265v3 M969.5 271v3 M969.5 277v3 M969.5 283v3 M969.5 289v3 M969.5 295v3 M969.5 301v3 M969.5 307v3 M969.5 313v3 M969.5 319v3 M969.5 325v3 M969.5 331v3 M969.5 337v3 M969.5 343v3 M969.5 349v3 M969.5 355v3 M969.5 361v3 M969.5 367v3 M969.5 373v3 M969.5 379v3 M969.5 385v3 M969.5 391v3 M969.5 397v3 M969.5 403v3 M969.5 409v3 M969.5 415v3 M969.5 421v3 M969.5 427v3 M969.5 433v3 M969.5 439v3 M969.5 445v3 M969.5 451v3 M969.5 457v3 M969.5 463v3 M969.5 469v3 M969.5 475v3 M969.5 481v3 M969.5 487v3 M969.5 493v3 M969.5 499v3 M969.5 505v3 M969.5 511v3 M969.5 517v3 M969.5 523v3 M969.5 529v3 M969.5 535v3 M969.5 541v3 M969.5 547v3 M969.5 553v3 M969.5 559v3 M969.5 565v3 M969.5 571v3 M969.5 577v3 M969.5 583v3 M969.5 589v3 M969.5 595v3 M969.5 601v3 M969.5 607v3 M969.5 613v3 M969.5 619v3 M969.5 625v3 M969.5 631v3 M969.5 637v3 M969.5 643v3 M969.5 649v3 M969.5 655v3 M969.5 661v3 M1001.5 109v3 M1001.5 115v3 M1001.5 121v3 M1001.5 127v3 M1001.5 133v3 M1001.5 139v3 M1001.5 145v3 M1001.5 151v3 M1001.5 157v3 M1001.5 163v3 M1001.5 169v3 M1001.5 175v3 M1001.5 181v3 M1001.5 187v3 M1001.5 193v3 M1001.5 199v3 M1001.5 205v3 M1001.5 211v3 M1001.5 217v3 M1001.5 223v3 M1001.5 229v3 M1001.5 235v3 M1001.5 241v3 M1001.5 247v3 M1001.5 253v3 M1001.5 259v3 M1001.5 265v3 M1001.5 271v3 M1001.5 277v3 M1001.5 283v3 M1001.5 289v3 M1001.5 295v3 M1001.5 301v3 M1001.5 307v3 M1001.5 313v3 M1001.5 319v3 M1001.5 325v3 M1001.5 331v3 M1001.5 337v3 M1001.5 343v3 M1001.5 349v3 M1001.5 355v3 M1001.5 361v3 M1001.5 367v3 M1001.5 373v3 M1001.5 379v3 M1001.5 385v3 M1001.5 391v3 M1001.5 397v3 M1001.5 403v3 M1001.5 409v3 M1001.5 415v3 M1001.5 421v3 M1001.5 427v3 M1001.5 433v3 M1001.5 439v3 M1001.5 445v3 M1001.5 451v3 M1001.5 457v3 M1001.5 463v3 M1001.5 469v3 M1001.5 475v3 M1001.5 481v3 M1001.5 487v3 M1001.5 493v3 M1001.5 499v3 M1001.5 505v3 M1001.5 511v3 M1001.5 517v3 M1001.5 523v3 M1001.5 529v3 M1001.5 535v3 M1001.5 541v3 M1001.5 547v3 M1001.5 553v3 M1001.5 559v3 M1001.5 565v3 M1001.5 571v3 M1001.5 577v3 M1001.5 583v3 M1001.5 589v3 M1001.5 595v3 M1001.5 601v3 M1001.5 607v3 M1001.5 613v3 M1001.5 619v3 M1001.5 625v3 M1001.5 631v3 M1001.5 637v3 M1001.5 643v3 M1001.5 649v3 M1001.5 655v3 M1001.5 661v3 M1033.5 109v3 M1033.5 115v3 M1033.5 121v3 M1033.5 127v3 M1033.5 133v3 M1033.5 139v3 M1033.5 145v3 M1033.5 151v3 M1033.5 157v3 M1033.5 163v3 M1033.5 169v3 M1033.5 175v3 M1033.5 181v3 M1033.5 187v3 M1033.5 193v3 M1033.5 199v3 M1033.5 205v3 M1033.5 211v3 M1033.5 217v3 M1033.5 223v3 M1033.5 229v3 M1033.5 235v3 M1033.5 241v3 M1033.5 247v3 M1033.5 253v3 M1033.5 259v3 M1033.5 265v3 M1033.5 271v3 M1033.5 277v3 M1033.5 283v3 M1033.5 289v3 M1033.5 295v3 M1033.5 301v3 M1033.5 307v3 M1033.5 313v3 M1033.5 319v3 M1033.5 325v3 M1033.5 331v3 M1033.5 337v3 M1033.5 343v3 M1033.5 349v3 M1033.5 355v3 M1033.5 361v3 M1033.5 367v3 M1033.5 373v3 M1033.5 379v3 M1033.5 385v3 M1033.5 391v3 M1033.5 397v3 M1033.5 403v3 M1033.5 409v3 M1033.5 415v3 M1033.5 421v3 M1033.5 427v3 M1033.5 433v3 M1033.5 439v3 M1033.5 445v3 M1033.5 451v3 M1033.5 457v3 M1033.5 463v3 M1033.5 469v3 M1033.5 475v3 M1033.5 481v3 M1033.5 487v3 M1033.5 493v3 M1033.5 499v3 M1033.5 505v3 M1033.5 511v3 M1033.5 517v3 M1033.5 523v3 M1033.5 529v3 M1033.5 535v3 M1033.5 541v3 M1033.5 547v3 M1033.5 553v3 M1033.5 559v3 M1033.5 565v3 M1033.5 571v3 M1033.5 577v3 M1033.5 583v3 M1033.5 589v3 M1033.5 595v3 M1033.5 601v3 M1033.5 607v3 M1033.5 613v3 M1033.5 619v3 M1033.5 625v3 M1033.5 631v3 M1033.5 637v3 M1033.5 643v3 M1033.5 649v3 M1033.5 655v3 M1033.5 661v3 M1065.5 109v3 M1065.5 115v3 M1065.5 121v3 M1065.5 127v3 M1065.5 133v3 M1065.5 139v3 M1065.5 145v3 M1065.5 151v3 M1065.5 157v3 M1065.5 163v3 M1065.5 169v3 M1065.5 175v3 M1065.5 181v3 M1065.5 187v3 M1065.5 193v3 M1065.5 199v3 M1065.5 205v3 M1065.5 211v3 M1065.5 217v3 M1065.5 223v3 M1065.5 229v3 M1065.5 235v3 M1065.5 241v3 M1065.5 247v3 M1065.5 253v3 M1065.5 259v3 M1065.5 265v3 M1065.5 271v3 M1065.5 277v3 M1065.5 283v3 M1065.5 289v3 M1065.5 295v3 M1065.5 301v3 M1065.5 307v3 M1065.5 313v3 M1065.5 319v3 M1065.5 325v3 M1065.5 331v3 M1065.5 337v3 M1065.5 343v3 M1065.5 349v3 M1065.5 355v3 M1065.5 361v3 M1065.5 367v3 M1065.5 373v3 M1065.5 379v3 M1065.5 385v3 M1065.5 391v3 M1065.5 397v3 M1065.5 403v3 M1065.5 409v3 M1065.5 415v3 M1065.5 421v3 M1065.5 427v3 M1065.5 433v3 M1065.5 439v3 M1065.5 445v3 M1065.5 451v3 M1065.5 457v3 M1065.5 463v3 M1065.5 469v3 M1065.5 475v3 M1065.5 481v3 M1065.5 487v3 M1065.5 493v3 M1065.5 499v3 M1065.5 505v3 M1065.5 511v3 M1065.5 517v3 M1065.5 523v3 M1065.5 529v3 M1065.5 535v3 M1065.5 541v3 M1065.5 547v3 M1065.5 553v3 M1065.5 559v3 M1065.5 565v3 M1065.5 571v3 M1065.5 577v3 M1065.5 583v3 M1065.5 589v3 M1065.5 595v3 M1065.5 601v3 M1065.5 607v3 M1065.5 613v3 M1065.5 619v3 M1065.5 625v3 M1065.5 631v3 M1065.5 637v3 M1065.5 643v3 M1065.5 649v3 M1065.5 655v3 M1065.5 661v3 M1129.5 109v3 M1129.5 115v3 M1129.5 121v3 M1129.5 127v3 M1129.5 133v3 M1129.5 139v3 M1129.5 145v3 M1129.5 151v3 M1129.5 157v3 M1129.5 163v3 M1129.5 169v3 M1129.5 175v3 M1129.5 181v3 M1129.5 187v3 M1129.5 193v3 M1129.5 199v3 M1129.5 205v3 M1129.5 211v3 M1129.5 217v3 M1129.5 223v3 M1129.5 229v3 M1129.5 235v3 M1129.5 241v3 M1129.5 247v3 M1129.5 253v3 M1129.5 259v3 M1129.5 265v3 M1129.5 271v3 M1129.5 277v3 M1129.5 283v3 M1129.5 289v3 M1129.5 295v3 M1129.5 301v3 M1129.5 307v3 M1129.5 313v3 M1129.5 319v3 M1129.5 325v3 M1129.5 331v3 M1129.5 337v3 M1129.5 343v3 M1129.5 349v3 M1129.5 355v3 M1129.5 361v3 M1129.5 367v3 M1129.5 373v3 M1129.5 379v3 M1129.5 385v3 M1129.5 391v3 M1129.5 397v3 M1129.5 403v3 M1129.5 409v3 M1129.5 415v3 M1129.5 421v3 M1129.5 427v3 M1129.5 433v3 M1129.5 439v3 M1129.5 445v3 M1129.5 451v3 M1129.5 457v3 M1129.5 463v3 M1129.5 469v3 M1129.5 475v3 M1129.5 481v3 M1129.5 487v3 M1129.5 493v3 M1129.5 499v3 M1129.5 505v3 M1129.5 511v3 M1129.5 517v3 M1129.5 523v3 M1129.5 529v3 M1129.5 535v3 M1129.5 541v3 M1129.5 547v3 M1129.5 553v3 M1129.5 559v3 M1129.5 565v3 M1129.5 571v3 M1129.5 577v3 M1129.5 583v3 M1129.5 589v3 M1129.5 595v3 M1129.5 601v3 M1129.5 607v3 M1129.5 613v3 M1129.5 619v3 M1129.5 625v3 M1129.5 631v3 M1129.5 637v3 M1129.5 643v3 M1129.5 649v3 M1129.5 655v3 M1129.5 661v3 M1161.5 109v3 M1161.5 115v3 M1161.5 121v3 M1161.5 127v3 M1161.5 133v3 M1161.5 139v3 M1161.5 145v3 M1161.5 151v3 M1161.5 157v3 M1161.5 163v3 M1161.5 169v3 M1161.5 175v3 M1161.5 181v3 M1161.5 187v3 M1161.5 193v3 M1161.5 199v3 M1161.5 205v3 M1161.5 211v3 M1161.5 217v3 M1161.5 223v3 M1161.5 229v3 M1161.5 235v3 M1161.5 241v3 M1161.5 247v3 M1161.5 253v3 M1161.5 259v3 M1161.5 265v3 M1161.5 271v3 M1161.5 277v3 M1161.5 283v3 M1161.5 289v3 M1161.5 295v3 M1161.5 301v3 M1161.5 307v3 M1161.5 313v3 M1161.5 319v3 M1161.5 325v3 M1161.5 331v3 M1161.5 337v3 M1161.5 343v3 M1161.5 349v3 M1161.5 355v3 M1161.5 361v3 M1161.5 367v3 M1161.5 373v3 M1161.5 379v3 M1161.5 385v3 M1161.5 391v3 M1161.5 397v3 M1161.5 403v3 M1161.5 409v3 M1161.5 415v3 M1161.5 421v3 M1161.5 427v3 M1161.5 433v3 M1161.5 439v3 M1161.5 445v3 M1161.5 451v3 M1161.5 457v3 M1161.5 463v3 M1161.5 469v3 M1161.5 475v3 M1161.5 481v3 M1161.5 487v3 M1161.5 493v3 M1161.5 499v3 M1161.5 505v3 M1161.5 511v3 M1161.5 517v3 M1161.5 523v3 M1161.5 529v3 M1161.5 535v3 M1161.5 541v3 M1161.5 547v3 M1161.5 553v3 M1161.5 559v3 M1161.5 565v3 M1161.5 571v3 M1161.5 577v3 M1161.5 583v3 M1161.5 589v3 M1161.5 595v3 M1161.5 601v3 M1161.5 607v3 M1161.5 613v3 M1161.5 619v3 M1161.5 625v3 M1161.5 631v3 M1161.5 637v3 M1161.5 643v3 M1161.5 649v3 M1161.5 655v3 M1161.5 661v3 M1193.5 109v3 M1193.5 115v3 M1193.5 121v3 M1193.5 127v3 M1193.5 133v3 M1193.5 139v3 M1193.5 145v3 M1193.5 151v3 M1193.5 157v3 M1193.5 163v3 M1193.5 169v3 M1193.5 175v3 M1193.5 181v3 M1193.5 187v3 M1193.5 193v3 M1193.5 199v3 M1193.5 205v3 M1193.5 211v3 M1193.5 217v3 M1193.5 223v3 M1193.5 229v3 M1193.5 235v3 M1193.5 241v3 M1193.5 247v3 M1193.5 253v3 M1193.5 259v3 M1193.5 265v3 M1193.5 271v3 M1193.5 277v3 M1193.5 283v3 M1193.5 289v3 M1193.5 295v3 M1193.5 301v3 M1193.5 307v3 M1193.5 313v3 M1193.5 319v3 M1193.5 325v3 M1193.5 331v3 M1193.5 337v3 M1193.5 343v3 M1193.5 349v3 M1193.5 355v3 M1193.5 361v3 M1193.5 367v3 M1193.5 373v3 M1193.5 379v3 M1193.5 385v3 M1193.5 391v3 M1193.5 397v3 M1193.5 403v3 M1193.5 409v3 M1193.5 415v3 M1193.5 421v3 M1193.5 427v3 M1193.5 433v3 M1193.5 439v3 M1193.5 445v3 M1193.5 451v3 M1193.5 457v3 M1193.5 463v3 M1193.5 469v3 M1193.5 475v3 M1193.5 481v3 M1193.5 487v3 M1193.5 493v3 M1193.5 499v3 M1193.5 505v3 M1193.5 511v3 M1193.5 517v3 M1193.5 523v3 M1193.5 529v3 M1193.5 535v3 M1193.5 541v3 M1193.5 547v3 M1193.5 553v3 M1193.5 559v3 M1193.5 565v3 M1193.5 571v3 M1193.5 577v3 M1193.5 583v3 M1193.5 589v3 M1193.5 595v3 M1193.5 601v3 M1193.5 607v3 M1193.5 613v3 M1193.5 619v3 M1193.5 625v3 M1193.5 631v3 M1193.5 637v3 M1193.5 643v3 M1193.5 649v3 M1193.5 655v3 M1193.5 661v3 M1225.5 109v3 M1225.5 115v3 M1225.5 121v3 M1225.5 127v3 M1225.5 133v3 M1225.5 139v3 M1225.5 145v3 M1225.5 151v3 M1225.5 157v3 M1225.5 163v3 M1225.5 169v3 M1225.5 175v3 M1225.5 181v3 M1225.5 187v3 M1225.5 193v3 M1225.5 199v3 M1225.5 205v3 M1225.5 211v3 M1225.5 217v3 M1225.5 223v3 M1225.5 229v3 M1225.5 235v3 M1225.5 241v3 M1225.5 247v3 M1225.5 253v3 M1225.5 259v3 M1225.5 265v3 M1225.5 271v3 M1225.5 277v3 M1225.5 283v3 M1225.5 289v3 M1225.5 295v3 M1225.5 301v3 M1225.5 307v3 M1225.5 313v3 M1225.5 319v3 M1225.5 325v3 M1225.5 331v3 M1225.5 337v3 M1225.5 343v3 M1225.5 349v3 M1225.5 355v3 M1225.5 361v3 M1225.5 367v3 M1225.5 373v3 M1225.5 379v3 M1225.5 385v3 M1225.5 391v3 M1225.5 397v3 M1225.5 403v3 M1225.5 409v3 M1225.5 415v3 M1225.5 421v3 M1225.5 427v3 M1225.5 433v3 M1225.5 439v3 M1225.5 445v3 M1225.5 451v3 M1225.5 457v3 M1225.5 463v3 M1225.5 469v3 M1225.5 475v3 M1225.5 481v3 M1225.5 487v3 M1225.5 493v3 M1225.5 499v3 M1225.5 505v3 M1225.5 511v3 M1225.5 517v3 M1225.5 523v3 M1225.5 529v3 M1225.5 535v3 M1225.5 541v3 M1225.5 547v3 M1225.5 553v3 M1225.5 559v3 M1225.5 565v3 M1225.5 571v3 M1225.5 577v3 M1225.5 583v3 M1225.5 589v3 M1225.5 595v3 M1225.5 601v3 M1225.5 607v3 M1225.5 613v3 M1225.5 619v3 M1225.5 625v3 M1225.5 631v3 M1225.5 637v3 M1225.5 643v3 M1225.5 649v3 M1225.5 655v3 M1225.5 661v3" stroke="#778899" stroke-width="1" fill="none"/>
<path d="M33.5 109v3 M33.5 115v3 M33.5 121v3 M33.5 127v3 M33.5 133v3 M33.5 139v3 M33.5 145v3 M33.5 151v3 M33.5 157v3 M33.5 163v3 M33.5 169v3 M33.5 175v3 M33.5 181v3 M33.5 187v3 M33.5 193v3 M33.5 199v3 M33.5 205v3 M33.5 211v3 M33.5 217v3 M33.5 223v3 M33.5 229v3 M33.5 235v3 M33.5 241v3 M33.5 247v3 M33.5 253v3 M33.5 259v3 M33.5 265v3 M33.5 271v3 M33.5 277v3 M33.5 283v3 M33.5 289v3 M33.5 295v3 M33.5 301v3 M33.5 307v3 M33.5 313v3 M33.5 319v3 M33.5 325v3 M33.5 331v3 M33.5 337v3 M33.5 343v3 M33.5 349v3 M33.5 355v3 M33.5 361v3 M33.5 367v3 M33.5 373v3 M33.5 379v3 M33.5 385v3 M33.5 391v3 M33.5 397v3 M33.5 403v3 M33.5 409v3 M33.5 415v3 M33.5 421v3 M33.5 427v3 M33.5 433v3 M33.5 439v3 M33.5 445v3 M33.5 451v3 M33.5 457v3 M33.5 463v3 M33.5 469v3 M33.5 475v3 M33.5 481v3 M33.5 487v3 M33.5 493v3 M33.5 499v3 M33.5 505v3 M33.5 511v3 M33.5 517v3 M33.5 523v3 M33.5 529v3 M33.5 535v3 M33.5 541v3 M33.5 547v3 M33.5 553v3 M33.5 559v3 M33.5 565v3 M33.5 571v3 M33.5 577v3 M33.5 583v3 M33.5 589v3 M33.5 595v3 M33.5 601v3 M33.5 607v3 M33.5 613v3 M33.5 619v3 M33.5 625v3 M33.5 631v3 M33.5 637v3 M33.5 643v3 M33.5 649v3 M33.5 655v3 M33.5 661v3 M201.5 109v3 M201.5 115v3 M201.5 121v3 M201.5 127v3 M201.5 133v3 M201.5 139v3 M201.5 145v3 M201.5 151v3 M201.5 157v3 M201.5 163v3 M201.5 169v3 M201.5 175v3 M201.5 181v3 M201.5 187v3 M201.5 193v3 M201.5 199v3 M201.5 205v3 M201.5 211v3 M201.5 217v3 M201.5 223v3 M201.5 229v3 M201.5 235v3 M201.5 241v3 M201.5 247v3 M201.5 253v3 M201.5 259v3 M201.5 265v3 M201.5 271v3 M201.5 277v3 M201.5 283v3 M201.5 289v3 M201.5 295v3 M201.5 301v3 M201.5 307v3 M201.5 313v3 M201.5 319v3 M201.5 325v3 M201.5 331v3 M201.5 337v3 M201.5 343v3 M201.5 349v3 M201.5 355v3 M201.5 361v3 M201.5 367v3 M201.5 373v3 M201.5 379v3 M201.5 385v3 M201.5 391v3 M201.5 397v3 M201.5 403v3 M201.5 409v3 M201.5 415v3 M201.5 421v3 M201.5 427v3 M201.5 433v3 M201.5 439v3 M201.5 445v3 M201.5 451v3 M201.5 457v3 M201.5 463v3 M201.5 469v3 M201.5 475v3 M201.5 481v3 M201.5 487v3 M201.5 493v3 M201.5 499v3 M201.5 505v3 M201.5 511v3 M201.5 517v3 M201.5 523v3 M201.5 529v3 M201.5 535v3 M201.5 541v3 M201.5 547v3 M201.5 553v3 M201.5 559v3 M201.5 565v3 M201.5 571v3 M201.5 577v3 M201.5 583v3 M201.5 589v3 M201.5 595v3 M201.5 601v3 M201.5 607v3 M201.5 613v3 M201.5 619v3 M201.5 625v3 M201.5 631v3 M201.5 637v3 M201.5 643v3 M201.5 649v3 M201.5 655v3 M201.5 661v3 M393.5 109v3 M393.5 115v3 M393.5 121v3 M393.5 127v3 M393.5 133v3 M393.5 139v3 M393.5 145v3 M393.5 151v3 M393.5 157v3 M393.5 163v3 M393.5 169v3 M393.5 175v3 M393.5 181v3 M393.5 187v3 M393.5 193v3 M393.5 199v3 M393.5 205v3 M393.5 211v3 M393.5 217v3 M393.5 223v3 M393.5 229v3 M393.5 235v3 M393.5 241v3 M393.5 247v3 M393.5 253v3 M393.5 259v3 M393.5 265v3 M393.5 271v3 M393.5 277v3 M393.5 283v3 M393.5 289v3 M393.5 295v3 M393.5 301v3 M393.5 307v3 M393.5 313v3 M393.5 319v3 M393.5 325v3 M393.5 331v3 M393.5 337v3 M393.5 343v3 M393.5 349v3 M393.5 355v3 M393.5 361v3 M393.5 367v3 M393.5 373v3 M393.5 379v3 M393.5 385v3 M393.5 391v3 M393.5 397v3 M393.5 403v3 M393.5 409v3 M393.5 415v3 M393.5 421v3 M393.5 427v3 M393.5 433v3 M393.5 439v3 M393.5 445v3 M393.5 451v3 M393.5 457v3 M393.5 463v3 M393.5 469v3 M393.5 475v3 M393.5 481v3 M393.5 487v3 M393.5 493v3 M393.5 499v3 M393.5 505v3 M393.5 511v3 M393.5 517v3 M393.5 523v3 M393.5 529v3 M393.5 535v3 M393.5 541v3 M393.5 547v3 M393.5 553v3 M393.5 559v3 M393.5 565v3 M393.5 571v3 M393.5 577v3 M393.5 583v3 M393.5 589v3 M393.5 595v3 M393.5 601v3 M393.5 607v3 M393.5 613v3 M393.5 619v3 M393.5 625v3 M393.5 631v3 M393.5 637v3 M393.5 643v3 M393.5 649v3 M393.5 655v3 M393.5 661v3 M561.5 109v3 M561.5 115v3 M561.5 121v3 M561.5 127v3 M561.5 133v3 M561.5 139v3 M561.5 145v3 M561.5 151v3 M561.5 157v3 M561.5 163v3 M561.5 169v3 M561.5 175v3 M561.5 181v3 M561.5 187v3 M561.5 193v3 M561.5 199v3 M561.5 205v3 M561.5 211v3 M561.5 217v3 M561.5 223v3 M561.5 229v3 M561.5 235v3 M561.5 241v3 M561.5 247v3 M561.5 253v3 M561.5 259v3 M561.5 265v3 M561.5 271v3 M561.5 277v3 M561.5 283v3 M561.5 289v3 M561.5 295v3 M561.5 301v3 M561.5 307v3 M561.5 313v3 M561.5 319v3 M561.5 325v3 M561.5 331v3 M561.5 337v3 M561.5 343v3 M561.5 349v3 M561.5 355v3 M561.5 361v3 M561.5 367v3 M561.5 373v3 M561.5 379v3 M561.5 385v3 M561.5 391v3 M561.5 397v3 M561.5 403v3 M561.5 409v3 M561.5 415v3 M561.5 421v3 M561.5 427v3 M561.5 433v3 M561.5 439v3 M561.5 445v3 M561.5 451v3 M561.5 457v3 M561.5 463v3 M561.5 469v3 M561.5 475v3 M561.5 481v3 M561.5 487v3 M561.5 493v3 M561.5 499v3 M561.5 505v3 M561.5 511v3 M561.5 517v3 M561.5 523v3 M561.5 529v3 M561.5 535v3 M561.5 541v3 M561.5 547v3 M561.5 553v3 M561.5 559v3 M561.5 565v3 M561.5 571v3 M561.5 577v3 M561.5 583v3 M561.5 589v3 M561.5 595v3 M561.5 601v3 M561.5 607v3 M561.5 613v3 M561.5 619v3 M561.5 625v3 M561.5 631v3 M561.5 637v3 M561.5 643v3 M561.5 649v3 M561.5 655v3 M561.5 661v3 M729.5 109v3 M729.5 115v3 M729.5 121v3 M729.5 127v3 M729.5 133v3 M729.5 139v3 M729.5 145v3 M729.5 151v3 M729.5 157v3 M729.5 163v3 M729.5 169v3 M729.5 175v3 M729.5 181v3 M729.5 187v3 M729.5 193v3 M729.5 199v3 M729.5 205v3 M729.5 211v3 M729.5 217v3 M729.5 223v3 M729.5 229v3 M729.5 235v3 M729.5 241v3 M729.5 247v3 M729.5 253v3 M729.5 259v3 M729.5 265v3 M729.5 271v3 M729.5 277v3 M729.5 283v3 M729.5 289v3 M729.5 295v3 M729.5 301v3 M729.5 307v3 M729.5 313v3 M729.5 319v3 M729.5 325v3 M729.5 331v3 M729.5 337v3 M729.5 343v3 M729.5 349v3 M729.5 355v3 M729.5 361v3 M729.5 367v3 M729.5 373v3 M729.5 379v3 M729.5 385v3 M729.5 391v3 M729.5 397v3 M729.5 403v3 M729.5 409v3 M729.5 415v3 M729.5 421v3 M729.5 427v3 M729.5 433v3 M729.5 439v3 M729.5 445v3 M729.5 451v3 M729.5 457v3 M729.5 463v3 M729.5 469v3 M729.5 475v3 M729.5 481v3 M729.5 487v3 M729.5 493v3 M729.5 499v3 M729.5 505v3 M729.5 511v3 M729.5 517v3 M729.5 523v3 M729.5 529v3 M729.5 535v3 M729.5 541v3 M729.5 547v3 M729.5 553v3 M729.5 559v3 M729.5 565v3 M729.5 571v3 M729.5 577v3 M729.5 583v3 M729.5 589v3 M729.5 595v3 M729.5 601v3 M729.5 607v3 M729.5 613v3 M729.5 619v3 M729.5 625v3 M729.5 631v3 M729.5 637v3 M729.5 643v3 M729.5 649v3 M729.5 655v3 M729.5 661v3 M905.5 109v3 M905.5 115v3 M905.5 121v3 M905.5 127v3 M905.5 133v3 M905.5 139v3 M905.5 145v3 M905.5 151v3 M905.5 157v3 M905.5 163v3 M905.5 169v3 M905.5 175v3 M905.5 181v3 M905.5 187v3 M905.5 193v3 M905.5 199v3 M905.5 205v3 M905.5 211v3 M905.5 217v3 M905.5 223v3 M905.5 229v3 M905.5 235v3 M905.5 241v3 M905.5 247v3 M905.5 253v3 M905.5 259v3 M905.5 265v3 M905.5 271v3 M905.5 277v3 M905.5 283v3 M905.5 289v3 M905.5 295v3 M905.5 301v3 M905.5 307v3 M905.5 313v3 M905.5 319v3 M905.5 325v3 M905.5 331v3 M905.5 337v3 M905.5 343v3 M905.5 349v3 M905.5 355v3 M905.5 361v3 M905.5 367v3 M905.5 373v3 M905.5 379v3 M905.5 385v3 M905.5 391v3 M905.5 397v3 M905.5 403v3 M905.5 409v3 M905.5 415v3 M905.5 421v3 M905.5 427v3 M905.5 433v3 M905.5 439v3 M905.5 445v3 M905.5 451v3 M905.5 457v3 M905.5 463v3 M905.5 469v3 M905.5 475v3 M905.5 481v3 M905.5 487v3 M905.5 493v3 M905.5 499v3 M905.5 505v3 M905.5 511v3 M905.5 517v3 M905.5 523v3 M905.5 529v3 M905.5 535v3 M905.5 541v3 M905.5 547v3 M905.5 553v3 M905.5 559v3 M905.5 565v3 M905.5 571v3 M905.5 577v3 M905.5 583v3 M905.5 589v3 M905.5 595v3 M905.5 601v3 M905.5 607v3 M905.5 613v3 M905.5 619v3 M905.5 625v3 M905.5 631v3 M905.5 637v3 M905.5 643v3 M905.5 649v3 M905.5 655v3 M905.5 661v3 M1097.5 109v3 M1097.5 115v3 M1097.5 121v3 M1097.5 127v3 M1097.5 133v3 M1097.5 139v3 M1097.5 145v3 M1097.5 151v3 M1097.5 157v3 M1097.5 163v3 M1097.5 169v3 M1097.5 175v3 M1097.5 181v3 M1097.5 187v3 M1097.5 193v3 M1097.5 199v3 M1097.5 205v3 M1097.5 211v3 M1097.5 217v3 M1097.5 223v3 M1097.5 229v3 M1097.5 235v3 M1097.5 241v3 M1097.5 247v3 M1097.5 253v3 M1097.5 259v3 M1097.5 265v3 M1097.5 271v3 M1097.5 277v3 M1097.5 283v3 M1097.5 289v3 M1097.5 295v3 M1097.5 301v3 M1097.5 307v3 M1097.5 313v3 M1097.5 319v3 M1097.5 325v3 M1097.5 331v3 M1097.5 337v3 M1097.5 343v3 M1097.5 349v3 M1097.5 355v3 M1097.5 361v3 M1097.5 367v3 M1097.5 373v3 M1097.5 379v3 M1097.5 385v3 M1097.5 391v3 M1097.5 397v3 M1097.5 403v3 M1097.5 409v3 M1097.5 415v3 M1097.5 421v3 M1097.5 427v3 M1097.5 433v3 M1097.5 439v3 M1097.5 445v3 M1097.5 451v3 M1097.5 457v3 M1097.5 463v3 M1097.5 469v3 M1097.5 475v3 M1097.5 481v3 M1097.5 487v3 M1097.5 493v3 M1097.5 499v3 M1097.5 505v3 M1097.5 511v3 M1097.5 517v3 M1097.5 523v3 M1097.5 529v3 M1097.5 535v3 M1097.5 541v3 M1097.5 547v3 M1097.5 553v3 M1097.5 559v3 M1097.5 565v3 M1097.5 571v3 M1097.5 577v3 M1097.5 583v3 M1097.5 589v3 M1097.5 595v3 M1097.5 601v3 M1097.5 607v3 M1097.5 613v3 M1097.5 619v3 M1097.5 625v3 M1097.5 631v3 M1097.5 637v3 M1097.5 643v3 M1097.5 649v3 M1097.5 655v3 M1097.5 661v3" stroke="#000" stroke-width="1" fill="none"/>
<g fill="#fff"><rect x="14" y="440" width="78" height="9"/><rect x="14" y="483" width="80" height="9"/><rect x="14" y="531" width="104" height="10"/></g>
<g font-family="Liberation Sans" font-size="9.8" fill="#000" shape-rendering="auto"><text x="15.5" y="447" textLength="30.5" lengthAdjust="spacingAndGlyphs">#87468</text><text x="55" y="447" textLength="36.5" lengthAdjust="spacingAndGlyphs">tpiy 0.20</text><text x="15.5" y="490" textLength="78" lengthAdjust="spacingAndGlyphs">#1207794 sell 0.20</text><text x="15.5" y="540" textLength="101" lengthAdjust="spacingAndGlyphs">#1153866 buy limit 0.20</text></g>
<path d="M9 449.5H18 M33 449.5H42 M24 449.5H27 M57 449.5H66 M48 449.5H51 M81 449.5H90 M72 449.5H75 M105 449.5H114 M96 449.5H99 M129 449.5H138 M120 449.5H123 M153 449.5H162 M144 449.5H147 M177 449.5H186 M168 449.5H171 M201 449.5H210 M192 449.5H195 M225 449.5H234 M216 449.5H219 M249 449.5H258 M240 449.5H243 M273 449.5H282 M264 449.5H267 M297 449.5H306 M288 449.5H291 M321 449.5H330 M312 449.5H315 M345 449.5H354 M336 449.5H339 M369 449.5H378 M360 449.5H363 M393 449.5H402 M384 449.5H387 M417 449.5H426 M408 449.5H411 M441 449.5H450 M432 449.5H435 M465 449.5H474 M456 449.5H459 M489 449.5H498 M480 449.5H483 M513 449.5H522 M504 449.5H507 M537 449.5H546 M528 449.5H531 M561 449.5H570 M552 449.5H555 M585 449.5H594 M576 449.5H579 M609 449.5H618 M600 449.5H603 M633 449.5H642 M624 449.5H627 M657 449.5H666 M648 449.5H651 M681 449.5H690 M672 449.5H675 M705 449.5H714 M696 449.5H699 M729 449.5H738 M720 449.5H723 M753 449.5H762 M744 449.5H747 M777 449.5H786 M768 449.5H771 M801 449.5H810 M792 449.5H795 M825 449.5H834 M816 449.5H819 M849 449.5H858 M840 449.5H843 M873 449.5H882 M864 449.5H867 M897 449.5H906 M888 449.5H891 M921 449.5H930 M912 449.5H915 M945 449.5H954 M936 449.5H939 M969 449.5H978 M960 449.5H963 M993 449.5H1002 M984 449.5H987 M1017 449.5H1026 M1008 449.5H1011 M1041 449.5H1050 M1032 449.5H1035 M1065 449.5H1074 M1056 449.5H1059 M1089 449.5H1098 M1080 449.5H1083 M1113 449.5H1122 M1104 449.5H1107 M1137 449.5H1146 M1128 449.5H1131 M1161 449.5H1170 M1152 449.5H1155 M1185 449.5H1194 M1176 449.5H1179 M1209 449.5H1218 M1200 449.5H1203 M1224 449.5H1227" stroke="#FF0000" stroke-width="1" fill="none"/>
<path d="M9 492.5H18 M33 492.5H42 M24 492.5H27 M57 492.5H66 M48 492.5H51 M81 492.5H90 M72 492.5H75 M105 492.5H114 M96 492.5H99 M129 492.5H138 M120 492.5H123 M153 492.5H162 M144 492.5H147 M177 492.5H186 M168 492.5H171 M201 492.5H210 M192 492.5H195 M225 492.5H234 M216 492.5H219 M249 492.5H258 M240 492.5H243 M273 492.5H282 M264 492.5H267 M297 492.5H306 M288 492.5H291 M321 492.5H330 M312 492.5H315 M345 492.5H354 M336 492.5H339 M369 492.5H378 M360 492.5H363 M393 492.5H402 M384 492.5H387 M417 492.5H426 M408 492.5H411 M441 492.5H450 M432 492.5H435 M465 492.5H474 M456 492.5H459 M489 492.5H498 M480 492.5H483 M513 492.5H522 M504 492.5H507 M537 492.5H546 M528 492.5H531 M561 492.5H570 M552 492.5H555 M585 492.5H594 M576 492.5H579 M609 492.5H618 M600 492.5H603 M633 492.5H642 M624 492.5H627 M657 492.5H666 M648 492.5H651 M681 492.5H690 M672 492.5H675 M705 492.5H714 M696 492.5H699 M729 492.5H738 M720 492.5H723 M753 492.5H762 M744 492.5H747 M777 492.5H786 M768 492.5H771 M801 492.5H810 M792 492.5H795 M825 492.5H834 M816 492.5H819 M849 492.5H858 M840 492.5H843 M873 492.5H882 M864 492.5H867 M897 492.5H906 M888 492.5H891 M921 492.5H930 M912 492.5H915 M945 492.5H954 M936 492.5H939 M969 492.5H978 M960 492.5H963 M993 492.5H1002 M984 492.5H987 M1017 492.5H1026 M1008 492.5H1011 M1041 492.5H1050 M1032 492.5H1035 M1065 492.5H1074 M1056 492.5H1059 M1089 492.5H1098 M1080 492.5H1083 M1113 492.5H1122 M1104 492.5H1107 M1137 492.5H1146 M1128 492.5H1131 M1161 492.5H1170 M1152 492.5H1155 M1185 492.5H1194 M1176 492.5H1179 M1209 492.5H1218 M1200 492.5H1203 M1224 492.5H1227" stroke="#00CC00" stroke-width="1" fill="none"/>
<path d="M9 542.5H18 M33 542.5H42 M24 542.5H27 M57 542.5H66 M48 542.5H51 M81 542.5H90 M72 542.5H75 M105 542.5H114 M96 542.5H99 M129 542.5H138 M120 542.5H123 M153 542.5H162 M144 542.5H147 M177 542.5H186 M168 542.5H171 M201 542.5H210 M192 542.5H195 M225 542.5H234 M216 542.5H219 M249 542.5H258 M240 542.5H243 M273 542.5H282 M264 542.5H267 M297 542.5H306 M288 542.5H291 M321 542.5H330 M312 542.5H315 M345 542.5H354 M336 542.5H339 M369 542.5H378 M360 542.5H363 M393 542.5H402 M384 542.5H387 M417 542.5H426 M408 542.5H411 M441 542.5H450 M432 542.5H435 M465 542.5H474 M456 542.5H459 M489 542.5H498 M480 542.5H483 M513 542.5H522 M504 542.5H507 M537 542.5H546 M528 542.5H531 M561 542.5H570 M552 542.5H555 M585 542.5H594 M576 542.5H579 M609 542.5H618 M600 542.5H603 M633 542.5H642 M624 542.5H627 M657 542.5H666 M648 542.5H651 M681 542.5H690 M672 542.5H675 M705 542.5H714 M696 542.5H699 M729 542.5H738 M720 542.5H723 M753 542.5H762 M744 542.5H747 M777 542.5H786 M768 542.5H771 M801 542.5H810 M792 542.5H795 M825 542.5H834 M816 542.5H819 M849 542.5H858 M840 542.5H843 M873 542.5H882 M864 542.5H867 M897 542.5H906 M888 542.5H891 M921 542.5H930 M912 542.5H915 M945 542.5H954 M936 542.5H939 M969 542.5H978 M960 542.5H963 M993 542.5H1002 M984 542.5H987 M1017 542.5H1026 M1008 542.5H1011 M1041 542.5H1050 M1032 542.5H1035 M1065 542.5H1074 M1056 542.5H1059 M1089 542.5H1098 M1080 542.5H1083 M1113 542.5H1122 M1104 542.5H1107 M1137 542.5H1146 M1128 542.5H1131 M1161 542.5H1170 M1152 542.5H1155 M1185 542.5H1194 M1176 542.5H1179 M1209 542.5H1218 M1200 542.5H1203 M1224 542.5H1227" stroke="#00CC00" stroke-width="1" fill="none"/>
<path d="M9 478.5H1229" stroke="#778899" stroke-width="1"/>
<path d="M9.5 497V547 M17.5 503V537 M25.5 513V544 M33.5 487V533 M41.5 459V507 M49.5 405V477 M57.5 405V440 M65.5 391V440 M73.5 379V416 M81.5 343V392 M89.5 334V365 M97.5 326V388 M105.5 364V389 M113.5 308V351 M121.5 321V361 M129.5 244V337 M137.5 246V293 M145.5 277V317 M153.5 278V323 M161.5 290V323 M169.5 308V335 M177.5 304V334 M185.5 317V354 M193.5 326V362 M201.5 288V358 M209.5 300V336 M217.5 298V321 M225.5 278V312 M233.5 281V312 M241.5 265V301 M249.5 274V301 M257.5 271V312 M265.5 265V290 M273.5 254V294 M281.5 236V269 M289.5 231V259 M297.5 188V246 M305.5 174V209 M313.5 173V191 M321.5 149V191 M329.5 137V208 M337.5 177V226 M345.5 199V226 M353.5 216V221 M361.5 200V232 M369.5 222V272 M377.5 250V286 M385.5 246V282 M393.5 263V298 M401.5 251V285 M409.5 240V276 M417.5 238V266 M425.5 243V287 M433.5 267V328 M441.5 309V332 M449.5 320V368 M457.5 318V363 M465.5 311V363 M473.5 317V351 M481.5 296V326 M489.5 284V328 M497.5 282V345 M505.5 336V401 M513.5 376V428 M521.5 404V438 M529.5 397V445 M537.5 428V464 M545.5 423V459 M553.5 427V468 M561.5 414V450 M569.5 424V468 M577.5 427V495 M585.5 457V493 M593.5 438V500 M601.5 432V461 M609.5 415V459 M617.5 418V476 M625.5 454V536 M633.5 508V537 M641.5 507V533 M649.5 513V551 M657.5 520V579 M665.5 552V578 M673.5 524V562 M681.5 513V534 M689.5 525V539 M697.5 530V554 M705.5 527V559 M713.5 526V574 M721.5 517V543 M729.5 512V568 M737.5 491V548 M745.5 500V528 M753.5 507V544 M761.5 516V543 M769.5 535V558 M777.5 491V553 M785.5 454V501 M793.5 466V515 M801.5 507V547 M809.5 531V599 M817.5 574V606 M825.5 578V609 M833.5 570V600 M841.5 546V596 M849.5 563V621 M857.5 599V653 M865.5 607V646 M873.5 577V623 M881.5 575V630 M889.5 587V631 M897.5 576V638 M905.5 571V612 M913.5 521V621 M921.5 522V554 M929.5 502V538 M937.5 494V532 M945.5 513V538 M953.5 471V522 M961.5 463V491 M969.5 478V528 M977.5 473V510" stroke="#000" stroke-width="1" fill="none"/><g fill="#000"><rect x="7" y="499" width="5" height="46"/><rect x="15" y="521" width="5" height="8"/><rect x="23" y="527" width="5" height="16"/><rect x="55" y="412" width="5" height="26"/><rect x="95" y="339" width="5" height="30"/><rect x="103" y="366" width="5" height="15"/><rect x="111" y="339" width="5" height="6"/><rect x="135" y="250" width="5" height="38"/><rect x="143" y="288" width="5" height="21"/><rect x="159" y="291" width="5" height="20"/><rect x="167" y="309" width="5" height="12"/><rect x="175" y="323" width="5" height="1"/><rect x="183" y="323" width="5" height="23"/><rect x="207" y="306" width="5" height="7"/><rect x="231" y="289" width="5" height="4"/><rect x="239" y="292" width="5" height="3"/><rect x="311" y="177" width="5" height="10"/><rect x="327" y="163" width="5" height="39"/><rect x="343" y="200" width="5" height="19"/><rect x="351" y="217" width="5" height="3"/><rect x="359" y="217" width="5" height="9"/><rect x="367" y="224" width="5" height="44"/><rect x="375" y="266" width="5" height="2"/><rect x="383" y="266" width="5" height="12"/><rect x="391" y="277" width="5" height="12"/><rect x="407" y="254" width="5" height="2"/><rect x="423" y="245" width="5" height="40"/><rect x="431" y="280" width="5" height="34"/><rect x="439" y="311" width="5" height="16"/><rect x="447" y="324" width="5" height="31"/><rect x="463" y="325" width="5" height="22"/><rect x="479" y="315" width="5" height="2"/><rect x="495" y="289" width="5" height="55"/><rect x="503" y="338" width="5" height="52"/><rect x="511" y="386" width="5" height="30"/><rect x="519" y="416" width="5" height="4"/><rect x="527" y="418" width="5" height="21"/><rect x="535" y="436" width="5" height="23"/><rect x="559" y="433" width="5" height="12"/><rect x="575" y="429" width="5" height="53"/><rect x="599" y="435" width="5" height="7"/><rect x="615" y="423" width="5" height="49"/><rect x="623" y="470" width="5" height="59"/><rect x="639" y="512" width="5" height="7"/><rect x="647" y="519" width="5" height="24"/><rect x="655" y="541" width="5" height="20"/><rect x="687" y="529" width="5" height="1"/><rect x="703" y="544" width="5" height="12"/><rect x="727" y="533" width="5" height="6"/><rect x="751" y="509" width="5" height="17"/><rect x="759" y="528" width="5" height="13"/><rect x="767" y="541" width="5" height="1"/><rect x="791" y="468" width="5" height="43"/><rect x="799" y="510" width="5" height="25"/><rect x="807" y="534" width="5" height="45"/><rect x="815" y="578" width="5" height="20"/><rect x="831" y="583" width="5" height="4"/><rect x="847" y="564" width="5" height="39"/><rect x="855" y="603" width="5" height="43"/><rect x="879" y="599" width="5" height="30"/><rect x="895" y="596" width="5" height="16"/><rect x="903" y="603" width="5" height="8"/><rect x="919" y="529" width="5" height="8"/><rect x="935" y="513" width="5" height="1"/><rect x="943" y="514" width="5" height="5"/><rect x="959" y="477" width="5" height="5"/><rect x="967" y="481" width="5" height="23"/></g><g fill="#fff" stroke="#000" stroke-width="1"><rect x="31.5" y="504.5" width="4" height="16"/><rect x="39.5" y="464.5" width="4" height="41"/><rect x="47.5" y="413.5" width="4" height="51"/><rect x="63.5" y="408.5" width="4" height="29"/><rect x="71.5" y="387.5" width="4" height="11"/><rect x="79.5" y="346.5" width="4" height="41"/><rect x="87.5" y="339.5" width="4" height="7"/><rect x="119.5" y="326.5" width="4" height="18"/><rect x="127.5" y="250.5" width="4" height="77"/><rect x="151.5" y="291.5" width="4" height="29"/><rect x="191.5" y="344.5" width="4" height="4"/><rect x="199.5" y="306.5" width="4" height="41"/><rect x="215.5" y="308.5" width="4" height="4"/><rect x="223.5" y="289.5" width="4" height="19"/><rect x="247.5" y="284.5" width="4" height="10"/><rect x="255.5" y="281.5" width="4" height="3"/><rect x="263.5" y="273.5" width="4" height="8"/><rect x="271.5" y="263.5" width="4" height="30"/><rect x="279.5" y="245.5" width="4" height="18"/><rect x="287.5" y="233.5" width="4" height="14"/><rect x="295.5" y="194.5" width="4" height="40"/><rect x="303.5" y="175.5" width="4" height="19"/><rect x="319.5" y="162.5" width="4" height="24"/><rect x="335.5" y="200.5" width="4" height="3"/><rect x="399.5" y="254.5" width="4" height="25"/><rect x="415.5" y="245.5" width="4" height="10"/><rect x="455.5" y="325.5" width="4" height="29"/><rect x="471.5" y="320.5" width="4" height="26"/><rect x="487.5" y="290.5" width="4" height="27"/><rect x="543.5" y="447.5" width="4" height="9"/><rect x="551.5" y="443.5" width="4" height="2"/><rect x="567.5" y="429.5" width="4" height="15"/><rect x="583.5" y="464.5" width="4" height="16"/><rect x="591.5" y="444.5" width="4" height="20"/><rect x="607.5" y="422.5" width="4" height="19"/><rect x="631.5" y="511.5" width="4" height="12"/><rect x="663.5" y="556.5" width="4" height="3"/><rect x="671.5" y="532.5" width="4" height="25"/><rect x="679.5" y="526.5" width="4" height="5"/><rect x="695.5" y="543.5" width="4" height="5"/><rect x="711.5" y="539.5" width="4" height="19"/><rect x="719.5" y="528.5" width="4" height="12"/><rect x="735.5" y="521.5" width="4" height="15"/><rect x="743.5" y="509.5" width="4" height="4"/><rect x="775.5" y="496.5" width="4" height="49"/><rect x="783.5" y="468.5" width="4" height="27"/><rect x="823.5" y="583.5" width="4" height="17"/><rect x="839.5" y="563.5" width="4" height="22"/><rect x="863.5" y="617.5" width="4" height="21"/><rect x="871.5" y="599.5" width="4" height="18"/><rect x="887.5" y="591.5" width="4" height="26"/><rect x="911.5" y="529.5" width="4" height="81"/><rect x="927.5" y="513.5" width="4" height="23"/><rect x="951.5" y="475.5" width="4" height="43"/><rect x="975.5" y="478.5" width="4" height="26"/></g>
</g>
<g clip-path="url(#cp)">
<g transform="translate(129 235)"><path d="M-5.5 4.2L0 -4.2" stroke="#DC1438" stroke-width="2.1" fill="none"/><path d="M-0.3 -3.5L-0.3 2.5" stroke="#DC1438" stroke-width="1.1" fill="none"/><path d="M-2.5 2.3H3.2" stroke="#DC1438" stroke-width="1.3" fill="none"/><path d="M0.5 -3.8L6 4.6M-6 4.6L-5.5 4" stroke="#DC1438" stroke-width="1.25" fill="none" stroke-dasharray="1.6 0.8"/></g><g transform="translate(201 278)"><path d="M-5.5 4.2L0 -4.2" stroke="#DC1438" stroke-width="2.1" fill="none"/><path d="M-0.3 -3.5L-0.3 2.5" stroke="#DC1438" stroke-width="1.1" fill="none"/><path d="M-2.5 2.3H3.2" stroke="#DC1438" stroke-width="1.3" fill="none"/><path d="M0.5 -3.8L6 4.6M-6 4.6L-5.5 4" stroke="#DC1438" stroke-width="1.25" fill="none" stroke-dasharray="1.6 0.8"/></g><g transform="translate(241 255)"><path d="M-5.5 4.2L0 -4.2" stroke="#DC1438" stroke-width="2.1" fill="none"/><path d="M-0.3 -3.5L-0.3 2.5" stroke="#DC1438" stroke-width="1.1" fill="none"/><path d="M-2.5 2.3H3.2" stroke="#DC1438" stroke-width="1.3" fill="none"/><path d="M0.5 -3.8L6 4.6M-6 4.6L-5.5 4" stroke="#DC1438" stroke-width="1.25" fill="none" stroke-dasharray="1.6 0.8"/></g><g transform="translate(329 126)"><path d="M-5.5 4.2L0 -4.2" stroke="#DC1438" stroke-width="2.1" fill="none"/><path d="M-0.3 -3.5L-0.3 2.5" stroke="#DC1438" stroke-width="1.1" fill="none"/><path d="M-2.5 2.3H3.2" stroke="#DC1438" stroke-width="1.3" fill="none"/><path d="M0.5 -3.8L6 4.6M-6 4.6L-5.5 4" stroke="#DC1438" stroke-width="1.25" fill="none" stroke-dasharray="1.6 0.8"/></g><g transform="translate(417 226)"><path d="M-5.5 4.2L0 -4.2" stroke="#DC1438" stroke-width="2.1" fill="none"/><path d="M-0.3 -3.5L-0.3 2.5" stroke="#DC1438" stroke-width="1.1" fill="none"/><path d="M-2.5 2.3H3.2" stroke="#DC1438" stroke-width="1.3" fill="none"/><path d="M0.5 -3.8L6 4.6M-6 4.6L-5.5 4" stroke="#DC1438" stroke-width="1.25" fill="none" stroke-dasharray="1.6 0.8"/></g><g transform="translate(497 272)"><path d="M-5.5 4.2L0 -4.2" stroke="#DC1438" stroke-width="2.1" fill="none"/><path d="M-0.3 -3.5L-0.3 2.5" stroke="#DC1438" stroke-width="1.1" fill="none"/><path d="M-2.5 2.3H3.2" stroke="#DC1438" stroke-width="1.3" fill="none"/><path d="M0.5 -3.8L6 4.6M-6 4.6L-5.5 4" stroke="#DC1438" stroke-width="1.25" fill="none" stroke-dasharray="1.6 0.8"/></g><g transform="translate(561 405)"><path d="M-5.5 4.2L0 -4.2" stroke="#DC1438" stroke-width="2.1" fill="none"/><path d="M-0.3 -3.5L-0.3 2.5" stroke="#DC1438" stroke-width="1.1" fill="none"/><path d="M-2.5 2.3H3.2" stroke="#DC1438" stroke-width="1.3" fill="none"/><path d="M0.5 -3.8L6 4.6M-6 4.6L-5.5 4" stroke="#DC1438" stroke-width="1.25" fill="none" stroke-dasharray="1.6 0.8"/></g><g transform="translate(609 405)"><path d="M-5.5 4.2L0 -4.2" stroke="#DC1438" stroke-width="2.1" fill="none"/><path d="M-0.3 -3.5L-0.3 2.5" stroke="#DC1438" stroke-width="1.1" fill="none"/><path d="M-2.5 2.3H3.2" stroke="#DC1438" stroke-width="1.3" fill="none"/><path d="M0.5 -3.8L6 4.6M-6 4.6L-5.5 4" stroke="#DC1438" stroke-width="1.25" fill="none" stroke-dasharray="1.6 0.8"/></g><g transform="translate(681 505)"><path d="M-5.5 4.2L0 -4.2" stroke="#DC1438" stroke-width="2.1" fill="none"/><path d="M-0.3 -3.5L-0.3 2.5" stroke="#DC1438" stroke-width="1.1" fill="none"/><path d="M-2.5 2.3H3.2" stroke="#DC1438" stroke-width="1.3" fill="none"/><path d="M0.5 -3.8L6 4.6M-6 4.6L-5.5 4" stroke="#DC1438" stroke-width="1.25" fill="none" stroke-dasharray="1.6 0.8"/></g><g transform="translate(737 482)"><path d="M-5.5 4.2L0 -4.2" stroke="#DC1438" stroke-width="2.1" fill="none"/><path d="M-0.3 -3.5L-0.3 2.5" stroke="#DC1438" stroke-width="1.1" fill="none"/><path d="M-2.5 2.3H3.2" stroke="#DC1438" stroke-width="1.3" fill="none"/><path d="M0.5 -3.8L6 4.6M-6 4.6L-5.5 4" stroke="#DC1438" stroke-width="1.25" fill="none" stroke-dasharray="1.6 0.8"/></g><g transform="translate(785 444)"><path d="M-5.5 4.2L0 -4.2" stroke="#DC1438" stroke-width="2.1" fill="none"/><path d="M-0.3 -3.5L-0.3 2.5" stroke="#DC1438" stroke-width="1.1" fill="none"/><path d="M-2.5 2.3H3.2" stroke="#DC1438" stroke-width="1.3" fill="none"/><path d="M0.5 -3.8L6 4.6M-6 4.6L-5.5 4" stroke="#DC1438" stroke-width="1.25" fill="none" stroke-dasharray="1.6 0.8"/></g><g transform="translate(841 536)"><path d="M-5.5 4.2L0 -4.2" stroke="#DC1438" stroke-width="2.1" fill="none"/><path d="M-0.3 -3.5L-0.3 2.5" stroke="#DC1438" stroke-width="1.1" fill="none"/><path d="M-2.5 2.3H3.2" stroke="#DC1438" stroke-width="1.3" fill="none"/><path d="M0.5 -3.8L6 4.6M-6 4.6L-5.5 4" stroke="#DC1438" stroke-width="1.25" fill="none" stroke-dasharray="1.6 0.8"/></g><g transform="translate(881 567)"><path d="M-5.5 4.2L0 -4.2" stroke="#DC1438" stroke-width="2.1" fill="none"/><path d="M-0.3 -3.5L-0.3 2.5" stroke="#DC1438" stroke-width="1.1" fill="none"/><path d="M-2.5 2.3H3.2" stroke="#DC1438" stroke-width="1.3" fill="none"/><path d="M0.5 -3.8L6 4.6M-6 4.6L-5.5 4" stroke="#DC1438" stroke-width="1.25" fill="none" stroke-dasharray="1.6 0.8"/></g><g transform="translate(961 452)"><path d="M-5.5 4.2L0 -4.2" stroke="#DC1438" stroke-width="2.1" fill="none"/><path d="M-0.3 -3.5L-0.3 2.5" stroke="#DC1438" stroke-width="1.1" fill="none"/><path d="M-2.5 2.3H3.2" stroke="#DC1438" stroke-width="1.3" fill="none"/><path d="M0.5 -3.8L6 4.6M-6 4.6L-5.5 4" stroke="#DC1438" stroke-width="1.25" fill="none" stroke-dasharray="1.6 0.8"/></g><g transform="translate(25 552) rotate(180)"><path d="M-5.5 4.2L0 -4.2" stroke="#DC1438" stroke-width="2.1" fill="none"/><path d="M-0.3 -3.5L-0.3 2.5" stroke="#DC1438" stroke-width="1.1" fill="none"/><path d="M-2.5 2.3H3.2" stroke="#DC1438" stroke-width="1.3" fill="none"/><path d="M0.5 -3.8L6 4.6M-6 4.6L-5.5 4" stroke="#DC1438" stroke-width="1.25" fill="none" stroke-dasharray="1.6 0.8"/></g><g transform="translate(105 396) rotate(180)"><path d="M-5.5 4.2L0 -4.2" stroke="#DC1438" stroke-width="2.1" fill="none"/><path d="M-0.3 -3.5L-0.3 2.5" stroke="#DC1438" stroke-width="1.1" fill="none"/><path d="M-2.5 2.3H3.2" stroke="#DC1438" stroke-width="1.3" fill="none"/><path d="M0.5 -3.8L6 4.6M-6 4.6L-5.5 4" stroke="#DC1438" stroke-width="1.25" fill="none" stroke-dasharray="1.6 0.8"/></g><g transform="translate(193 369) rotate(180)"><path d="M-5.5 4.2L0 -4.2" stroke="#DC1438" stroke-width="2.1" fill="none"/><path d="M-0.3 -3.5L-0.3 2.5" stroke="#DC1438" stroke-width="1.1" fill="none"/><path d="M-2.5 2.3H3.2" stroke="#DC1438" stroke-width="1.3" fill="none"/><path d="M0.5 -3.8L6 4.6M-6 4.6L-5.5 4" stroke="#DC1438" stroke-width="1.25" fill="none" stroke-dasharray="1.6 0.8"/></g><g transform="translate(257 317) rotate(180)"><path d="M-5.5 4.2L0 -4.2" stroke="#DC1438" stroke-width="2.1" fill="none"/><path d="M-0.3 -3.5L-0.3 2.5" stroke="#DC1438" stroke-width="1.1" fill="none"/><path d="M-2.5 2.3H3.2" stroke="#DC1438" stroke-width="1.3" fill="none"/><path d="M0.5 -3.8L6 4.6M-6 4.6L-5.5 4" stroke="#DC1438" stroke-width="1.25" fill="none" stroke-dasharray="1.6 0.8"/></g><g transform="translate(337 231) rotate(180)"><path d="M-5.5 4.2L0 -4.2" stroke="#DC1438" stroke-width="2.1" fill="none"/><path d="M-0.3 -3.5L-0.3 2.5" stroke="#DC1438" stroke-width="1.1" fill="none"/><path d="M-2.5 2.3H3.2" stroke="#DC1438" stroke-width="1.3" fill="none"/><path d="M0.5 -3.8L6 4.6M-6 4.6L-5.5 4" stroke="#DC1438" stroke-width="1.25" fill="none" stroke-dasharray="1.6 0.8"/></g><g transform="translate(393 302.5) rotate(180)"><path d="M-5.5 4.2L0 -4.2" stroke="#DC1438" stroke-width="2.1" fill="none"/><path d="M-0.3 -3.5L-0.3 2.5" stroke="#DC1438" stroke-width="1.1" fill="none"/><path d="M-2.5 2.3H3.2" stroke="#DC1438" stroke-width="1.3" fill="none"/><path d="M0.5 -3.8L6 4.6M-6 4.6L-5.5 4" stroke="#DC1438" stroke-width="1.25" fill="none" stroke-dasharray="1.6 0.8"/></g><g transform="translate(449 373) rotate(180)"><path d="M-5.5 4.2L0 -4.2" stroke="#DC1438" stroke-width="2.1" fill="none"/><path d="M-0.3 -3.5L-0.3 2.5" stroke="#DC1438" stroke-width="1.1" fill="none"/><path d="M-2.5 2.3H3.2" stroke="#DC1438" stroke-width="1.3" fill="none"/><path d="M0.5 -3.8L6 4.6M-6 4.6L-5.5 4" stroke="#DC1438" stroke-width="1.25" fill="none" stroke-dasharray="1.6 0.8"/></g><g transform="translate(553 475) rotate(180)"><path d="M-5.5 4.2L0 -4.2" stroke="#DC1438" stroke-width="2.1" fill="none"/><path d="M-0.3 -3.5L-0.3 2.5" stroke="#DC1438" stroke-width="1.1" fill="none"/><path d="M-2.5 2.3H3.2" stroke="#DC1438" stroke-width="1.3" fill="none"/><path d="M0.5 -3.8L6 4.6M-6 4.6L-5.5 4" stroke="#DC1438" stroke-width="1.25" fill="none" stroke-dasharray="1.6 0.8"/></g><g transform="translate(593 506) rotate(180)"><path d="M-5.5 4.2L0 -4.2" stroke="#DC1438" stroke-width="2.1" fill="none"/><path d="M-0.3 -3.5L-0.3 2.5" stroke="#DC1438" stroke-width="1.1" fill="none"/><path d="M-2.5 2.3H3.2" stroke="#DC1438" stroke-width="1.3" fill="none"/><path d="M0.5 -3.8L6 4.6M-6 4.6L-5.5 4" stroke="#DC1438" stroke-width="1.25" fill="none" stroke-dasharray="1.6 0.8"/></g><g transform="translate(657 586.6) rotate(180)"><path d="M-5.5 4.2L0 -4.2" stroke="#DC1438" stroke-width="2.1" fill="none"/><path d="M-0.3 -3.5L-0.3 2.5" stroke="#DC1438" stroke-width="1.1" fill="none"/><path d="M-2.5 2.3H3.2" stroke="#DC1438" stroke-width="1.3" fill="none"/><path d="M0.5 -3.8L6 4.6M-6 4.6L-5.5 4" stroke="#DC1438" stroke-width="1.25" fill="none" stroke-dasharray="1.6 0.8"/></g><g transform="translate(713 580) rotate(180)"><path d="M-5.5 4.2L0 -4.2" stroke="#DC1438" stroke-width="2.1" fill="none"/><path d="M-0.3 -3.5L-0.3 2.5" stroke="#DC1438" stroke-width="1.1" fill="none"/><path d="M-2.5 2.3H3.2" stroke="#DC1438" stroke-width="1.3" fill="none"/><path d="M0.5 -3.8L6 4.6M-6 4.6L-5.5 4" stroke="#DC1438" stroke-width="1.25" fill="none" stroke-dasharray="1.6 0.8"/></g><g transform="translate(769 565) rotate(180)"><path d="M-5.5 4.2L0 -4.2" stroke="#DC1438" stroke-width="2.1" fill="none"/><path d="M-0.3 -3.5L-0.3 2.5" stroke="#DC1438" stroke-width="1.1" fill="none"/><path d="M-2.5 2.3H3.2" stroke="#DC1438" stroke-width="1.3" fill="none"/><path d="M0.5 -3.8L6 4.6M-6 4.6L-5.5 4" stroke="#DC1438" stroke-width="1.25" fill="none" stroke-dasharray="1.6 0.8"/></g><g transform="translate(825 617) rotate(180)"><path d="M-5.5 4.2L0 -4.2" stroke="#DC1438" stroke-width="2.1" fill="none"/><path d="M-0.3 -3.5L-0.3 2.5" stroke="#DC1438" stroke-width="1.1" fill="none"/><path d="M-2.5 2.3H3.2" stroke="#DC1438" stroke-width="1.3" fill="none"/><path d="M0.5 -3.8L6 4.6M-6 4.6L-5.5 4" stroke="#DC1438" stroke-width="1.25" fill="none" stroke-dasharray="1.6 0.8"/></g><g transform="translate(857 661.6) rotate(180)"><path d="M-5.5 4.2L0 -4.2" stroke="#DC1438" stroke-width="2.1" fill="none"/><path d="M-0.3 -3.5L-0.3 2.5" stroke="#DC1438" stroke-width="1.1" fill="none"/><path d="M-2.5 2.3H3.2" stroke="#DC1438" stroke-width="1.3" fill="none"/><path d="M0.5 -3.8L6 4.6M-6 4.6L-5.5 4" stroke="#DC1438" stroke-width="1.25" fill="none" stroke-dasharray="1.6 0.8"/></g><g transform="translate(897 645) rotate(180)"><path d="M-5.5 4.2L0 -4.2" stroke="#DC1438" stroke-width="2.1" fill="none"/><path d="M-0.3 -3.5L-0.3 2.5" stroke="#DC1438" stroke-width="1.1" fill="none"/><path d="M-2.5 2.3H3.2" stroke="#DC1438" stroke-width="1.3" fill="none"/><path d="M0.5 -3.8L6 4.6M-6 4.6L-5.5 4" stroke="#DC1438" stroke-width="1.25" fill="none" stroke-dasharray="1.6 0.8"/></g><g transform="translate(945 545) rotate(180)"><path d="M-5.5 4.2L0 -4.2" stroke="#DC1438" stroke-width="2.1" fill="none"/><path d="M-0.3 -3.5L-0.3 2.5" stroke="#DC1438" stroke-width="1.1" fill="none"/><path d="M-2.5 2.3H3.2" stroke="#DC1438" stroke-width="1.3" fill="none"/><path d="M0.5 -3.8L6 4.6M-6 4.6L-5.5 4" stroke="#DC1438" stroke-width="1.25" fill="none" stroke-dasharray="1.6 0.8"/></g>
<polyline points="8,505 25,543.5 329,137 657.5,578 785,454.5 857.5,653.5 961,463" fill="none" stroke="#FF0000" stroke-width="2" stroke-linejoin="miter"/>
<path d="M8 465.8C13.4 466.5 30.2 469.6 40.7 469.9C51.2 470.2 63.4 469.5 71.2 467.8C79.0 466.1 81.7 462.6 87.5 459.7C93.3 456.8 100.0 455.1 105.8 450.5C111.5 445.9 116.6 439.3 122 432.2C127.4 425.1 132.6 416.8 138.3 407.8C144.0 398.9 151.1 386.5 156.1 378.5C161.1 370.5 163.9 365.7 168.4 360C172.9 354.3 179.1 347.6 183.2 344.1C187.3 340.6 189.9 341.2 193 339.2C196.1 337.1 197.5 334.7 201.6 331.8C205.7 328.9 212.5 324.4 217.6 322C222.7 319.6 228.1 319.2 232.4 317.7C236.7 316.1 240.3 314.5 243.4 312.7C246.5 310.9 247.9 308.2 250.8 306.6C253.7 305.0 257.7 303.8 260.6 302.9C263.5 302.0 266.1 301.2 268 301.1C269.9 301.0 269.6 302.6 271.7 302.3C273.8 302.0 276.4 301.0 280.3 299.2C284.2 297.4 290.8 294.6 295.3 291.6C299.8 288.6 302.9 285.5 307.3 281.2C311.7 276.9 316.6 271.1 321.5 265.9C326.4 260.7 332.1 253.9 336.8 250C341.6 246.1 345.8 244.8 350 242.4C354.2 240.0 358.6 236.8 362 235.3C365.4 233.9 367.7 234.3 370.7 233.7C373.7 233.1 376.4 231.7 380 231.5C383.6 231.3 388.3 233.0 392.3 232.8C396.3 232.6 399.7 231.0 403.8 230.3C407.9 229.6 412.8 228.7 416.9 228.7C421.0 228.7 425.1 229.2 428.4 230.3C431.7 231.4 433.0 231.5 436.6 235.2C440.2 238.9 446.5 248.4 450 252.5C453.5 256.6 455.3 257.4 457.7 260C460.1 262.6 460.5 264.4 464.3 268.2C468.1 272.0 476.6 280.0 480.7 283C484.8 286.0 484.8 282.8 488.9 286.2C493.0 289.6 498.9 296.8 505.2 303.4C511.5 310.0 520.8 319.2 526.6 325.6C532.4 332.0 536.2 337.4 540 342C543.8 346.6 545.8 348.4 549.2 353C552.7 357.6 555.2 362.8 560.7 369.3C566.2 375.9 576.8 387.4 582 392.3C587.2 397.2 588.5 396.3 591.8 398.9C595.1 401.5 598.9 405.9 601.6 407.9C604.3 409.9 605.1 408.5 608.2 411.1C611.3 413.7 616.8 419.3 620 423.4C623.2 427.5 624.3 430.7 627.6 435.5C630.9 440.3 635.9 447.5 639.6 452C643.3 456.5 644.5 457.3 650 462.6C655.5 467.9 666.3 478.9 672.6 483.6C678.9 488.3 683.0 488.4 687.6 491C692.2 493.6 695.8 496.0 700 499C704.2 502.0 707.5 505.8 713 509C718.5 512.2 726.8 515.3 732.8 518.5C738.8 521.7 743.2 525.8 749.2 528.4C755.2 531.0 762.4 533.7 768.9 534.1C775.4 534.5 783.0 531.9 788.5 530.8C794.0 529.7 797.6 527.7 801.6 527.5C805.6 527.3 808.2 528.3 812.8 529.8C817.4 531.3 823.2 534.3 829.2 536.4C835.2 538.5 843.4 539.6 848.9 542.1C854.4 544.6 857.9 548.9 862 551.1C866.1 553.3 869.3 552.6 873.4 555.2C877.5 557.8 882.2 563.6 886.6 566.7C891.0 569.8 895.6 572.6 900 574C904.4 575.4 907.8 574.2 913 575.2C918.2 576.2 925.6 578.9 931 579.7C936.4 580.5 940.7 581.6 945.5 579.9C950.3 578.2 954.5 573.4 959.7 569.5C965.0 565.6 974.1 558.5 977 556.3" fill="none" stroke="#0000FF" stroke-width="3" stroke-linejoin="round"/>
<path d="M9 454H1229" stroke="#0000CC" stroke-width="2" shape-rendering="crispEdges"/>
<polyline points="969,453.5 1018,536 1113,372.5" fill="none" stroke="#000" stroke-width="2"/>
<path d="M1041.5 540.5L1051.5 550.5H1045.5V565H1037.5V550.5H1031.5Z" fill="none" stroke="#FF0000" stroke-width="1.6"/>
</g>
<rect x="8.5" y="109.5" width="1221" height="558" fill="none" stroke="#000" stroke-width="1" shape-rendering="crispEdges"/>
<path d="M1230 136.5h2 M1230 169.5h2 M1230 202.5h2 M1230 235.5h2 M1230 268.5h2 M1230 301.5h2 M1230 334.5h2 M1230 367.5h2 M1230 400.5h2 M1230 433.5h2 M1230 466.5h2 M1230 499.5h2 M1230 532.5h2 M1230 565.5h2 M1230 598.5h2 M1230 631.5h2 M1230 664.5h2 M9.5 668v3 M73.5 668v3 M137.5 668v3 M201.5 668v3 M265.5 668v3 M329.5 668v3 M393.5 668v3 M457.5 668v3 M521.5 668v3 M585.5 668v3 M649.5 668v3 M713.5 668v3 M777.5 668v3 M841.5 668v3 M905.5 668v3 M969.5 668v3" stroke="#000" stroke-width="1" shape-rendering="crispEdges"/>
<path d="M979 110H988L983.5 115Z" fill="#778899"/>
</svg>
<div class="pl" style="top:129px">0.97580</div>
<div class="pl" style="top:162px">0.96880</div>
<div class="pl" style="top:195px">0.96180</div>
<div class="pl" style="top:228px">0.95480</div>
<div class="pl" style="top:261px">0.94780</div>
<div class="pl" style="top:294px">0.94080</div>
<div class="pl" style="top:327px">0.93380</div>
<div class="pl" style="top:360px">0.92680</div>
<div class="pl" style="top:393px">0.91980</div>
<div class="pl" style="top:426px">0.91280</div>
<div class="pl" style="top:459px">0.90580</div>
<div class="pl" style="top:492px">0.89880</div>
<div class="pl" style="top:525px">0.89180</div>
<div class="pl" style="top:558px">0.88480</div>
<div class="pl" style="top:591px">0.87780</div>
<div class="pl" style="top:624px">0.87080</div>
<div class="pl" style="top:657px">0.86380</div>
<div class="pl pb" style="top:448px;background:#0000CC">0.90832</div>
<div class="pl pb" style="top:472px;background:#000">0.90313</div>
<div class="dl" style="left:8px">28 Aug 2013</div>
<div class="dl" style="left:72px">9 Sep 2013</div>
<div class="dl" style="left:136px">19 Sep 2013</div>
<div class="dl" style="left:200px">1 Oct 2013</div>
<div class="dl" style="left:264px">11 Oct 2013</div>
<div class="dl" style="left:328px">23 Oct 2013</div>
<div class="dl" style="left:392px">1 Nov 2013</div>
<div class="dl" style="left:456px">13 Nov 2013</div>
<div class="dl" style="left:520px">25 Nov 2013</div>
<div class="dl" style="left:584px">5 Dec 2013</div>
<div class="dl" style="left:648px">17 Dec 2013</div>
<div class="dl" style="left:712px">30 Dec 2013</div>
<div class="dl" style="left:776px">10 Jan 2014</div>
<div class="dl" style="left:840px">22 Jan 2014</div>
<div class="dl" style="left:904px">3 Feb 2014</div>
<div class="dl" style="left:968px">13 Feb 2014</div>
<div class="abs" style="left:12px;top:115px;width:0;height:0;border-left:4px solid transparent;border-right:4px solid transparent;border-top:5px solid #000"></div>
<div class="abs" style="left:21px;top:111px;padding:0 2px;background:#fff;font-size:9.8px;line-height:12px;white-space:nowrap">AUDUSD,Daily</div><div class="abs" style="left:89px;top:111px;padding:0 2px 0 7px;background:#fff;font-size:9.8px;line-height:12px;white-space:nowrap;letter-spacing:-0.33px">0.89773 0.90431 0.89658 0.90313</div>

<div class="abs" style="left:988px;top:547px;font-size:20px;letter-spacing:1.2px;line-height:26px;color:#0000FF;-webkit-text-stroke:0.5px #0000FF;white-space:nowrap">тест</div>

<!-- tabs -->
<div class="abs" style="left:4px;top:685px;width:1270px;height:1px;background:#EEEEEE"></div>
<div class="abs" style="left:4px;top:687px;width:1270px;height:1px;background:#000"></div>
<div class="abs" style="left:4px;top:688px;width:1270px;height:19px;background:#E0E0E0"></div>
<div class="abs" style="left:5px;top:688px;width:1px;height:18px;background:#7A7468"></div>
<div class="abs" style="left:260px;top:687px;width:92px;height:19px;background:#fff;border:1px solid #000;border-top:none"></div>
<div class="tab" style="left:17px;color:#6E6A5E">EURUSD,Daily</div>
<div class="tab" style="left:107px;color:#6E6A5E">GBPUSD,Daily</div>
<div class="tab" style="left:194px;color:#6E6A5E">GBPJPY,H1</div>
<div class="tab" style="left:272px;color:#000">AUDUSD,Daily</div>
<div class="tab" style="left:362px;color:#6E6A5E">USDJPY,H1</div>
<div class="tab" style="left:438px;color:#6E6A5E">EURJPY,H4</div>
<div class="tab" style="left:515px;color:#6E6A5E">NZDUSD,M15</div>
<div class="tab" style="left:602px;color:#6E6A5E">GBPCHF,Daily</div>
<div class="tab" style="left:690px;color:#6E6A5E">XAUUSD,H4</div>
<div class="tab" style="left:770px;color:#6E6A5E">USDCAD,H1</div>
<div class="tab" style="left:851px;color:#6E6A5E">EURGBP,H4</div>
<div class="tab" style="left:930px;color:#6E6A5E">USDCHF,H4</div>
<div class="tab" style="left:1010px;color:#6E6A5E">EURCHF,H4</div>
<div class="tab" style="left:1090px;color:#6E6A5E">AUDNZD,H4</div>
<div class="tsep" style="left:96px"></div>
<div class="tsep" style="left:184px"></div>
<div class="tsep" style="left:428px"></div>
<div class="tsep" style="left:504px"></div>
<div class="tsep" style="left:592px"></div>
<div class="tsep" style="left:680px"></div>
<div class="tsep" style="left:760px"></div>
<div class="tsep" style="left:840px"></div>
<div class="tsep" style="left:920px"></div>
<div class="tsep" style="left:1000px"></div>
<div class="tsep" style="left:1080px"></div>
<div class="tsep" style="left:1160px"></div>
<svg class="abs" style="left:1243px;top:691px" width="30" height="12"><path d="M8 2L3 6L8 10Z M22 2L27 6L22 10Z" fill="#9A9A9A"/></svg>
<div class="abs" style="left:4px;top:707px;width:1270px;height:1px;background:#fff"></div>
<div class="abs" style="left:4px;top:708px;width:1270px;height:20px;background:#E0E0E0"></div>
<div class="abs" style="left:6px;top:712px;font-size:10.9px;line-height:14px;white-space:nowrap">Для справки, нажмите F1</div>
<div class="ssep" style="left:554px"></div>
<div class="ssep" style="left:662px"></div>
<div class="ssep" style="left:764px"></div>
<div class="ssep" style="left:836px"></div>
<div class="ssep" style="left:907px"></div>
<div class="ssep" style="left:976px"></div>
<div class="ssep" style="left:1046px"></div>
<div class="ssep" style="left:1113px"></div>
<svg class="abs" style="left:1118px;top:713px" width="25" height="13" shape-rendering="crispEdges"><rect x="0" y="0" width="2" height="9" fill="#4A7800"/><rect x="0" y="10" width="2" height="2" fill="#8A0000"/><rect x="3" y="0" width="2" height="8" fill="#4A7800"/><rect x="3" y="9" width="2" height="3" fill="#8A0000"/><rect x="6" y="0" width="2" height="7" fill="#4A7800"/><rect x="6" y="8" width="2" height="4" fill="#8A0000"/><rect x="9" y="0" width="2" height="6" fill="#4A7800"/><rect x="9" y="7" width="2" height="5" fill="#8A0000"/><rect x="12" y="0" width="2" height="5" fill="#4A7800"/><rect x="12" y="6" width="2" height="6" fill="#8A0000"/><rect x="15" y="0" width="2" height="4" fill="#4A7800"/><rect x="15" y="5" width="2" height="7" fill="#8A0000"/><rect x="18" y="0" width="2" height="3" fill="#4A7800"/><rect x="18" y="4" width="2" height="8" fill="#8A0000"/><rect x="21" y="0" width="2" height="2" fill="#4A7800"/><rect x="21" y="3" width="2" height="9" fill="#8A0000"/></svg>
<div class="abs" style="left:1171px;top:712px;font-size:10.9px;line-height:14px;white-space:nowrap">33/0 kb</div>
<svg class="abs" style="left:1258px;top:712px" width="16" height="16"><path d="M16 0L0 16M16 4L4 16M16 8L8 16M16 12L12 16" stroke="#909090" stroke-width="1.2"/><path d="M16 1.5L1.5 16M16 5.5L5.5 16M16 9.5L9.5 16M16 13.5L13.5 16" stroke="#fff" stroke-width="1"/></svg>
<div class="abs" style="left:0;top:728px;width:1278px;height:4px;background:linear-gradient(#000 0,#111 2px,#606060 2px,#606060 3px,#202020 3px)"></div>
<div class="abs" style="left:1274px;top:30px;width:4px;height:702px;background:linear-gradient(90deg,#000 0,#202020 1px,#202020 2px,#606060 2px,#606060 3px,#303030 3px)"></div>
<div class="abs" style="left:0;top:30px;width:4px;height:702px;background:linear-gradient(90deg,#000 0,#000 1px,#505050 1px,#505050 2px,#2A2A2A 2px,#2A2A2A 3px,#000 3px)"></div>
<div class="abs" style="left:4px;top:107px;width:1px;height:580px;background:#E0E0E0"></div>
<div class="abs" style="left:5px;top:107px;width:1px;height:580px;background:#7A7468"></div>
<div class="abs" style="left:1273px;top:107px;width:1px;height:580px;background:#F0F0F0"></div>
</body></html>
